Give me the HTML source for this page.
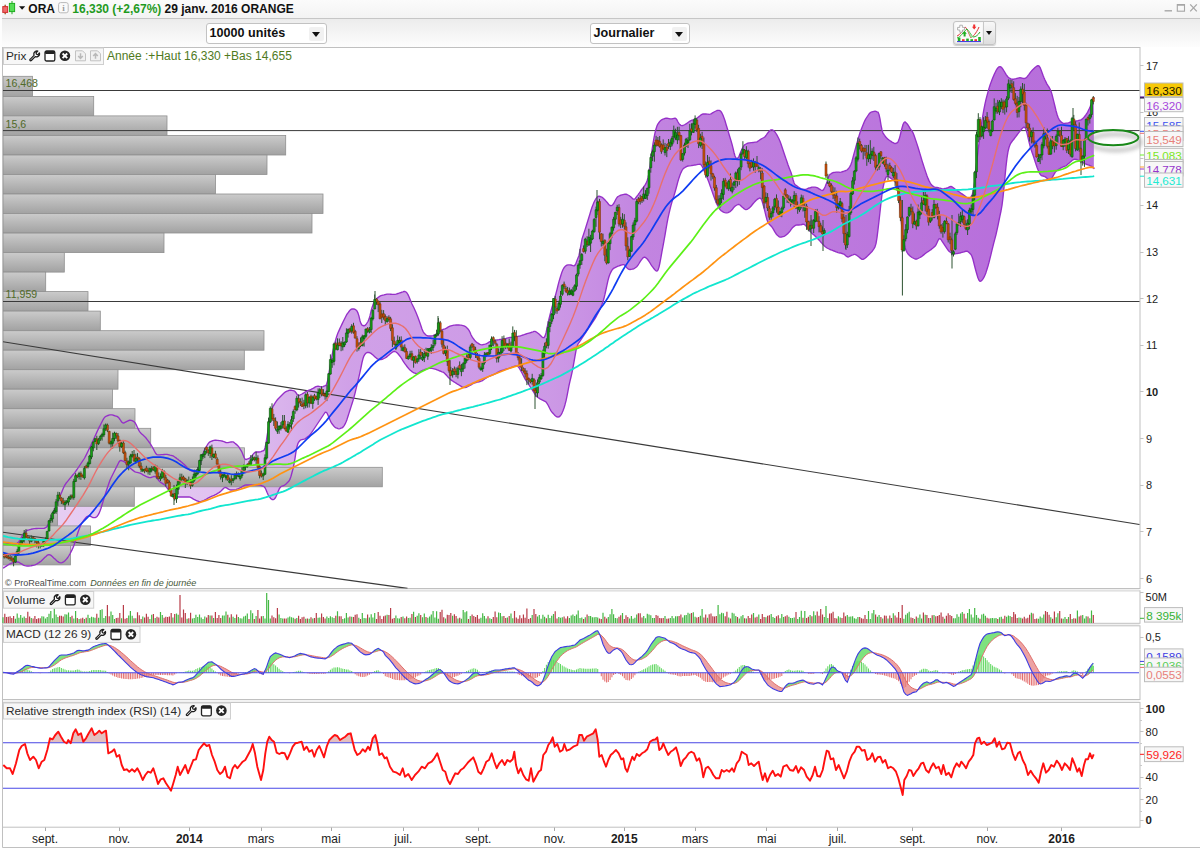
<!DOCTYPE html>
<html lang="fr">
<head>
<meta charset="utf-8">
<title>ORA - ORANGE - ProRealTime</title>
<style>
html,body{margin:0;padding:0;background:#fff;}
body{width:1200px;height:849px;overflow:hidden;position:relative;font-family:"Liberation Sans",Arial,sans-serif;}
#win{position:absolute;left:0;top:0;width:1200px;height:849px;background:#fff;overflow:hidden;}
#titlebar{position:absolute;left:0;top:0;width:1200px;height:18px;background:linear-gradient(#fbfbfb,#f3f3f3);border-bottom:1px solid #c6c6c6;box-sizing:content-box;}
#titlebar .t{position:absolute;top:1.5px;font-size:12px;font-weight:bold;line-height:14px;white-space:nowrap;color:#111;}
#titlebar .g{color:#1e9a1e;}
#toolbar{position:absolute;left:0;top:19px;width:1200px;height:28px;background:linear-gradient(#ececec,#f6f6f6 60%,#fdfdfd);}
.dd{position:absolute;top:4px;height:19px;background:#fff;border:1px solid #c2c2c2;border-radius:3px;box-sizing:content-box;font-size:12.6px;font-weight:bold;line-height:19.5px;color:#111;}
.dd span{position:absolute;left:2.6px;top:0;white-space:nowrap;}
.dd b{position:absolute;right:2px;top:3px;width:15px;height:14px;background:#f1f1f1;border-radius:2px;}
.dd i{position:absolute;right:6px;top:7.5px;width:0;height:0;border-left:4px solid transparent;border-right:4px solid transparent;border-top:5px solid #111;}
#ibtn{position:absolute;left:952.8px;top:1.8px;width:41px;height:22px;border:1px solid #c4c4c4;border-radius:3px;background:linear-gradient(#f8f8f8,#dedede);box-sizing:content-box;box-shadow:0 1px 1px rgba(0,0,0,.18);}
#ibtn .sep{position:absolute;left:29px;top:0;width:1px;height:22px;background:#c8c8c8;}
#ibtn i{position:absolute;left:32.5px;top:9.5px;width:0;height:0;border-left:3.5px solid transparent;border-right:3.5px solid transparent;border-top:4.5px solid #111;}
#wc{position:absolute;right:0;top:0;}
svg{position:absolute;left:0;top:0;}
</style>
</head>
<body>
<div id="win">
<div id="titlebar">
<svg width="28" height="18" viewBox="0 0 28 18"><path d="M5.2,4.8V14.2M12,1V14.2" stroke="#2a2" stroke-width="1"/><path d="M5.2,4.8V14.2" stroke="#d33" stroke-width="1"/><rect x="2.8" y="6.6" width="4.8" height="5.8" fill="#f06a6a" stroke="#d03030" stroke-width="1"/><rect x="9.4" y="3.4" width="5.2" height="8.2" fill="#55dd55" stroke="#1fae1f" stroke-width="1"/><path d="M19,6.3h6.2l-3.1,3.4z" fill="#111"/></svg>
<span class="t" style="left:28.3px">ORA</span>
<svg width="12" height="12" viewBox="0 0 12 12" style="left:57.5px;top:2px"><rect x="0.6" y="0.6" width="9.6" height="10.2" rx="2" fill="#fafafa" stroke="#b9b9b9" stroke-width="1"/><text x="5.4" y="9" font-family="Liberation Serif,serif" font-size="9" font-weight="bold" fill="#9a9a9a" text-anchor="middle">i</text></svg>
<span class="t g" style="left:72.3px">16,330 (+2,67%)</span>
<span class="t" style="left:164.6px">29 janv. 2016 ORANGE</span>
<svg id="wc" width="40" height="18" viewBox="0 0 40 18" style="left:1160px"><path d="M4.6,10.8h7.4" stroke="#a6a6a6" stroke-width="1.4"/><rect x="17.3" y="4.6" width="7.2" height="6.6" fill="none" stroke="#a6a6a6" stroke-width="1.1"/><path d="M17,4.9h7.8" stroke="#a6a6a6" stroke-width="1.6"/><path d="M30.2,4.4l6.6,7M36.8,4.4l-6.6,7" stroke="#a6a6a6" stroke-width="1.3"/></svg>
</div>
<div id="toolbar">
<div class="dd" style="left:206px;width:118.5px"><span>10000 unités</span><b></b><i></i></div>
<div class="dd" style="left:590px;width:98px"><span>Journalier</span><b></b><i></i></div>
<div id="ibtn"><svg width="29" height="22" viewBox="0 0 29 22">
<rect x="1.5" y="1" width="27" height="19.5" fill="#fbfbfb"/>
<path d="M3,14 C6,13 8,9 11,5 C13,6 14,10 17,16 C19,14 22,12 25,5" fill="none" stroke="#e03030" stroke-width="1"/>
<path d="M3,16 C7,15 9,10 13,7 C15,9 17,13 19,15 C22,15 24,13 26,10" fill="none" stroke="#30b030" stroke-width="1"/>
<path d="M13,7 C15,9 17,13 19,15 L17,16 C15,12 14,8 13,7Z" fill="#9be09b"/>
<path d="M5.8,3.2h2.6v2.2h2.2v2.6h-2.2v2.2h-2.6v-2.2h-2.2v-2.6h2.2z" fill="#fff" stroke="#a8a8a8" stroke-width="0.9"/>
<path d="M8.4,11.7l2.2,-2.6l2.2,2.6h-1.2v2.8h-2v-2.8z" fill="#20b020"/>
<path d="M19.2,2.4h2v2.4h1.2l-2.2,2.6l-2.2,-2.6h1.2z" fill="#f03030"/>
<rect x="3.8" y="15.6" width="2.6" height="3.6" fill="#20b020"/><rect x="8" y="17.2" width="2.6" height="2" fill="#f03030"/><rect x="12.2" y="16.6" width="2.6" height="2.6" fill="#20b020"/><rect x="16.4" y="17.2" width="2.6" height="2" fill="#20b020"/><rect x="20.4" y="17.2" width="2.6" height="2" fill="#f03030"/><rect x="24.2" y="15" width="2.6" height="4.2" fill="#20b020"/>
<path d="M3,19.6h24" stroke="#3030e0" stroke-width="1"/>
</svg><div class="sep"></div><i></i></div>
</div>
<div style="position:absolute;left:0;top:0;width:2px;height:47px;background:#fdfdfd"></div>
<svg id="chart" width="1200" height="849" viewBox="0 0 1200 849">
<defs>
<linearGradient id="gbar" x1="0" y1="0" x2="0" y2="1"><stop offset="0" stop-color="#cbcbcb"/><stop offset="1" stop-color="#a2a2a2"/></linearGradient>
<linearGradient id="gband" gradientUnits="userSpaceOnUse" x1="0" y1="0" x2="1200" y2="0">
<stop offset="0.04" stop-color="#9932cc" stop-opacity="0.24"/>
<stop offset="0.19" stop-color="#9932cc" stop-opacity="0.30"/>
<stop offset="0.29" stop-color="#9932cc" stop-opacity="0.46"/>
<stop offset="0.46" stop-color="#9932cc" stop-opacity="0.50"/>
<stop offset="0.54" stop-color="#9932cc" stop-opacity="0.60"/>
<stop offset="0.83" stop-color="#9932cc" stop-opacity="0.70"/>
</linearGradient>
<clipPath id="cmain"><rect x="3" y="48" width="1137" height="540.5"/></clipPath>
<clipPath id="cband"><rect x="3" y="48" width="1090.7" height="540.5"/></clipPath>
<clipPath id="crsi70"><rect x="3" y="703" width="1137" height="39.7"/></clipPath>
<filter id="blur" x="-30%" y="-80%" width="160%" height="300%"><feGaussianBlur stdDeviation="2.1"/></filter>
</defs>
<g fill="none" stroke="#c0c0c0" stroke-width="1">
<path d="M2.5,47.5 V847.5 H1200"/>
<rect x="2.5" y="47.5" width="1137.5" height="541"/>
<rect x="2.5" y="590.8" width="1137.5" height="32.5"/>
<path d="M3,589.7 H1139.5 M3,624.6 H1139.5 M3,700.9 H1139.5" stroke="#f0f0f0" stroke-width="1.4"/>
<rect x="2.5" y="625.8" width="1137.5" height="73.7"/>
<rect x="2.5" y="702.4" width="1137.5" height="124.8"/>
</g>
<g clip-path="url(#cmain)">
<path d="M3,542.5 L4,542.7 L5,542.9 L6,543.1 L7,543.3 L8,543.5 L9,543.7 L10,543.8 L11,543.8 L12,543.8 L13,543.8 L14,543.8 L15,543.8 L16,543.8 L17,543.4 L18,542.6 L19,541.4 L20,539.9 L21,538.1 L22,536.3 L23,534.7 L24,533.4 L25,532.2 L26,531.2 L27,530.5 L28,530.1 L29,529.9 L30,529.6 L31,529.3 L32,529 L33,528.8 L34,528.6 L35,528.6 L36,528.5 L37,528.5 L38,528.4 L39,528.3 L40,528.3 L41,528.3 L42,528.3 L43,528.3 L44,528.3 L45,528 L46,527.4 L47,526.4 L48,525 L49,523.1 L50,520.8 L51,518.4 L52,515.9 L53,513.2 L54,510.7 L55,508.2 L56,505.8 L57,503.4 L58,500.8 L59,498.4 L60,496 L61,493.7 L62,491.4 L63,489.1 L64,486.8 L65,484.9 L66,483.3 L67,482.1 L68,480.9 L69,479.6 L70,478.4 L71,477.2 L72,476 L73,474.8 L74,473.6 L75,472.3 L76,470.9 L77,469.5 L78,468 L79,466.5 L80,465 L81,463.5 L82,462 L83,460.5 L84,459 L85,457.3 L86,455.4 L87,453.4 L88,451.3 L89,449.3 L90,447.2 L91,445.1 L92,442.9 L93,440.7 L94,438.5 L95,436.3 L96,434.1 L97,431.9 L98,429.7 L99,427.6 L100,425.7 L101,423.7 L102,421.7 L103,419.8 L104,418.1 L105,417 L106,416.3 L107,415.9 L108,415.5 L109,415.1 L110,414.8 L111,414.8 L112,414.9 L113,415.2 L114,415.5 L115,415.8 L116,416.1 L117,416.4 L118,417.1 L119,418.1 L120,419.5 L121,421 L122,422.4 L123,423 L124,423 L125,422.4 L126,421.8 L127,421.3 L128,420.8 L129,420.5 L130,420.2 L131,420.3 L132,420.7 L133,421.2 L134,421.7 L135,422.7 L136,424.3 L137,426.5 L138,428.6 L139,430.6 L140,432.1 L141,433.3 L142,434.2 L143,435.1 L144,436 L145,436.9 L146,438 L147,439.3 L148,440.7 L149,442 L150,443.4 L151,444.8 L152,446.5 L153,448.3 L154,450.3 L155,452.2 L156,453.8 L157,454.7 L158,454.9 L159,454.8 L160,454.8 L161,454.7 L162,454.6 L163,454.6 L164,454.5 L165,454.4 L166,454.4 L167,454.4 L168,454.6 L169,454.8 L170,455.1 L171,455.3 L172,455.6 L173,455.9 L174,456.5 L175,457.2 L176,457.9 L177,458.7 L178,459.4 L179,460.2 L180,460.9 L181,461.7 L182,462.5 L183,463.4 L184,464.3 L185,465.3 L186,466.3 L187,467.4 L188,468.4 L189,469.4 L190,470.2 L191,470.7 L192,471.1 L193,471.4 L194,471.6 L195,471.4 L196,470.7 L197,469.7 L198,468.7 L199,467.1 L200,464.6 L201,461.2 L202,457.5 L203,453.9 L204,451 L205,448.7 L206,447.1 L207,445.5 L208,443.9 L209,442.6 L210,441.8 L211,441.3 L212,441 L213,440.6 L214,440.3 L215,440.2 L216,440.2 L217,440.3 L218,440.4 L219,440.6 L220,440.7 L221,440.8 L222,441 L223,441.3 L224,441.7 L225,442.1 L226,442.5 L227,442.7 L228,442.6 L229,442.4 L230,442.2 L231,442 L232,441.8 L233,441.9 L234,442.4 L235,443.3 L236,444.1 L237,444.9 L238,445.9 L239,447.2 L240,448.8 L241,450.4 L242,452.3 L243,454.7 L244,457.3 L245,459 L246,459.6 L247,459.2 L248,458.8 L249,458.4 L250,457.7 L251,456.8 L252,455.6 L253,454.4 L254,453.2 L255,452.4 L256,452 L257,452 L258,452 L259,452 L260,451.9 L261,451.6 L262,451.2 L263,450.8 L264,450.4 L265,447.9 L266,443.3 L267,436.7 L268,430.4 L269,424.5 L270,419 L271,413.5 L272,409.3 L273,406.4 L274,404.8 L275,403.2 L276,401.6 L277,400.2 L278,399 L279,398 L280,397 L281,396 L282,395 L283,394 L284,393 L285,392.2 L286,391.6 L287,391.2 L288,390.8 L289,390.4 L290,390.2 L291,390.2 L292,390.4 L293,390.6 L294,390.8 L295,391.5 L296,392.7 L297,394.3 L298,395.3 L299,395.5 L300,395 L301,394.5 L302,394 L303,393.4 L304,392.8 L305,392.2 L306,391.6 L307,391.1 L308,390.6 L309,390.2 L310,389.8 L311,389.4 L312,388.9 L313,388.4 L314,387.8 L315,387.2 L316,386.6 L317,386.3 L318,386.2 L319,386.4 L320,386.6 L321,386.8 L322,386.8 L323,386.6 L324,386.2 L325,385.8 L326,385.4 L327,383.1 L328,379 L329,373 L330,367.1 L331,361.3 L332,355.7 L333,350.6 L334,346.2 L335,342.5 L336,338.8 L337,335.5 L338,332.8 L339,330.6 L340,328.4 L341,326.2 L342,324.1 L343,322 L344,320 L345,318 L346,316 L347,314.2 L348,312.8 L349,311.5 L350,310.2 L351,309.4 L352,309 L353,309 L354,309 L355,309.3 L356,310 L357,311 L358,313.1 L359,316.3 L360,320.7 L361,323.6 L362,325.2 L363,325.5 L364,325.8 L365,325.4 L366,324.5 L367,323 L368,321.5 L369,319.1 L370,315.7 L371,311.3 L372,307.7 L373,304.7 L374,302.3 L375,300.5 L376,299.2 L377,298.4 L378,297.6 L379,296.8 L380,296.2 L381,295.7 L382,295.4 L383,295.1 L384,294.9 L385,294.6 L386,294.3 L387,294.1 L388,294.1 L389,294.1 L390,294.2 L391,294.2 L392,294.3 L393,294.4 L394,294.4 L395,294.4 L396,294.2 L397,293.8 L398,293.5 L399,293.2 L400,292.8 L401,292.5 L402,292.1 L403,291.8 L404,291.4 L405,291.5 L406,292 L407,293 L408,294.6 L409,296.7 L410,299.3 L411,301.8 L412,304 L413,306 L414,308 L415,310.2 L416,312.5 L417,315 L418,317.5 L419,320.2 L420,323 L421,326 L422,329 L423,331.3 L424,333 L425,334 L426,335 L427,335.7 L428,336 L429,336 L430,336 L431,336 L432,335.9 L433,335.6 L434,335.2 L435,334.8 L436,334.4 L437,333.8 L438,333 L439,332 L440,331 L441,330.2 L442,329.8 L443,329.5 L444,329.2 L445,328.9 L446,328.4 L447,327.8 L448,327.2 L449,326.6 L450,326.1 L451,325.8 L452,325.6 L453,325.4 L454,325.2 L455,325.1 L456,325 L457,325 L458,325 L459,325 L460,325.1 L461,325.2 L462,325.4 L463,325.6 L464,325.8 L465,326.3 L466,327 L467,328 L468,329 L469,330.4 L470,332.3 L471,334.7 L472,336.6 L473,338.2 L474,339.5 L475,340.8 L476,341.8 L477,342.6 L478,343.2 L479,343.8 L480,344.4 L481,344.7 L482,344.8 L483,344.6 L484,344.4 L485,344.2 L486,343.9 L487,343.4 L488,342.8 L489,342.2 L490,341.6 L491,341.1 L492,340.8 L493,340.7 L494,340.5 L495,340.3 L496,340.2 L497,340 L498,339.8 L499,339.7 L500,339.5 L501,339.3 L502,339.2 L503,339 L504,338.8 L505,338.6 L506,338.4 L507,338.1 L508,337.9 L509,337.7 L510,337.5 L511,337.4 L512,337.3 L513,337.2 L514,337.1 L515,337 L516,336.8 L517,336.6 L518,336.4 L519,336.2 L520,336 L521,335.7 L522,335.3 L523,335 L524,334.7 L525,334.3 L526,334 L527,333.7 L528,333.4 L529,333.1 L530,332.8 L531,332.5 L532,332.1 L533,331.8 L534,331.4 L535,331.4 L536,331.8 L537,332.5 L538,333.2 L539,334.1 L540,335 L541,336 L542,337 L543,337.6 L544,337.7 L545,336.1 L546,332.9 L547,328.2 L548,323.4 L549,319 L550,314.9 L551,311 L552,307.3 L553,303.9 L554,300.4 L555,297 L556,293.4 L557,289.6 L558,285.5 L559,281.7 L560,278.2 L561,275 L562,271.9 L563,269.5 L564,267.8 L565,266.6 L566,265.7 L567,265.1 L568,264.9 L569,264.9 L570,264.9 L571,265 L572,265.3 L573,265.7 L574,265.9 L575,265.1 L576,263.3 L577,260.6 L578,258.1 L579,255.5 L580,250.2 L581,244.7 L582,239 L583,236 L584,233 L585,229.9 L586,226.8 L587,223.5 L588,220.2 L589,217 L590,213.7 L591,210.3 L592,207.3 L593,204.7 L594,202.3 L595,200.3 L596,198.7 L597,197.3 L598,196.5 L599,196.2 L600,196.5 L601,196.8 L602,197.2 L603,198 L604,199 L605,200 L606,201.1 L607,202.2 L608,203.5 L609,204.8 L610,205.5 L611,205.7 L612,205.3 L613,204.4 L614,203 L615,201 L616,199 L617,197.5 L618,196.5 L619,196 L620,195.5 L621,195.1 L622,194.8 L623,194.6 L624,194.4 L625,194.2 L626,194.2 L627,194.5 L628,195 L629,195.5 L630,196.2 L631,197 L632,198 L633,199 L634,199.2 L635,198.8 L636,197.5 L637,196.2 L638,194.9 L639,193.5 L640,192 L641,190.5 L642,189.1 L643,187.8 L644,186.5 L645,185.2 L646,183.4 L647,181 L648,178 L649,173 L650,166 L651,157.8 L652,150.3 L653,143.7 L654,137.9 L655,133 L656,129 L657,125.9 L658,123.8 L659,122.5 L660,121.2 L661,120.3 L662,119.6 L663,119.2 L664,118.8 L665,118.4 L666,118.2 L667,118.2 L668,118.4 L669,118.6 L670,118.8 L671,118.9 L672,118.8 L673,118.6 L674,118.4 L675,118.2 L676,118.7 L677,120 L678,122 L679,123.6 L680,124.7 L681,125.3 L682,125.6 L683,125.5 L684,125 L685,124.5 L686,123.9 L687,123.2 L688,122.5 L689,121.8 L690,121.1 L691,120.6 L692,120.2 L693,119.9 L694,119.5 L695,119 L696,118.5 L697,118 L698,117.4 L699,116.6 L700,115.8 L701,114.9 L702,114.3 L703,114 L704,114 L705,114 L706,114 L707,114.1 L708,114.2 L709,114.4 L710,114.2 L711,113.9 L712,113.2 L713,112.6 L714,112 L715,111.5 L716,111 L717,110.5 L718,110.3 L719,110.3 L720,110.7 L721,111.6 L722,113.2 L723,115.3 L724,117.9 L725,120.8 L726,124.2 L727,127.5 L728,130.8 L729,134.2 L730,137.5 L731,140.8 L732,144.2 L733,148.1 L734,152.5 L735,156 L736,158 L737,158.5 L738,157.9 L739,156.3 L740,153.7 L741,151.2 L742,149 L743,147 L744,145.5 L745,144.5 L746,144 L747,143.5 L748,143.1 L749,142.9 L750,142.8 L751,142.7 L752,142.6 L753,142.5 L754,142.4 L755,142.2 L756,142.1 L757,141.8 L758,141.2 L759,140.5 L760,139.8 L761,139.1 L762,138.5 L763,138 L764,137.5 L765,136.7 L766,135.5 L767,134 L768,132.7 L769,131.5 L770,130.5 L771,129.9 L772,129.8 L773,130.2 L774,130.9 L775,132 L776,133.5 L777,135.2 L778,137 L779,139 L780,141.3 L781,144 L782,147 L783,150 L784,153 L785,156 L786,158.9 L787,161.8 L788,164.7 L789,167.4 L790,170 L791,172.5 L792,175.7 L793,179.5 L794,182.7 L795,184.7 L796,185.3 L797,186 L798,186.8 L799,187.5 L800,188.2 L801,188.8 L802,189.1 L803,189.2 L804,189.4 L805,189.3 L806,189.1 L807,188.8 L808,188.4 L809,188 L810,187.8 L811,187.5 L812,187.2 L813,187.1 L814,187.1 L815,187.2 L816,187.4 L817,187.7 L818,188.2 L819,188.8 L820,189.4 L821,190 L822,190.5 L823,190.2 L824,189 L825,187 L826,184.6 L827,181.7 L828,178.3 L829,175.9 L830,174.4 L831,173.8 L832,173.1 L833,172.7 L834,172.4 L835,172.3 L836,172.2 L837,172.1 L838,172.1 L839,172.2 L840,172.3 L841,172.2 L842,171.8 L843,171.5 L844,171.2 L845,170.8 L846,170.5 L847,170 L848,169.1 L849,167.9 L850,166.4 L851,164.2 L852,161.2 L853,157.5 L854,153.8 L855,150.1 L856,146.5 L857,143 L858,139.5 L859,136 L860,132.8 L861,130 L862,127.5 L863,125 L864,122.5 L865,120.3 L866,118.5 L867,117 L868,115.5 L869,114 L870,112.9 L871,112.2 L872,111.9 L873,111.6 L874,111.3 L875,111.2 L876,111.4 L877,111.8 L878,112.1 L879,114.5 L880,118.8 L881,125.1 L882,129.9 L883,133.1 L884,134.5 L885,136 L886,137.3 L887,138.4 L888,139.2 L889,140 L890,140.7 L891,141.4 L892,142.1 L893,142.6 L894,143.2 L895,143.5 L896,143.4 L897,142.9 L898,141.9 L899,139.6 L900,136.1 L901,131.9 L902,128.1 L903,124.5 L904,122.5 L905,121.9 L906,122.7 L907,123.7 L908,125 L909,126.6 L910,128.3 L911,129.7 L912,131 L913,132.8 L914,135.2 L915,138.2 L916,141.1 L917,144.1 L918,147.3 L919,150.5 L920,153.9 L921,157.3 L922,160.6 L923,163.8 L924,166.9 L925,169.9 L926,172.9 L927,175.8 L928,178.4 L929,180.6 L930,182.5 L931,184.1 L932,185.3 L933,186.2 L934,186.8 L935,187.1 L936,187.3 L937,187.5 L938,187.7 L939,188 L940,188.2 L941,188.5 L942,188.8 L943,188.8 L944,188.7 L945,188.5 L946,188.3 L947,188 L948,187.7 L949,187.1 L950,186.6 L951,186.4 L952,186.8 L953,187.5 L954,188.2 L955,189 L956,189.7 L957,190.4 L958,191.1 L959,191.8 L960,192.5 L961,193.2 L962,193.9 L963,194.6 L964,195.3 L965,196 L966,196.8 L967,197.5 L968,198.2 L969,198.5 L970,198.2 L971,196.9 L972,195 L973,192.5 L974,187 L975,179.1 L976,168.9 L977,159.8 L978,151.2 L979,143.2 L980,135.4 L981,127.9 L982,120.9 L983,114.5 L984,108.8 L985,103.8 L986,99.4 L987,95.6 L988,91.9 L989,88.4 L990,85.3 L991,82.4 L992,79.8 L993,77.3 L994,74.9 L995,72.7 L996,70.7 L997,69 L998,67.7 L999,66.8 L1000,66.6 L1001,66.9 L1002,67.9 L1003,69.3 L1004,71 L1005,72.7 L1006,74.3 L1007,75.8 L1008,77 L1009,77.9 L1010,78.5 L1011,78.9 L1012,79.2 L1013,79.2 L1014,79.2 L1015,78.9 L1016,78.7 L1017,78.4 L1018,78.1 L1019,77.9 L1020,77.7 L1021,77.8 L1022,78.1 L1023,78.4 L1024,78.5 L1025,78.4 L1026,77.8 L1027,76.9 L1028,75.6 L1029,74.3 L1030,72.9 L1031,71.6 L1032,70.5 L1033,69.4 L1034,68.4 L1035,67.5 L1036,66.7 L1037,66 L1038,65.7 L1039,66 L1040,67.3 L1041,69.7 L1042,72.4 L1043,75.2 L1044,77.7 L1045,80 L1046,82.1 L1047,84.1 L1048,85.7 L1049,87.2 L1050,89 L1051,91.2 L1052,94.4 L1053,98.3 L1054,102.4 L1055,106.5 L1056,110.7 L1057,114.3 L1058,117.3 L1059,119.3 L1060,120.8 L1061,121.9 L1062,122.6 L1063,123.1 L1064,123.3 L1065,123.4 L1066,123.2 L1067,123.1 L1068,122.9 L1069,122.6 L1070,122.2 L1071,121.9 L1072,121.7 L1073,121.5 L1074,121.3 L1075,121.2 L1076,121 L1077,120.9 L1078,120.7 L1079,120.4 L1080,120.1 L1081,119.8 L1082,119.2 L1083,118.4 L1084,117.3 L1085,116 L1086,114.7 L1087,113.1 L1088,111.4 L1089,109.4 L1090,107.1 L1091,104.5 L1092,101.7 L1093,99.4 L1094,98 L1094.2,97.4 L1094.2,169 L1094,168.5 L1093,167.7 L1092,166.8 L1091,166.1 L1090,165.6 L1089,165.2 L1088,164.8 L1087,164.5 L1086,164.1 L1085,163.7 L1084,163.2 L1083,162.6 L1082,161.9 L1081,161.4 L1080,160.9 L1079,160.5 L1078,160 L1077,159.5 L1076,159.3 L1075,159.2 L1074,159.4 L1073,159.8 L1072,160.5 L1071,161.4 L1070,162.3 L1069,163.2 L1068,164.1 L1067,165.1 L1066,165.8 L1065,166.2 L1064,166.5 L1063,166.8 L1062,167.3 L1061,167.9 L1060,168.5 L1059,169.1 L1058,169.8 L1057,170.5 L1056,171.4 L1055,172.6 L1054,174.3 L1053,176.2 L1052,177.9 L1051,179.2 L1050,179.9 L1049,179.8 L1048,179.2 L1047,178.3 L1046,177.4 L1045,176.7 L1044,176.3 L1043,176 L1042,175.9 L1041,175.2 L1040,174 L1039,172.1 L1038,169.8 L1037,167.2 L1036,164.3 L1035,161.2 L1034,158 L1033,155.1 L1032,152.3 L1031,149.3 L1030,145.9 L1029,141.8 L1028,137.3 L1027,133 L1026,129.5 L1025,127.6 L1024,127.1 L1023,127.8 L1022,128.7 L1021,129.8 L1020,131.1 L1019,132.3 L1018,133.7 L1017,135 L1016,136.4 L1015,137.7 L1014,139 L1013,140.2 L1012,141.5 L1011,142.9 L1010,144.7 L1009,147.5 L1008,151.7 L1007,158 L1006,166.4 L1005,176.7 L1004,187.4 L1003,197.5 L1002,205.3 L1001,211 L1000,215.7 L999,220.5 L998,225.5 L997,230.2 L996,234.5 L995,238.4 L994,242.2 L993,246.1 L992,250.1 L991,254.3 L990,258.4 L989,262.4 L988,266 L987,269.3 L986,272.4 L985,275 L984,277.1 L983,278.8 L982,280.2 L981,281.1 L980,281.4 L979,280.3 L978,278 L977,274.7 L976,271.2 L975,267.5 L974,263.6 L973,259.5 L972,256.5 L971,254.5 L970,253.5 L969,252.6 L968,251.7 L967,251.2 L966,251.2 L965,251.5 L964,251.8 L963,252.1 L962,252.4 L961,252.7 L960,253 L959,253.2 L958,253.4 L957,253.6 L956,253.7 L955,253.9 L954,254.1 L953,254 L952,253.5 L951,252.8 L950,252 L949,251.2 L948,250 L947,248.7 L946,247.2 L945,245.7 L944,244.1 L943,242.6 L942,241.1 L941,239.5 L940,238.7 L939,238.9 L938,240.5 L937,242.8 L936,244.9 L935,246.3 L934,247.1 L933,248 L932,248.8 L931,249.6 L930,250.3 L929,251 L928,251.6 L927,252.3 L926,253 L925,253.8 L924,254.6 L923,255.4 L922,256.2 L921,256.9 L920,257.5 L919,258 L918,258.5 L917,259 L916,259.2 L915,259 L914,258.5 L913,258 L912,257.5 L911,256.8 L910,256 L909,255 L908,254 L907,252.4 L906,250.3 L905,247.5 L904,243.4 L903,237.2 L902,228.5 L901,218.7 L900,208.4 L899,199.1 L898,191.2 L897,186.1 L896,183 L895,181.7 L894,180.7 L893,179.8 L892,179.1 L891,178.4 L890,177.6 L889,176.9 L888,176.1 L887,176.2 L886,177.2 L885,179.7 L884,183.2 L883,187.8 L882,194.4 L881,202.6 L880,212 L879,220.8 L878,229.6 L877,237.6 L876,243.6 L875,246.8 L874,248.6 L873,250.2 L872,251.5 L871,252.5 L870,253.5 L869,254.6 L868,255.6 L867,256.5 L866,257.4 L865,258.2 L864,258.9 L863,259.4 L862,259.3 L861,258.7 L860,257.9 L859,257 L858,256.2 L857,255.5 L856,254.8 L855,254.4 L854,254.4 L853,254.8 L852,255.1 L851,255.6 L850,256.1 L849,256.6 L848,257 L847,256.7 L846,256 L845,255 L844,254.2 L843,253.8 L842,253.5 L841,253.2 L840,253 L839,252.8 L838,252.6 L837,252.2 L836,251.9 L835,251.4 L834,251 L833,250.6 L832,250.2 L831,249.9 L830,249.5 L829,249 L828,248.5 L827,248 L826,247.3 L825,246.5 L824,245.5 L823,244.5 L822,243.4 L821,242.3 L820,241.1 L819,240 L818,239 L817,238 L816,237 L815,236 L814,235.1 L813,234.2 L812,233.4 L811,232.3 L810,231.1 L809,229.6 L808,228.3 L807,227.1 L806,226 L805,225 L804,224.4 L803,224.2 L802,224.5 L801,224.8 L800,224.9 L799,225 L798,225 L797,225 L796,225.2 L795,225.7 L794,226.4 L793,227.3 L792,228.3 L791,229.6 L790,231.1 L789,232.3 L788,233.4 L787,234.2 L786,235.1 L785,235.8 L784,236.3 L783,236.6 L782,236.9 L781,237.2 L780,237.1 L779,236.6 L778,235.8 L777,234.9 L776,233.7 L775,232.1 L774,230.3 L773,228.6 L772,227.1 L771,226 L770,225 L769,224 L768,222.5 L767,219.8 L766,216.1 L765,211.8 L764,207.8 L763,204.2 L762,200.8 L761,198.8 L760,197.9 L759,198.4 L758,198.9 L757,199.6 L756,200.5 L755,201.5 L754,202.6 L753,203.8 L752,205 L751,206.2 L750,207.3 L749,208.1 L748,208.8 L747,209.4 L746,209.6 L745,209.3 L744,208.6 L743,207.8 L742,207 L741,206 L740,205 L739,204.5 L738,204.5 L737,205 L736,205.5 L735,206.2 L734,207.2 L733,208.5 L732,209.8 L731,210.8 L730,211.6 L729,212.1 L728,212.6 L727,212.8 L726,212.8 L725,212.6 L724,212.3 L723,211.9 L722,211.2 L721,210.6 L720,209.6 L719,208.1 L718,206.2 L717,204.4 L716,202.2 L715,199.6 L714,196.8 L713,193.9 L712,191.1 L711,188.2 L710,185.4 L709,182.6 L708,180 L707,177.5 L706,175 L705,172.6 L704,170.4 L703,168.2 L702,166.1 L701,164.8 L700,164.1 L699,164.3 L698,164.4 L697,164.6 L696,164.8 L695,165 L694,165.2 L693,165.4 L692,165.5 L691,165.7 L690,165.8 L689,165.8 L688,166 L687,166.4 L686,166.9 L685,167.5 L684,168.1 L683,169 L682,170.5 L681,172.6 L680,175.1 L679,177.9 L678,181.2 L677,185 L676,188.8 L675,192.3 L674,195.6 L673,198.8 L672,201.9 L671,205.4 L670,209.3 L669,213.6 L668,218.2 L667,223.3 L666,229.1 L665,235.1 L664,240.7 L663,246.1 L662,251.4 L661,257.1 L660,262.5 L659,267.1 L658,270 L657,271.1 L656,270.8 L655,269.9 L654,268.8 L653,267.4 L652,266.1 L651,264.6 L650,263 L649,261.4 L648,260 L647,258.8 L646,257.9 L645,257.2 L644,257.2 L643,257.9 L642,259.1 L641,260.4 L640,261.8 L639,263.5 L638,265.1 L637,266.4 L636,267.3 L635,268 L634,268.6 L633,269 L632,269.2 L631,269.3 L630,269.5 L629,269.3 L628,268.8 L627,267.9 L626,266.7 L625,265.4 L624,264.7 L623,264.6 L622,264.9 L621,265.2 L620,265.5 L619,265.9 L618,266.2 L617,266.6 L616,267.1 L615,267.6 L614,268.1 L613,268.9 L612,270.2 L611,271.9 L610,274 L609,276.8 L608,280.4 L607,284.9 L606,289.5 L605,294.2 L604,298.3 L603,301.6 L602,304.3 L601,306.8 L600,309.1 L599,311.1 L598,313.1 L597,315 L596,316.9 L595,318.6 L594,320.1 L593,321.7 L592,323.2 L591,324.7 L590,326.2 L589,327.7 L588,329.1 L587,330.6 L586,332.1 L585,333.6 L584,335.1 L583,336.6 L582,338.1 L581,339.6 L580,341.1 L579,342.5 L578,344 L577,346.7 L576,350.7 L575,356.2 L574,361.9 L573,367.5 L572,372.6 L571,377 L570,381.1 L569,385.7 L568,390.8 L567,396.2 L566,400.9 L565,404.7 L564,408 L563,410.8 L562,413.1 L561,414.8 L560,416.1 L559,416.9 L558,417 L557,416.8 L556,416.3 L555,415.5 L554,414.4 L553,413.3 L552,412.2 L551,410.8 L550,409 L549,407 L548,405 L547,403.3 L546,402 L545,401.3 L544,400.8 L543,400.3 L542,399.8 L541,399.3 L540,398.8 L539,398.2 L538,397.5 L537,396.7 L536,395.7 L535,394.3 L534,392.7 L533,391.1 L532,389.5 L531,388 L530,386.5 L529,385 L528,383.5 L527,382 L526,380.5 L525,378.8 L524,377 L523,375 L522,373 L521,371.1 L520,369.3 L519,367.7 L518,366.6 L517,366 L516,366 L515,366.1 L514,366.4 L513,366.8 L512,367.2 L511,367.6 L510,368 L509,368.3 L508,368.6 L507,368.9 L506,369.2 L505,369.5 L504,369.8 L503,370.1 L502,370.4 L501,370.7 L500,371.1 L499,371.6 L498,372.2 L497,372.8 L496,373.4 L495,373.9 L494,374.4 L493,374.8 L492,375.2 L491,375.6 L490,376 L489,376.5 L488,377 L487,377.5 L486,378.1 L485,378.8 L484,379.5 L483,380.2 L482,380.8 L481,381.2 L480,381.5 L479,381.8 L478,382 L477,382.2 L476,382.5 L475,382.8 L474,383.1 L473,383.6 L472,384.2 L471,384.9 L470,385.5 L469,386 L468,386.5 L467,387 L466,387.3 L465,387.5 L464,387.5 L463,387.3 L462,386.9 L461,386.2 L460,385.6 L459,385 L458,384.4 L457,383.8 L456,383.1 L455,382.5 L454,381.9 L453,381.2 L452,380.6 L451,379.9 L450,379 L449,378 L448,377 L447,375.9 L446,374.8 L445,373.7 L444,372.8 L443,372.1 L442,371.8 L441,371.4 L440,371 L439,370.6 L438,370.2 L437,369.8 L436,369.4 L435,369.1 L434,368.8 L433,368.6 L432,368.4 L431,368.2 L430,368.2 L429,368.3 L428,368.6 L427,368.9 L426,369.2 L425,369.5 L424,369.9 L423,370.2 L422,370.6 L421,371.1 L420,371.8 L419,372.5 L418,373.2 L417,373.6 L416,373.6 L415,373.2 L414,372.9 L413,372.3 L412,371.6 L411,370.8 L410,369.9 L409,368.9 L408,367.8 L407,366.5 L406,365.2 L405,363.9 L404,362.4 L403,360.8 L402,359.1 L401,357.6 L400,356.2 L399,355 L398,353.8 L397,352.8 L396,352 L395,351.5 L394,351.4 L393,351.8 L392,352.5 L391,353.2 L390,354 L389,354.9 L388,355.8 L387,356.6 L386,357.4 L385,358 L384,358.5 L383,359 L382,359.3 L381,359.5 L380,359.5 L379,359.5 L378,359.2 L377,358.6 L376,357.8 L375,356.9 L374,356 L373,355.1 L372,354.2 L371,353.4 L370,352.8 L369,352.5 L368,352.5 L367,352.5 L366,353.1 L365,354.2 L364,355.8 L363,358.6 L362,362.5 L361,367.5 L360,372.2 L359,376.7 L358,380.8 L357,385 L356,389.2 L355,393.3 L354,397.2 L353,400.6 L352,403.8 L351,406.9 L350,410 L349,413.1 L348,416.2 L347,419.4 L346,422 L345,424.2 L344,425.8 L343,427.1 L342,427.9 L341,428.2 L340,428.6 L339,428.8 L338,428.6 L337,428.2 L336,427.9 L335,427.2 L334,426.2 L333,425 L332,423.8 L331,422.1 L330,420 L329,417.5 L328,415.2 L327,413 L326,412.2 L325,412.5 L324,414 L323,415.5 L322,417 L321,418.5 L320,420 L319,421.5 L318,423 L317,424.5 L316,426 L315,427.5 L314,429 L313,430.5 L312,432 L311,433.5 L310,434.8 L309,435.8 L308,436.6 L307,437.4 L306,438.2 L305,438.8 L304,439.2 L303,439.4 L302,439.6 L301,439.8 L300,440.5 L299,441.7 L298,443.3 L297,446.7 L296,451.7 L295,458.3 L294,464 L293,468.8 L292,472.5 L291,476.2 L290,479.1 L289,481 L288,482 L287,483 L286,484 L285,484.8 L284,485.4 L283,485.8 L282,486.2 L281,486.6 L280,487.7 L279,489.4 L278,491.8 L277,494.2 L276,496.6 L275,498.3 L274,499.3 L273,499.7 L272,499.5 L271,498.8 L270,497.5 L269,496.2 L268,494.5 L267,492.3 L266,489.7 L265,487.8 L264,486.6 L263,486.2 L262,485.8 L261,485.4 L260,485.1 L259,485 L258,485 L257,485 L256,485 L255,485 L254,485 L253,485 L252,485 L251,485 L250,485 L249,485 L248,485 L247,485 L246,485 L245,485.2 L244,485.6 L243,486.2 L242,486.8 L241,487.4 L240,487.9 L239,488.4 L238,488.8 L237,489.2 L236,489.6 L235,489.9 L234,490 L233,490 L232,490 L231,490 L230,489.8 L229,489.4 L228,488.8 L227,488.2 L226,487.6 L225,487.5 L224,488 L223,489 L222,490 L221,491 L220,491.9 L219,492.6 L218,493.2 L217,493.8 L216,494.4 L215,494.9 L214,495.4 L213,495.8 L212,496.2 L211,496.6 L210,497.1 L209,497.6 L208,498.2 L207,498.8 L206,499.4 L205,499.9 L204,500.4 L203,500.8 L202,501.2 L201,501.6 L200,501.7 L199,501.6 L198,501.2 L197,500.8 L196,500.4 L195,499.9 L194,499.4 L193,498.8 L192,498.2 L191,497.6 L190,497.2 L189,497 L188,497 L187,497 L186,497 L185,497 L184,497 L183,497 L182,497 L181,497 L180,497 L179,497 L178,497 L177,497 L176,497 L175,496.7 L174,496 L173,495 L172,494 L171,493 L170,491.9 L169,490.6 L168,489.2 L167,487.8 L166,486.4 L165,485.3 L164,484.4 L163,483.8 L162,483.2 L161,482.6 L160,481.8 L159,480.8 L158,479.6 L157,478.4 L156,477.2 L155,476.5 L154,476.4 L153,476.8 L152,477.2 L151,477.6 L150,477.7 L149,477.6 L148,477.2 L147,476.8 L146,476.4 L145,475.9 L144,475.4 L143,474.8 L142,474.2 L141,473.6 L140,473.1 L139,472.8 L138,472.6 L137,472.4 L136,472.2 L135,471.8 L134,471.2 L133,470.4 L132,469.6 L131,468.8 L130,467.9 L129,466.8 L128,465.6 L127,464.4 L126,463.2 L125,462.3 L124,461.6 L123,461.2 L122,460.8 L121,460.4 L120,460.8 L119,462 L118,464 L117,466 L116,468 L115,470 L114,472 L113,474 L112,476 L111,478 L110,480.3 L109,483 L108,486 L107,489 L106,492 L105,495.1 L104,498.3 L103,501.6 L102,504.9 L101,508.2 L100,511 L99,513.4 L98,515.2 L97,516.5 L96,517.3 L95,517.5 L94,517.6 L93,517.5 L92,517.1 L91,516.5 L90,516.1 L89,515.9 L88,516.1 L87,516.6 L86,517.5 L85,518.7 L84,520 L83,521.3 L82,522.9 L81,524.8 L80,527.1 L79,529.4 L78,532.2 L77,535.4 L76,538.9 L75,542.3 L74,545.2 L73,547.7 L72,549.9 L71,551.9 L70,553.8 L69,555.5 L68,557.1 L67,558.5 L66,559.6 L65,560.7 L64,561.6 L63,562.2 L62,562.7 L61,562.8 L60,562.7 L59,562.3 L58,561.7 L57,561 L56,560.1 L55,559.1 L54,558.2 L53,557.2 L52,556.2 L51,555.4 L50,554.9 L49,554.7 L48,554.9 L47,555.4 L46,556.4 L45,557.3 L44,558.3 L43,559.3 L42,560.2 L41,561.2 L40,561.9 L39,562.6 L38,563.2 L37,563.9 L36,564.4 L35,564.8 L34,565.1 L33,565.3 L32,565.5 L31,565.8 L30,565.9 L29,566 L28,566 L27,566 L26,565.9 L25,565.7 L24,565.3 L23,564.8 L22,564.2 L21,563.6 L20,563 L19,562.4 L18,562 L17,561.8 L16,562 L15,562.1 L14,562.3 L13,562.6 L12,563 L11,563.5 L10,563.9 L9,564.4 L8,565 L7,565.7 L6,566.3 L5,567 L4,567.6 L3,568.3Z" fill="url(#gband)" clip-path="url(#cband)"/>
<g fill="url(#gbar)" stroke="#8f8f8f" stroke-width="0.8">
<rect x="3" y="76.3" width="29.5" height="20.1"/>
<rect x="3" y="96.4" width="90.7" height="19.5"/>
<rect x="3" y="115.9" width="164.0" height="19.5"/>
<rect x="3" y="135.5" width="282.7" height="19.5"/>
<rect x="3" y="155.0" width="264.0" height="19.5"/>
<rect x="3" y="174.5" width="212.5" height="19.5"/>
<rect x="3" y="194.0" width="320.0" height="19.5"/>
<rect x="3" y="213.5" width="309.0" height="19.5"/>
<rect x="3" y="233.1" width="161.0" height="19.5"/>
<rect x="3" y="252.6" width="61.3" height="19.5"/>
<rect x="3" y="272.1" width="42.7" height="19.5"/>
<rect x="3" y="291.6" width="85.0" height="19.5"/>
<rect x="3" y="311.1" width="97.3" height="19.5"/>
<rect x="3" y="330.7" width="261.0" height="19.5"/>
<rect x="3" y="350.2" width="241.3" height="19.5"/>
<rect x="3" y="369.7" width="115.0" height="19.5"/>
<rect x="3" y="389.2" width="109.4" height="19.5"/>
<rect x="3" y="408.7" width="132.0" height="19.5"/>
<rect x="3" y="428.3" width="147.7" height="19.5"/>
<rect x="3" y="447.8" width="241.4" height="19.5"/>
<rect x="3" y="467.3" width="379.3" height="19.5"/>
<rect x="3" y="486.8" width="131.3" height="19.5"/>
<rect x="3" y="506.3" width="54.5" height="19.5"/>
<rect x="3" y="525.9" width="87.5" height="19.5"/>
<rect x="3" y="545.4" width="67.5" height="19.5"/>
</g>
<g stroke="#3a3a3a" stroke-width="1" fill="none">
<path d="M3,90.5 H1139.5 M3,130.6 H1139.5 M3,301.5 H1139.5"/>
<path d="M3,341.7 L1139.5,524.5" stroke-width="1.15"/>
<path d="M3,532.2 L407.5,588.4" stroke-width="1.15"/>
</g>
<path d="M3,542.5 L4,542.7 L5,542.9 L6,543.1 L7,543.3 L8,543.5 L9,543.7 L10,543.8 L11,543.8 L12,543.8 L13,543.8 L14,543.8 L15,543.8 L16,543.8 L17,543.4 L18,542.6 L19,541.4 L20,539.9 L21,538.1 L22,536.3 L23,534.7 L24,533.4 L25,532.2 L26,531.2 L27,530.5 L28,530.1 L29,529.9 L30,529.6 L31,529.3 L32,529 L33,528.8 L34,528.6 L35,528.6 L36,528.5 L37,528.5 L38,528.4 L39,528.3 L40,528.3 L41,528.3 L42,528.3 L43,528.3 L44,528.3 L45,528 L46,527.4 L47,526.4 L48,525 L49,523.1 L50,520.8 L51,518.4 L52,515.9 L53,513.2 L54,510.7 L55,508.2 L56,505.8 L57,503.4 L58,500.8 L59,498.4 L60,496 L61,493.7 L62,491.4 L63,489.1 L64,486.8 L65,484.9 L66,483.3 L67,482.1 L68,480.9 L69,479.6 L70,478.4 L71,477.2 L72,476 L73,474.8 L74,473.6 L75,472.3 L76,470.9 L77,469.5 L78,468 L79,466.5 L80,465 L81,463.5 L82,462 L83,460.5 L84,459 L85,457.3 L86,455.4 L87,453.4 L88,451.3 L89,449.3 L90,447.2 L91,445.1 L92,442.9 L93,440.7 L94,438.5 L95,436.3 L96,434.1 L97,431.9 L98,429.7 L99,427.6 L100,425.7 L101,423.7 L102,421.7 L103,419.8 L104,418.1 L105,417 L106,416.3 L107,415.9 L108,415.5 L109,415.1 L110,414.8 L111,414.8 L112,414.9 L113,415.2 L114,415.5 L115,415.8 L116,416.1 L117,416.4 L118,417.1 L119,418.1 L120,419.5 L121,421 L122,422.4 L123,423 L124,423 L125,422.4 L126,421.8 L127,421.3 L128,420.8 L129,420.5 L130,420.2 L131,420.3 L132,420.7 L133,421.2 L134,421.7 L135,422.7 L136,424.3 L137,426.5 L138,428.6 L139,430.6 L140,432.1 L141,433.3 L142,434.2 L143,435.1 L144,436 L145,436.9 L146,438 L147,439.3 L148,440.7 L149,442 L150,443.4 L151,444.8 L152,446.5 L153,448.3 L154,450.3 L155,452.2 L156,453.8 L157,454.7 L158,454.9 L159,454.8 L160,454.8 L161,454.7 L162,454.6 L163,454.6 L164,454.5 L165,454.4 L166,454.4 L167,454.4 L168,454.6 L169,454.8 L170,455.1 L171,455.3 L172,455.6 L173,455.9 L174,456.5 L175,457.2 L176,457.9 L177,458.7 L178,459.4 L179,460.2 L180,460.9 L181,461.7 L182,462.5 L183,463.4 L184,464.3 L185,465.3 L186,466.3 L187,467.4 L188,468.4 L189,469.4 L190,470.2 L191,470.7 L192,471.1 L193,471.4 L194,471.6 L195,471.4 L196,470.7 L197,469.7 L198,468.7 L199,467.1 L200,464.6 L201,461.2 L202,457.5 L203,453.9 L204,451 L205,448.7 L206,447.1 L207,445.5 L208,443.9 L209,442.6 L210,441.8 L211,441.3 L212,441 L213,440.6 L214,440.3 L215,440.2 L216,440.2 L217,440.3 L218,440.4 L219,440.6 L220,440.7 L221,440.8 L222,441 L223,441.3 L224,441.7 L225,442.1 L226,442.5 L227,442.7 L228,442.6 L229,442.4 L230,442.2 L231,442 L232,441.8 L233,441.9 L234,442.4 L235,443.3 L236,444.1 L237,444.9 L238,445.9 L239,447.2 L240,448.8 L241,450.4 L242,452.3 L243,454.7 L244,457.3 L245,459 L246,459.6 L247,459.2 L248,458.8 L249,458.4 L250,457.7 L251,456.8 L252,455.6 L253,454.4 L254,453.2 L255,452.4 L256,452 L257,452 L258,452 L259,452 L260,451.9 L261,451.6 L262,451.2 L263,450.8 L264,450.4 L265,447.9 L266,443.3 L267,436.7 L268,430.4 L269,424.5 L270,419 L271,413.5 L272,409.3 L273,406.4 L274,404.8 L275,403.2 L276,401.6 L277,400.2 L278,399 L279,398 L280,397 L281,396 L282,395 L283,394 L284,393 L285,392.2 L286,391.6 L287,391.2 L288,390.8 L289,390.4 L290,390.2 L291,390.2 L292,390.4 L293,390.6 L294,390.8 L295,391.5 L296,392.7 L297,394.3 L298,395.3 L299,395.5 L300,395 L301,394.5 L302,394 L303,393.4 L304,392.8 L305,392.2 L306,391.6 L307,391.1 L308,390.6 L309,390.2 L310,389.8 L311,389.4 L312,388.9 L313,388.4 L314,387.8 L315,387.2 L316,386.6 L317,386.3 L318,386.2 L319,386.4 L320,386.6 L321,386.8 L322,386.8 L323,386.6 L324,386.2 L325,385.8 L326,385.4 L327,383.1 L328,379 L329,373 L330,367.1 L331,361.3 L332,355.7 L333,350.6 L334,346.2 L335,342.5 L336,338.8 L337,335.5 L338,332.8 L339,330.6 L340,328.4 L341,326.2 L342,324.1 L343,322 L344,320 L345,318 L346,316 L347,314.2 L348,312.8 L349,311.5 L350,310.2 L351,309.4 L352,309 L353,309 L354,309 L355,309.3 L356,310 L357,311 L358,313.1 L359,316.3 L360,320.7 L361,323.6 L362,325.2 L363,325.5 L364,325.8 L365,325.4 L366,324.5 L367,323 L368,321.5 L369,319.1 L370,315.7 L371,311.3 L372,307.7 L373,304.7 L374,302.3 L375,300.5 L376,299.2 L377,298.4 L378,297.6 L379,296.8 L380,296.2 L381,295.7 L382,295.4 L383,295.1 L384,294.9 L385,294.6 L386,294.3 L387,294.1 L388,294.1 L389,294.1 L390,294.2 L391,294.2 L392,294.3 L393,294.4 L394,294.4 L395,294.4 L396,294.2 L397,293.8 L398,293.5 L399,293.2 L400,292.8 L401,292.5 L402,292.1 L403,291.8 L404,291.4 L405,291.5 L406,292 L407,293 L408,294.6 L409,296.7 L410,299.3 L411,301.8 L412,304 L413,306 L414,308 L415,310.2 L416,312.5 L417,315 L418,317.5 L419,320.2 L420,323 L421,326 L422,329 L423,331.3 L424,333 L425,334 L426,335 L427,335.7 L428,336 L429,336 L430,336 L431,336 L432,335.9 L433,335.6 L434,335.2 L435,334.8 L436,334.4 L437,333.8 L438,333 L439,332 L440,331 L441,330.2 L442,329.8 L443,329.5 L444,329.2 L445,328.9 L446,328.4 L447,327.8 L448,327.2 L449,326.6 L450,326.1 L451,325.8 L452,325.6 L453,325.4 L454,325.2 L455,325.1 L456,325 L457,325 L458,325 L459,325 L460,325.1 L461,325.2 L462,325.4 L463,325.6 L464,325.8 L465,326.3 L466,327 L467,328 L468,329 L469,330.4 L470,332.3 L471,334.7 L472,336.6 L473,338.2 L474,339.5 L475,340.8 L476,341.8 L477,342.6 L478,343.2 L479,343.8 L480,344.4 L481,344.7 L482,344.8 L483,344.6 L484,344.4 L485,344.2 L486,343.9 L487,343.4 L488,342.8 L489,342.2 L490,341.6 L491,341.1 L492,340.8 L493,340.7 L494,340.5 L495,340.3 L496,340.2 L497,340 L498,339.8 L499,339.7 L500,339.5 L501,339.3 L502,339.2 L503,339 L504,338.8 L505,338.6 L506,338.4 L507,338.1 L508,337.9 L509,337.7 L510,337.5 L511,337.4 L512,337.3 L513,337.2 L514,337.1 L515,337 L516,336.8 L517,336.6 L518,336.4 L519,336.2 L520,336 L521,335.7 L522,335.3 L523,335 L524,334.7 L525,334.3 L526,334 L527,333.7 L528,333.4 L529,333.1 L530,332.8 L531,332.5 L532,332.1 L533,331.8 L534,331.4 L535,331.4 L536,331.8 L537,332.5 L538,333.2 L539,334.1 L540,335 L541,336 L542,337 L543,337.6 L544,337.7 L545,336.1 L546,332.9 L547,328.2 L548,323.4 L549,319 L550,314.9 L551,311 L552,307.3 L553,303.9 L554,300.4 L555,297 L556,293.4 L557,289.6 L558,285.5 L559,281.7 L560,278.2 L561,275 L562,271.9 L563,269.5 L564,267.8 L565,266.6 L566,265.7 L567,265.1 L568,264.9 L569,264.9 L570,264.9 L571,265 L572,265.3 L573,265.7 L574,265.9 L575,265.1 L576,263.3 L577,260.6 L578,258.1 L579,255.5 L580,250.2 L581,244.7 L582,239 L583,236 L584,233 L585,229.9 L586,226.8 L587,223.5 L588,220.2 L589,217 L590,213.7 L591,210.3 L592,207.3 L593,204.7 L594,202.3 L595,200.3 L596,198.7 L597,197.3 L598,196.5 L599,196.2 L600,196.5 L601,196.8 L602,197.2 L603,198 L604,199 L605,200 L606,201.1 L607,202.2 L608,203.5 L609,204.8 L610,205.5 L611,205.7 L612,205.3 L613,204.4 L614,203 L615,201 L616,199 L617,197.5 L618,196.5 L619,196 L620,195.5 L621,195.1 L622,194.8 L623,194.6 L624,194.4 L625,194.2 L626,194.2 L627,194.5 L628,195 L629,195.5 L630,196.2 L631,197 L632,198 L633,199 L634,199.2 L635,198.8 L636,197.5 L637,196.2 L638,194.9 L639,193.5 L640,192 L641,190.5 L642,189.1 L643,187.8 L644,186.5 L645,185.2 L646,183.4 L647,181 L648,178 L649,173 L650,166 L651,157.8 L652,150.3 L653,143.7 L654,137.9 L655,133 L656,129 L657,125.9 L658,123.8 L659,122.5 L660,121.2 L661,120.3 L662,119.6 L663,119.2 L664,118.8 L665,118.4 L666,118.2 L667,118.2 L668,118.4 L669,118.6 L670,118.8 L671,118.9 L672,118.8 L673,118.6 L674,118.4 L675,118.2 L676,118.7 L677,120 L678,122 L679,123.6 L680,124.7 L681,125.3 L682,125.6 L683,125.5 L684,125 L685,124.5 L686,123.9 L687,123.2 L688,122.5 L689,121.8 L690,121.1 L691,120.6 L692,120.2 L693,119.9 L694,119.5 L695,119 L696,118.5 L697,118 L698,117.4 L699,116.6 L700,115.8 L701,114.9 L702,114.3 L703,114 L704,114 L705,114 L706,114 L707,114.1 L708,114.2 L709,114.4 L710,114.2 L711,113.9 L712,113.2 L713,112.6 L714,112 L715,111.5 L716,111 L717,110.5 L718,110.3 L719,110.3 L720,110.7 L721,111.6 L722,113.2 L723,115.3 L724,117.9 L725,120.8 L726,124.2 L727,127.5 L728,130.8 L729,134.2 L730,137.5 L731,140.8 L732,144.2 L733,148.1 L734,152.5 L735,156 L736,158 L737,158.5 L738,157.9 L739,156.3 L740,153.7 L741,151.2 L742,149 L743,147 L744,145.5 L745,144.5 L746,144 L747,143.5 L748,143.1 L749,142.9 L750,142.8 L751,142.7 L752,142.6 L753,142.5 L754,142.4 L755,142.2 L756,142.1 L757,141.8 L758,141.2 L759,140.5 L760,139.8 L761,139.1 L762,138.5 L763,138 L764,137.5 L765,136.7 L766,135.5 L767,134 L768,132.7 L769,131.5 L770,130.5 L771,129.9 L772,129.8 L773,130.2 L774,130.9 L775,132 L776,133.5 L777,135.2 L778,137 L779,139 L780,141.3 L781,144 L782,147 L783,150 L784,153 L785,156 L786,158.9 L787,161.8 L788,164.7 L789,167.4 L790,170 L791,172.5 L792,175.7 L793,179.5 L794,182.7 L795,184.7 L796,185.3 L797,186 L798,186.8 L799,187.5 L800,188.2 L801,188.8 L802,189.1 L803,189.2 L804,189.4 L805,189.3 L806,189.1 L807,188.8 L808,188.4 L809,188 L810,187.8 L811,187.5 L812,187.2 L813,187.1 L814,187.1 L815,187.2 L816,187.4 L817,187.7 L818,188.2 L819,188.8 L820,189.4 L821,190 L822,190.5 L823,190.2 L824,189 L825,187 L826,184.6 L827,181.7 L828,178.3 L829,175.9 L830,174.4 L831,173.8 L832,173.1 L833,172.7 L834,172.4 L835,172.3 L836,172.2 L837,172.1 L838,172.1 L839,172.2 L840,172.3 L841,172.2 L842,171.8 L843,171.5 L844,171.2 L845,170.8 L846,170.5 L847,170 L848,169.1 L849,167.9 L850,166.4 L851,164.2 L852,161.2 L853,157.5 L854,153.8 L855,150.1 L856,146.5 L857,143 L858,139.5 L859,136 L860,132.8 L861,130 L862,127.5 L863,125 L864,122.5 L865,120.3 L866,118.5 L867,117 L868,115.5 L869,114 L870,112.9 L871,112.2 L872,111.9 L873,111.6 L874,111.3 L875,111.2 L876,111.4 L877,111.8 L878,112.1 L879,114.5 L880,118.8 L881,125.1 L882,129.9 L883,133.1 L884,134.5 L885,136 L886,137.3 L887,138.4 L888,139.2 L889,140 L890,140.7 L891,141.4 L892,142.1 L893,142.6 L894,143.2 L895,143.5 L896,143.4 L897,142.9 L898,141.9 L899,139.6 L900,136.1 L901,131.9 L902,128.1 L903,124.5 L904,122.5 L905,121.9 L906,122.7 L907,123.7 L908,125 L909,126.6 L910,128.3 L911,129.7 L912,131 L913,132.8 L914,135.2 L915,138.2 L916,141.1 L917,144.1 L918,147.3 L919,150.5 L920,153.9 L921,157.3 L922,160.6 L923,163.8 L924,166.9 L925,169.9 L926,172.9 L927,175.8 L928,178.4 L929,180.6 L930,182.5 L931,184.1 L932,185.3 L933,186.2 L934,186.8 L935,187.1 L936,187.3 L937,187.5 L938,187.7 L939,188 L940,188.2 L941,188.5 L942,188.8 L943,188.8 L944,188.7 L945,188.5 L946,188.3 L947,188 L948,187.7 L949,187.1 L950,186.6 L951,186.4 L952,186.8 L953,187.5 L954,188.2 L955,189 L956,189.7 L957,190.4 L958,191.1 L959,191.8 L960,192.5 L961,193.2 L962,193.9 L963,194.6 L964,195.3 L965,196 L966,196.8 L967,197.5 L968,198.2 L969,198.5 L970,198.2 L971,196.9 L972,195 L973,192.5 L974,187 L975,179.1 L976,168.9 L977,159.8 L978,151.2 L979,143.2 L980,135.4 L981,127.9 L982,120.9 L983,114.5 L984,108.8 L985,103.8 L986,99.4 L987,95.6 L988,91.9 L989,88.4 L990,85.3 L991,82.4 L992,79.8 L993,77.3 L994,74.9 L995,72.7 L996,70.7 L997,69 L998,67.7 L999,66.8 L1000,66.6 L1001,66.9 L1002,67.9 L1003,69.3 L1004,71 L1005,72.7 L1006,74.3 L1007,75.8 L1008,77 L1009,77.9 L1010,78.5 L1011,78.9 L1012,79.2 L1013,79.2 L1014,79.2 L1015,78.9 L1016,78.7 L1017,78.4 L1018,78.1 L1019,77.9 L1020,77.7 L1021,77.8 L1022,78.1 L1023,78.4 L1024,78.5 L1025,78.4 L1026,77.8 L1027,76.9 L1028,75.6 L1029,74.3 L1030,72.9 L1031,71.6 L1032,70.5 L1033,69.4 L1034,68.4 L1035,67.5 L1036,66.7 L1037,66 L1038,65.7 L1039,66 L1040,67.3 L1041,69.7 L1042,72.4 L1043,75.2 L1044,77.7 L1045,80 L1046,82.1 L1047,84.1 L1048,85.7 L1049,87.2 L1050,89 L1051,91.2 L1052,94.4 L1053,98.3 L1054,102.4 L1055,106.5 L1056,110.7 L1057,114.3 L1058,117.3 L1059,119.3 L1060,120.8 L1061,121.9 L1062,122.6 L1063,123.1 L1064,123.3 L1065,123.4 L1066,123.2 L1067,123.1 L1068,122.9 L1069,122.6 L1070,122.2 L1071,121.9 L1072,121.7 L1073,121.5 L1074,121.3 L1075,121.2 L1076,121 L1077,120.9 L1078,120.7 L1079,120.4 L1080,120.1 L1081,119.8 L1082,119.2 L1083,118.4 L1084,117.3 L1085,116 L1086,114.7 L1087,113.1 L1088,111.4 L1089,109.4 L1090,107.1 L1091,104.5 L1092,101.7 L1093,99.4 L1094,98 L1094.2,97.4" fill="none" stroke="#9530c8" stroke-width="1.35" stroke-linejoin="round"/>
<path d="M3,568.3 L4,567.6 L5,567 L6,566.3 L7,565.7 L8,565 L9,564.4 L10,563.9 L11,563.5 L12,563 L13,562.6 L14,562.3 L15,562.1 L16,562 L17,561.8 L18,562 L19,562.4 L20,563 L21,563.6 L22,564.2 L23,564.8 L24,565.3 L25,565.7 L26,565.9 L27,566 L28,566 L29,566 L30,565.9 L31,565.8 L32,565.5 L33,565.3 L34,565.1 L35,564.8 L36,564.4 L37,563.9 L38,563.2 L39,562.6 L40,561.9 L41,561.2 L42,560.2 L43,559.3 L44,558.3 L45,557.3 L46,556.4 L47,555.4 L48,554.9 L49,554.7 L50,554.9 L51,555.4 L52,556.2 L53,557.2 L54,558.2 L55,559.1 L56,560.1 L57,561 L58,561.7 L59,562.3 L60,562.7 L61,562.8 L62,562.7 L63,562.2 L64,561.6 L65,560.7 L66,559.6 L67,558.5 L68,557.1 L69,555.5 L70,553.8 L71,551.9 L72,549.9 L73,547.7 L74,545.2 L75,542.3 L76,538.9 L77,535.4 L78,532.2 L79,529.4 L80,527.1 L81,524.8 L82,522.9 L83,521.3 L84,520 L85,518.7 L86,517.5 L87,516.6 L88,516.1 L89,515.9 L90,516.1 L91,516.5 L92,517.1 L93,517.5 L94,517.6 L95,517.5 L96,517.3 L97,516.5 L98,515.2 L99,513.4 L100,511 L101,508.2 L102,504.9 L103,501.6 L104,498.3 L105,495.1 L106,492 L107,489 L108,486 L109,483 L110,480.3 L111,478 L112,476 L113,474 L114,472 L115,470 L116,468 L117,466 L118,464 L119,462 L120,460.8 L121,460.4 L122,460.8 L123,461.2 L124,461.6 L125,462.3 L126,463.2 L127,464.4 L128,465.6 L129,466.8 L130,467.9 L131,468.8 L132,469.6 L133,470.4 L134,471.2 L135,471.8 L136,472.2 L137,472.4 L138,472.6 L139,472.8 L140,473.1 L141,473.6 L142,474.2 L143,474.8 L144,475.4 L145,475.9 L146,476.4 L147,476.8 L148,477.2 L149,477.6 L150,477.7 L151,477.6 L152,477.2 L153,476.8 L154,476.4 L155,476.5 L156,477.2 L157,478.4 L158,479.6 L159,480.8 L160,481.8 L161,482.6 L162,483.2 L163,483.8 L164,484.4 L165,485.3 L166,486.4 L167,487.8 L168,489.2 L169,490.6 L170,491.9 L171,493 L172,494 L173,495 L174,496 L175,496.7 L176,497 L177,497 L178,497 L179,497 L180,497 L181,497 L182,497 L183,497 L184,497 L185,497 L186,497 L187,497 L188,497 L189,497 L190,497.2 L191,497.6 L192,498.2 L193,498.8 L194,499.4 L195,499.9 L196,500.4 L197,500.8 L198,501.2 L199,501.6 L200,501.7 L201,501.6 L202,501.2 L203,500.8 L204,500.4 L205,499.9 L206,499.4 L207,498.8 L208,498.2 L209,497.6 L210,497.1 L211,496.6 L212,496.2 L213,495.8 L214,495.4 L215,494.9 L216,494.4 L217,493.8 L218,493.2 L219,492.6 L220,491.9 L221,491 L222,490 L223,489 L224,488 L225,487.5 L226,487.6 L227,488.2 L228,488.8 L229,489.4 L230,489.8 L231,490 L232,490 L233,490 L234,490 L235,489.9 L236,489.6 L237,489.2 L238,488.8 L239,488.4 L240,487.9 L241,487.4 L242,486.8 L243,486.2 L244,485.6 L245,485.2 L246,485 L247,485 L248,485 L249,485 L250,485 L251,485 L252,485 L253,485 L254,485 L255,485 L256,485 L257,485 L258,485 L259,485 L260,485.1 L261,485.4 L262,485.8 L263,486.2 L264,486.6 L265,487.8 L266,489.7 L267,492.3 L268,494.5 L269,496.2 L270,497.5 L271,498.8 L272,499.5 L273,499.7 L274,499.3 L275,498.3 L276,496.6 L277,494.2 L278,491.8 L279,489.4 L280,487.7 L281,486.6 L282,486.2 L283,485.8 L284,485.4 L285,484.8 L286,484 L287,483 L288,482 L289,481 L290,479.1 L291,476.2 L292,472.5 L293,468.8 L294,464 L295,458.3 L296,451.7 L297,446.7 L298,443.3 L299,441.7 L300,440.5 L301,439.8 L302,439.6 L303,439.4 L304,439.2 L305,438.8 L306,438.2 L307,437.4 L308,436.6 L309,435.8 L310,434.8 L311,433.5 L312,432 L313,430.5 L314,429 L315,427.5 L316,426 L317,424.5 L318,423 L319,421.5 L320,420 L321,418.5 L322,417 L323,415.5 L324,414 L325,412.5 L326,412.2 L327,413 L328,415.2 L329,417.5 L330,420 L331,422.1 L332,423.8 L333,425 L334,426.2 L335,427.2 L336,427.9 L337,428.2 L338,428.6 L339,428.8 L340,428.6 L341,428.2 L342,427.9 L343,427.1 L344,425.8 L345,424.2 L346,422 L347,419.4 L348,416.2 L349,413.1 L350,410 L351,406.9 L352,403.8 L353,400.6 L354,397.2 L355,393.3 L356,389.2 L357,385 L358,380.8 L359,376.7 L360,372.2 L361,367.5 L362,362.5 L363,358.6 L364,355.8 L365,354.2 L366,353.1 L367,352.5 L368,352.5 L369,352.5 L370,352.8 L371,353.4 L372,354.2 L373,355.1 L374,356 L375,356.9 L376,357.8 L377,358.6 L378,359.2 L379,359.5 L380,359.5 L381,359.5 L382,359.3 L383,359 L384,358.5 L385,358 L386,357.4 L387,356.6 L388,355.8 L389,354.9 L390,354 L391,353.2 L392,352.5 L393,351.8 L394,351.4 L395,351.5 L396,352 L397,352.8 L398,353.8 L399,355 L400,356.2 L401,357.6 L402,359.1 L403,360.8 L404,362.4 L405,363.9 L406,365.2 L407,366.5 L408,367.8 L409,368.9 L410,369.9 L411,370.8 L412,371.6 L413,372.3 L414,372.9 L415,373.2 L416,373.6 L417,373.6 L418,373.2 L419,372.5 L420,371.8 L421,371.1 L422,370.6 L423,370.2 L424,369.9 L425,369.5 L426,369.2 L427,368.9 L428,368.6 L429,368.3 L430,368.2 L431,368.2 L432,368.4 L433,368.6 L434,368.8 L435,369.1 L436,369.4 L437,369.8 L438,370.2 L439,370.6 L440,371 L441,371.4 L442,371.8 L443,372.1 L444,372.8 L445,373.7 L446,374.8 L447,375.9 L448,377 L449,378 L450,379 L451,379.9 L452,380.6 L453,381.2 L454,381.9 L455,382.5 L456,383.1 L457,383.8 L458,384.4 L459,385 L460,385.6 L461,386.2 L462,386.9 L463,387.3 L464,387.5 L465,387.5 L466,387.3 L467,387 L468,386.5 L469,386 L470,385.5 L471,384.9 L472,384.2 L473,383.6 L474,383.1 L475,382.8 L476,382.5 L477,382.2 L478,382 L479,381.8 L480,381.5 L481,381.2 L482,380.8 L483,380.2 L484,379.5 L485,378.8 L486,378.1 L487,377.5 L488,377 L489,376.5 L490,376 L491,375.6 L492,375.2 L493,374.8 L494,374.4 L495,373.9 L496,373.4 L497,372.8 L498,372.2 L499,371.6 L500,371.1 L501,370.7 L502,370.4 L503,370.1 L504,369.8 L505,369.5 L506,369.2 L507,368.9 L508,368.6 L509,368.3 L510,368 L511,367.6 L512,367.2 L513,366.8 L514,366.4 L515,366.1 L516,366 L517,366 L518,366.6 L519,367.7 L520,369.3 L521,371.1 L522,373 L523,375 L524,377 L525,378.8 L526,380.5 L527,382 L528,383.5 L529,385 L530,386.5 L531,388 L532,389.5 L533,391.1 L534,392.7 L535,394.3 L536,395.7 L537,396.7 L538,397.5 L539,398.2 L540,398.8 L541,399.3 L542,399.8 L543,400.3 L544,400.8 L545,401.3 L546,402 L547,403.3 L548,405 L549,407 L550,409 L551,410.8 L552,412.2 L553,413.3 L554,414.4 L555,415.5 L556,416.3 L557,416.8 L558,417 L559,416.9 L560,416.1 L561,414.8 L562,413.1 L563,410.8 L564,408 L565,404.7 L566,400.9 L567,396.2 L568,390.8 L569,385.7 L570,381.1 L571,377 L572,372.6 L573,367.5 L574,361.9 L575,356.2 L576,350.7 L577,346.7 L578,344 L579,342.5 L580,341.1 L581,339.6 L582,338.1 L583,336.6 L584,335.1 L585,333.6 L586,332.1 L587,330.6 L588,329.1 L589,327.7 L590,326.2 L591,324.7 L592,323.2 L593,321.7 L594,320.1 L595,318.6 L596,316.9 L597,315 L598,313.1 L599,311.1 L600,309.1 L601,306.8 L602,304.3 L603,301.6 L604,298.3 L605,294.2 L606,289.5 L607,284.9 L608,280.4 L609,276.8 L610,274 L611,271.9 L612,270.2 L613,268.9 L614,268.1 L615,267.6 L616,267.1 L617,266.6 L618,266.2 L619,265.9 L620,265.5 L621,265.2 L622,264.9 L623,264.6 L624,264.7 L625,265.4 L626,266.7 L627,267.9 L628,268.8 L629,269.3 L630,269.5 L631,269.3 L632,269.2 L633,269 L634,268.6 L635,268 L636,267.3 L637,266.4 L638,265.1 L639,263.5 L640,261.8 L641,260.4 L642,259.1 L643,257.9 L644,257.2 L645,257.2 L646,257.9 L647,258.8 L648,260 L649,261.4 L650,263 L651,264.6 L652,266.1 L653,267.4 L654,268.8 L655,269.9 L656,270.8 L657,271.1 L658,270 L659,267.1 L660,262.5 L661,257.1 L662,251.4 L663,246.1 L664,240.7 L665,235.1 L666,229.1 L667,223.3 L668,218.2 L669,213.6 L670,209.3 L671,205.4 L672,201.9 L673,198.8 L674,195.6 L675,192.3 L676,188.8 L677,185 L678,181.2 L679,177.9 L680,175.1 L681,172.6 L682,170.5 L683,169 L684,168.1 L685,167.5 L686,166.9 L687,166.4 L688,166 L689,165.8 L690,165.8 L691,165.7 L692,165.5 L693,165.4 L694,165.2 L695,165 L696,164.8 L697,164.6 L698,164.4 L699,164.3 L700,164.1 L701,164.8 L702,166.1 L703,168.2 L704,170.4 L705,172.6 L706,175 L707,177.5 L708,180 L709,182.6 L710,185.4 L711,188.2 L712,191.1 L713,193.9 L714,196.8 L715,199.6 L716,202.2 L717,204.4 L718,206.2 L719,208.1 L720,209.6 L721,210.6 L722,211.2 L723,211.9 L724,212.3 L725,212.6 L726,212.8 L727,212.8 L728,212.6 L729,212.1 L730,211.6 L731,210.8 L732,209.8 L733,208.5 L734,207.2 L735,206.2 L736,205.5 L737,205 L738,204.5 L739,204.5 L740,205 L741,206 L742,207 L743,207.8 L744,208.6 L745,209.3 L746,209.6 L747,209.4 L748,208.8 L749,208.1 L750,207.3 L751,206.2 L752,205 L753,203.8 L754,202.6 L755,201.5 L756,200.5 L757,199.6 L758,198.9 L759,198.4 L760,197.9 L761,198.8 L762,200.8 L763,204.2 L764,207.8 L765,211.8 L766,216.1 L767,219.8 L768,222.5 L769,224 L770,225 L771,226 L772,227.1 L773,228.6 L774,230.3 L775,232.1 L776,233.7 L777,234.9 L778,235.8 L779,236.6 L780,237.1 L781,237.2 L782,236.9 L783,236.6 L784,236.3 L785,235.8 L786,235.1 L787,234.2 L788,233.4 L789,232.3 L790,231.1 L791,229.6 L792,228.3 L793,227.3 L794,226.4 L795,225.7 L796,225.2 L797,225 L798,225 L799,225 L800,224.9 L801,224.8 L802,224.5 L803,224.2 L804,224.4 L805,225 L806,226 L807,227.1 L808,228.3 L809,229.6 L810,231.1 L811,232.3 L812,233.4 L813,234.2 L814,235.1 L815,236 L816,237 L817,238 L818,239 L819,240 L820,241.1 L821,242.3 L822,243.4 L823,244.5 L824,245.5 L825,246.5 L826,247.3 L827,248 L828,248.5 L829,249 L830,249.5 L831,249.9 L832,250.2 L833,250.6 L834,251 L835,251.4 L836,251.9 L837,252.2 L838,252.6 L839,252.8 L840,253 L841,253.2 L842,253.5 L843,253.8 L844,254.2 L845,255 L846,256 L847,256.7 L848,257 L849,256.6 L850,256.1 L851,255.6 L852,255.1 L853,254.8 L854,254.4 L855,254.4 L856,254.8 L857,255.5 L858,256.2 L859,257 L860,257.9 L861,258.7 L862,259.3 L863,259.4 L864,258.9 L865,258.2 L866,257.4 L867,256.5 L868,255.6 L869,254.6 L870,253.5 L871,252.5 L872,251.5 L873,250.2 L874,248.6 L875,246.8 L876,243.6 L877,237.6 L878,229.6 L879,220.8 L880,212 L881,202.6 L882,194.4 L883,187.8 L884,183.2 L885,179.7 L886,177.2 L887,176.2 L888,176.1 L889,176.9 L890,177.6 L891,178.4 L892,179.1 L893,179.8 L894,180.7 L895,181.7 L896,183 L897,186.1 L898,191.2 L899,199.1 L900,208.4 L901,218.7 L902,228.5 L903,237.2 L904,243.4 L905,247.5 L906,250.3 L907,252.4 L908,254 L909,255 L910,256 L911,256.8 L912,257.5 L913,258 L914,258.5 L915,259 L916,259.2 L917,259 L918,258.5 L919,258 L920,257.5 L921,256.9 L922,256.2 L923,255.4 L924,254.6 L925,253.8 L926,253 L927,252.3 L928,251.6 L929,251 L930,250.3 L931,249.6 L932,248.8 L933,248 L934,247.1 L935,246.3 L936,244.9 L937,242.8 L938,240.5 L939,238.9 L940,238.7 L941,239.5 L942,241.1 L943,242.6 L944,244.1 L945,245.7 L946,247.2 L947,248.7 L948,250 L949,251.2 L950,252 L951,252.8 L952,253.5 L953,254 L954,254.1 L955,253.9 L956,253.7 L957,253.6 L958,253.4 L959,253.2 L960,253 L961,252.7 L962,252.4 L963,252.1 L964,251.8 L965,251.5 L966,251.2 L967,251.2 L968,251.7 L969,252.6 L970,253.5 L971,254.5 L972,256.5 L973,259.5 L974,263.6 L975,267.5 L976,271.2 L977,274.7 L978,278 L979,280.3 L980,281.4 L981,281.1 L982,280.2 L983,278.8 L984,277.1 L985,275 L986,272.4 L987,269.3 L988,266 L989,262.4 L990,258.4 L991,254.3 L992,250.1 L993,246.1 L994,242.2 L995,238.4 L996,234.5 L997,230.2 L998,225.5 L999,220.5 L1000,215.7 L1001,211 L1002,205.3 L1003,197.5 L1004,187.4 L1005,176.7 L1006,166.4 L1007,158 L1008,151.7 L1009,147.5 L1010,144.7 L1011,142.9 L1012,141.5 L1013,140.2 L1014,139 L1015,137.7 L1016,136.4 L1017,135 L1018,133.7 L1019,132.3 L1020,131.1 L1021,129.8 L1022,128.7 L1023,127.8 L1024,127.1 L1025,127.6 L1026,129.5 L1027,133 L1028,137.3 L1029,141.8 L1030,145.9 L1031,149.3 L1032,152.3 L1033,155.1 L1034,158 L1035,161.2 L1036,164.3 L1037,167.2 L1038,169.8 L1039,172.1 L1040,174 L1041,175.2 L1042,175.9 L1043,176 L1044,176.3 L1045,176.7 L1046,177.4 L1047,178.3 L1048,179.2 L1049,179.8 L1050,179.9 L1051,179.2 L1052,177.9 L1053,176.2 L1054,174.3 L1055,172.6 L1056,171.4 L1057,170.5 L1058,169.8 L1059,169.1 L1060,168.5 L1061,167.9 L1062,167.3 L1063,166.8 L1064,166.5 L1065,166.2 L1066,165.8 L1067,165.1 L1068,164.1 L1069,163.2 L1070,162.3 L1071,161.4 L1072,160.5 L1073,159.8 L1074,159.4 L1075,159.2 L1076,159.3 L1077,159.5 L1078,160 L1079,160.5 L1080,160.9 L1081,161.4 L1082,161.9 L1083,162.6 L1084,163.2 L1085,163.7 L1086,164.1 L1087,164.5 L1088,164.8 L1089,165.2 L1090,165.6 L1091,166.1 L1092,166.8 L1093,167.7 L1094,168.5 L1094.2,169" fill="none" stroke="#9530c8" stroke-width="1.35" stroke-linejoin="round"/>
<path d="M1093.4,97.4 V169" fill="none" stroke="#b66fdd" stroke-width="0.6"/>
<path d="M3.0,554.2V558.4M4.8,552.6V558.6M6.5,553.6V558.3M8.3,554.6V559.5M10.1,553.9V560.9M11.8,556.0V561.4M13.6,557.6V566.3M15.4,554.3V562.8M17.2,548.9V556.0M18.9,543.0V554.7M20.7,539.3V545.8M22.5,537.2V545.0M24.2,530.0V542.5M26.0,529.1V538.0M27.8,536.5V538.7M29.6,536.5V544.3M31.3,535.4V542.3M33.1,536.6V540.4M34.9,538.0V543.3M36.6,540.4V547.4M38.4,540.1V548.6M40.2,544.0V548.4M41.9,543.4V546.9M43.7,539.0V547.0M45.5,537.4V542.6M47.2,530.9V539.4M49.0,520.1V531.5M50.8,514.5V522.9M52.6,511.5V522.5M54.3,508.1V513.9M56.1,499.1V513.9M57.9,491.8V505.9M59.6,492.1V499.2M61.4,497.2V504.1M63.2,497.8V505.3M65.0,500.0V510.0M66.7,500.1V504.0M68.5,496.3V505.4M70.3,494.6V500.0M72.0,494.3V499.5M73.8,478.9V499.7M75.6,473.2V482.0M77.3,474.5V478.1M79.1,471.8V479.5M80.9,471.4V479.9M82.7,474.5V477.5M84.4,466.2V479.5M86.2,464.7V468.2M88.0,461.5V468.4M89.7,454.8V464.4M91.5,445.7V459.2M93.3,441.4V451.3M95.0,437.8V442.0M96.8,435.7V450.0M98.6,438.0V445.0M100.3,434.9V441.0M102.1,432.7V440.6M103.9,424.5V437.1M105.7,423.5V430.9M107.4,423.6V432.1M109.2,430.9V444.5M111.0,440.6V447.5M112.7,432.7V448.5M114.5,431.7V441.3M116.3,432.5V438.8M118.0,433.0V443.9M119.8,439.8V451.7M121.6,442.0V448.0M123.4,440.6V454.0M125.1,450.7V460.9M126.9,457.8V468.9M128.7,460.5V470.3M130.4,453.8V463.5M132.2,451.0V457.7M134.0,450.0V461.8M135.8,453.7V463.8M137.5,453.1V461.5M139.3,457.3V467.9M141.1,462.6V472.1M142.8,468.5V472.1M144.6,468.5V473.2M146.4,465.8V472.2M148.1,467.7V474.5M149.9,467.7V475.0M151.7,466.1V472.4M153.4,466.4V470.8M155.2,464.7V473.7M157.0,465.6V479.1M158.8,472.4V479.4M160.5,473.4V481.0M162.3,468.8V478.5M164.1,470.3V480.2M165.8,474.9V486.6M167.6,479.1V483.6M169.4,480.4V491.9M171.2,489.3V496.9M172.9,493.3V497.5M174.7,493.0V500.7M176.5,484.6V502.9M178.2,480.6V494.4M180.0,473.6V485.3M181.8,473.7V481.9M183.5,475.6V480.7M185.3,477.8V488.0M187.1,479.2V485.1M188.8,476.6V484.0M190.6,479.2V488.9M192.4,476.5V486.7M194.2,469.5V481.9M195.9,469.8V479.0M197.7,466.9V474.9M199.5,459.7V472.4M201.2,454.0V465.0M203.0,453.5V458.8M204.8,447.9V458.1M206.6,446.7V453.5M208.3,449.3V455.9M210.1,445.6V458.1M211.9,444.6V460.0M213.6,453.7V458.1M215.4,450.8V458.6M217.2,457.4V466.5M218.9,463.8V473.5M220.7,468.8V479.6M222.5,474.2V482.1M224.2,472.0V476.7M226.0,474.8V480.4M227.8,473.9V481.0M229.6,477.5V483.4M231.3,475.2V485.3M233.1,478.3V483.0M234.9,473.3V480.1M236.6,471.5V479.3M238.4,472.5V477.1M240.2,475.6V480.5M241.9,467.3V478.1M243.7,464.5V472.2M245.5,464.9V470.4M247.3,463.3V467.9M249.0,461.0V466.0M250.8,455.1V465.4M252.6,454.8V461.1M254.3,456.5V461.4M256.1,451.7V464.5M257.9,455.3V469.6M259.6,464.8V478.4M261.4,470.5V477.5M263.2,472.6V480.0M265.0,454.4V474.9M266.7,441.5V459.5M268.5,417.6V443.8M270.3,406.4V423.0M272.0,403.3V420.9M273.8,413.9V426.0M275.6,417.4V430.5M277.4,421.5V433.9M279.1,425.6V433.8M280.9,422.1V430.5M282.7,415.0V428.6M284.4,415.0V429.5M286.2,426.2V431.6M288.0,421.2V433.0M289.7,422.1V429.6M291.5,415.9V430.9M293.3,409.4V421.9M295.1,405.4V413.8M296.8,395.7V411.3M298.6,394.4V407.6M300.4,398.3V406.0M302.1,397.6V407.0M303.9,399.8V409.2M305.7,393.3V408.3M307.4,392.0V407.7M309.2,396.3V407.5M311.0,394.6V404.1M312.8,395.6V408.8M314.5,393.8V400.9M316.3,395.7V400.4M318.1,388.4V404.9M319.8,388.1V398.0M321.6,386.3V396.4M323.4,389.2V396.2M325.1,392.6V399.8M326.9,385.2V401.1M328.7,373.2V392.1M330.4,354.4V374.7M332.2,358.2V367.8M334.0,342.7V365.3M335.8,341.7V350.2M337.5,338.3V350.3M339.3,338.5V346.2M341.1,341.2V351.2M342.8,337.0V350.5M344.6,341.5V347.1M346.4,328.3V342.9M348.1,328.5V337.6M349.9,327.7V332.8M351.7,324.2V333.7M353.5,322.8V333.7M355.2,329.8V338.6M357.0,336.2V351.6M358.8,342.4V350.6M360.5,337.5V347.1M362.3,334.7V346.4M364.1,335.0V346.6M365.9,328.6V337.8M367.6,327.2V332.8M369.4,327.0V333.4M371.2,316.8V332.9M372.9,309.2V320.5M374.7,294.5V309.4M376.5,298.2V304.8M378.2,300.5V312.1M380.0,301.6V319.2M381.8,309.8V323.0M383.6,310.1V319.7M385.3,314.4V325.2M387.1,316.3V322.8M388.9,315.3V321.7M390.6,316.8V331.1M392.4,324.3V347.1M394.2,336.6V345.1M395.9,342.4V350.1M397.7,335.4V347.1M399.5,336.7V344.5M401.2,336.3V351.0M403.0,345.4V351.4M404.8,344.3V352.4M406.6,348.4V359.0M408.3,355.4V359.7M410.1,350.8V358.6M411.9,350.7V360.5M413.6,356.1V367.7M415.4,355.6V363.7M417.2,358.1V363.6M418.9,349.2V361.7M420.7,349.1V359.4M422.5,352.0V361.0M424.3,349.2V362.1M426.0,347.7V356.3M427.8,348.2V359.8M429.6,348.0V353.0M431.3,344.2V353.9M433.1,340.0V351.0M434.9,334.5V346.1M436.6,329.7V336.7M438.4,318.0V335.7M440.2,320.9V332.4M442.0,330.2V347.4M443.7,339.6V354.4M445.5,346.5V356.0M447.3,345.6V365.9M449.0,359.4V372.7M450.8,366.8V376.1M452.6,368.1V377.6M454.4,366.5V375.0M456.1,367.3V377.2M457.9,366.5V378.5M459.7,361.4V369.9M461.4,363.9V376.2M463.2,362.1V371.9M465.0,357.3V368.5M466.7,353.8V362.7M468.5,352.6V360.2M470.3,344.7V360.0M472.1,342.9V347.9M473.8,344.0V351.6M475.6,346.8V358.0M477.4,353.0V360.2M479.1,354.6V369.1M480.9,366.4V370.6M482.7,362.7V371.9M484.4,352.0V364.7M486.2,352.3V357.1M488.0,352.0V356.0M489.8,344.8V355.2M491.5,336.4V350.0M493.3,336.3V346.2M495.1,339.3V344.7M496.8,342.9V362.6M498.6,348.4V362.4M500.4,348.1V356.4M502.1,336.2V353.2M503.9,335.5V351.0M505.7,338.7V349.2M507.4,343.3V348.5M509.2,338.7V350.9M511.0,341.6V352.6M512.8,326.4V347.7M514.5,329.9V341.2M516.3,330.2V354.7M518.1,352.0V360.4M519.8,354.5V366.9M521.6,358.3V371.0M523.4,367.4V372.7M525.1,368.2V377.4M526.9,370.4V385.1M528.7,377.5V384.5M530.5,379.3V383.4M532.2,373.8V384.7M534.0,378.2V391.3M535.8,387.1V396.8M537.5,379.4V397.3M539.3,374.2V384.5M541.1,373.1V379.9M542.9,349.6V376.8M544.6,342.7V358.4M546.4,338.3V348.3M548.2,321.2V348.6M549.9,318.6V332.2M551.7,313.0V324.1M553.5,298.1V319.2M555.2,295.9V313.6M557.0,306.6V313.8M558.8,300.7V311.0M560.5,290.9V307.6M562.3,284.2V295.9M564.1,281.6V289.0M565.9,285.7V292.7M567.6,286.9V295.6M569.4,287.6V295.2M571.2,288.9V295.0M572.9,287.1V296.2M574.7,284.3V291.8M576.5,273.6V289.8M578.2,263.3V276.4M580.0,248.9V268.7M581.8,253.0V264.9M583.6,245.4V252.5M585.3,237.7V253.7M587.1,236.2V247.0M588.9,228.7V245.8M590.6,234.8V252.0M592.4,229.7V240.1M594.2,218.0V232.7M596.0,206.6V226.8M597.7,200.6V211.5M599.5,198.9V239.3M601.3,233.2V246.5M603.0,233.7V246.1M604.8,239.4V261.3M606.6,248.7V264.5M608.3,241.9V263.6M610.1,231.9V250.1M611.9,226.5V238.2M613.6,216.8V230.7M615.4,211.8V224.6M617.2,204.8V215.0M619.0,204.2V226.5M620.7,216.8V228.2M622.5,213.2V227.7M624.3,214.1V231.1M626.0,222.3V250.6M627.8,237.3V260.3M629.6,248.7V257.0M631.4,235.6V251.9M633.1,222.4V239.9M634.9,217.8V232.7M636.7,199.1V222.4M638.4,197.1V204.2M640.2,194.8V204.5M642.0,195.9V203.0M643.7,186.7V201.5M645.5,190.1V199.0M647.3,187.7V199.9M649.0,168.7V193.7M650.8,153.5V172.7M652.6,149.6V161.1M654.4,142.3V161.7M656.1,135.8V146.7M657.9,137.0V146.2M659.7,136.0V147.8M661.4,143.3V153.8M663.2,139.4V150.0M665.0,142.9V155.5M666.8,143.9V157.1M668.5,139.0V148.9M670.3,139.4V150.0M672.1,136.0V146.3M673.8,125.6V142.5M675.6,128.6V140.2M677.4,126.8V144.1M679.1,126.7V140.4M680.9,134.9V161.1M682.7,153.2V161.6M684.5,142.7V155.5M686.2,137.8V146.8M688.0,137.2V148.0M689.8,123.9V141.1M691.5,123.3V135.4M693.3,119.7V132.8M695.1,115.4V128.5M696.8,118.0V132.1M698.6,124.8V148.1M700.4,133.7V147.5M702.1,131.9V149.0M703.9,137.5V167.6M705.7,161.4V177.6M707.5,155.0V177.2M709.2,156.8V168.5M711.0,160.4V180.6M712.8,172.9V179.2M714.5,175.7V190.7M716.3,184.9V203.1M718.1,195.3V204.6M719.9,195.2V208.2M721.6,189.3V203.1M723.4,178.2V199.9M725.2,177.9V186.7M726.9,182.2V189.3M728.7,179.8V190.9M730.5,173.5V191.3M732.2,183.1V193.4M734.0,181.0V190.0M735.8,171.5V188.1M737.5,169.2V186.4M739.3,166.9V184.9M741.1,152.3V170.2M742.9,141.2V154.8M744.6,149.0V158.9M746.4,146.2V159.0M748.2,149.7V167.5M749.9,161.6V171.4M751.7,159.8V168.0M753.5,158.4V170.7M755.2,160.9V172.8M757.0,156.0V167.1M758.8,165.4V172.3M760.6,167.1V179.3M762.3,168.3V199.3M764.1,185.0V208.5M765.9,192.4V203.7M767.6,193.1V211.0M769.4,205.8V219.8M771.2,211.1V220.1M773.0,206.0V216.8M774.7,197.9V210.3M776.5,194.4V212.7M778.3,200.4V214.8M780.0,211.2V216.9M781.8,206.6V217.2M783.6,193.7V209.7M785.3,188.2V199.1M787.1,194.2V202.9M788.9,195.3V203.2M790.6,196.4V206.6M792.4,199.1V204.9M794.2,191.2V207.0M796.0,193.1V209.1M797.7,201.4V213.8M799.5,205.4V212.1M801.3,194.6V208.6M803.0,195.3V211.5M804.8,202.8V217.8M806.6,203.8V229.9M808.4,220.7V231.3M810.1,220.6V231.8M811.9,219.5V228.8M813.7,219.0V233.1M815.4,209.2V222.3M817.2,208.9V221.9M819.0,216.2V232.4M820.7,222.8V232.4M822.5,226.4V234.5M824.3,228.3V235.3M826.0,161.5V178.0M827.8,173.8V183.6M829.6,179.3V187.3M831.4,183.4V194.4M833.1,186.5V199.1M834.9,187.4V201.1M836.7,190.7V212.8M838.4,203.4V209.6M840.2,198.0V209.2M842.0,201.8V222.2M843.8,211.1V242.9M845.5,233.1V248.9M847.3,231.8V248.0M849.1,205.9V237.6M850.8,190.8V214.9M852.6,177.2V195.0M854.4,170.1V184.6M856.1,156.1V172.2M857.9,137.5V161.5M859.7,138.6V149.5M861.5,144.1V152.5M863.2,147.2V159.4M865.0,144.9V155.8M866.8,145.0V165.8M868.5,144.8V162.2M870.3,140.2V164.0M872.1,148.3V159.7M873.8,146.8V161.0M875.6,153.7V171.5M877.4,164.6V170.6M879.1,152.5V169.9M880.9,151.1V158.9M882.7,156.9V163.7M884.5,156.9V166.8M886.2,156.7V172.2M888.0,163.7V180.3M889.8,162.7V171.2M891.5,166.3V173.0M893.3,167.9V178.1M895.1,165.1V185.9M896.9,173.1V190.6M898.6,187.4V203.0M900.4,196.3V221.1M902.2,215.9V252.1M903.9,235.2V251.6M905.7,224.2V241.4M907.5,216.4V233.3M909.2,206.8V216.9M911.0,203.8V214.7M912.8,206.5V228.2M914.5,213.4V224.6M916.3,219.7V229.7M918.1,204.5V226.5M919.9,208.7V219.1M921.6,195.7V214.4M923.4,191.4V205.0M925.2,190.2V211.3M926.9,194.3V214.5M928.7,205.8V225.6M930.5,216.9V222.9M932.2,209.1V220.5M934.0,199.8V218.3M935.8,203.7V208.8M937.6,203.2V219.4M939.3,210.8V228.7M941.1,224.0V233.7M942.9,223.1V237.6M944.6,220.1V233.6M946.4,217.3V224.2M948.2,222.9V242.5M950.0,232.7V244.2M951.7,238.3V255.3M953.5,250.2V256.5M955.3,231.8V250.2M957.0,223.0V234.8M958.8,213.7V225.6M960.6,211.9V226.9M962.3,209.7V222.9M964.1,215.5V226.7M965.9,220.2V230.2M967.6,219.3V235.0M969.4,207.7V229.3M971.2,204.6V215.5M973.0,189.9V215.3M974.7,170.9V200.7M976.5,131.5V178.1M978.3,113.2V142.3M980.0,117.1V139.8M981.8,125.4V137.4M983.6,117.2V138.9M985.4,116.0V129.2M987.1,112.1V128.6M988.9,119.5V132.4M990.7,129.4V136.3M992.4,119.8V132.1M994.2,98.4V120.5M996.0,102.8V113.7M997.7,99.9V113.7M999.5,100.0V115.1M1001.3,98.2V109.1M1003.0,99.6V113.1M1004.8,100.3V114.6M1006.6,96.2V112.3M1008.4,79.4V100.1M1010.1,79.7V92.4M1011.9,79.9V93.0M1013.7,81.3V100.7M1015.4,93.1V105.3M1017.2,95.8V117.6M1019.0,97.0V117.4M1020.8,86.4V107.2M1022.5,83.0V103.6M1024.3,83.8V110.6M1026.1,102.7V128.2M1027.8,122.6V130.3M1029.6,123.6V141.5M1031.4,130.7V143.4M1033.1,127.5V143.6M1034.9,140.4V147.7M1036.7,142.5V157.6M1038.5,153.8V162.0M1040.2,153.9V164.1M1042.0,142.3V160.2M1043.8,127.0V148.4M1045.5,130.9V139.5M1047.3,128.5V148.5M1049.1,142.0V155.0M1050.8,135.9V154.9M1052.6,136.0V149.2M1054.4,139.9V152.5M1056.2,134.4V149.7M1057.9,127.8V142.9M1059.7,130.6V136.7M1061.5,126.7V147.0M1063.2,139.0V150.2M1065.0,137.0V146.5M1066.8,137.8V153.1M1068.5,136.2V154.0M1070.3,139.3V156.6M1072.1,116.9V157.8M1073.8,114.9V130.3M1075.6,121.4V151.4M1077.4,133.6V150.8M1079.2,122.4V151.7M1080.9,147.7V163.2M1082.7,155.2V165.6M1084.5,138.6V166.9M1086.2,118.6V140.0M1088.0,116.5V125.5M1089.8,113.9V123.6M1091.5,98.9V117.4M1093.3,96.0V104.4M902.4,200.0V295.5M952.0,215.0V268.5M535.0,380.0V409.0M450.0,360.0V385.0M438.0,316.0V335.0M1081.0,140.0V175.0M597.0,190.0V215.0M375.0,291.0V300.0M174.0,485.0V505.0M811.0,215.0V246.0M823.0,220.0V251.0M846.0,215.0V250.0M1073.0,108.0V125.0" stroke="#2c5230" stroke-width="1" fill="none"/>
<path d="M3.8,554.1h2V557.1h-2ZM5.5,555.5h2V557.2h-2ZM7.3,556.9h2V558.3h-2ZM9.1,557.4h2V558.5h-2ZM10.8,558.0h2V559.7h-2ZM12.6,559.8h2V561.8h-2ZM25.0,532.9h2V537.0h-2ZM26.8,536.9h2V538.2h-2ZM28.6,538.6h2V541.1h-2ZM32.1,537.4h2V538.6h-2ZM33.9,538.8h2V540.5h-2ZM35.6,540.9h2V542.5h-2ZM37.4,542.8h2V545.2h-2ZM39.2,544.6h2V545.8h-2ZM58.6,495.1h2V497.8h-2ZM60.4,498.0h2V500.9h-2ZM62.2,501.0h2V503.2h-2ZM71.0,495.8h2V497.2h-2ZM76.3,475.2h2V476.8h-2ZM79.9,473.4h2V476.2h-2ZM81.7,475.4h2V477.1h-2ZM85.2,466.0h2V467.8h-2ZM95.8,438.8h2V443.9h-2ZM106.4,425.0h2V430.3h-2ZM108.2,431.3h2V443.2h-2ZM115.3,433.5h2V435.8h-2ZM117.0,435.9h2V440.9h-2ZM118.8,440.2h2V446.7h-2ZM122.4,443.0h2V452.7h-2ZM124.1,452.6h2V460.5h-2ZM125.9,460.9h2V464.6h-2ZM133.0,454.6h2V460.8h-2ZM136.5,457.0h2V458.5h-2ZM138.3,458.6h2V466.1h-2ZM140.1,466.1h2V469.4h-2ZM143.6,469.4h2V471.1h-2ZM145.4,468.1h2V470.8h-2ZM147.1,470.3h2V471.8h-2ZM152.4,467.5h2V469.5h-2ZM156.0,467.2h2V477.0h-2ZM157.8,476.6h2V478.6h-2ZM163.1,471.6h2V477.3h-2ZM164.8,477.7h2V483.4h-2ZM166.6,480.1h2V482.4h-2ZM168.4,482.3h2V490.1h-2ZM170.2,489.8h2V496.0h-2ZM173.7,493.6h2V498.9h-2ZM180.8,476.9h2V479.4h-2ZM182.5,477.1h2V479.4h-2ZM184.3,478.7h2V482.6h-2ZM187.8,481.6h2V483.0h-2ZM189.6,482.7h2V485.7h-2ZM205.6,447.2h2V449.7h-2ZM207.3,450.2h2V452.8h-2ZM210.9,448.0h2V456.1h-2ZM214.4,453.8h2V457.9h-2ZM216.2,459.2h2V464.1h-2ZM217.9,465.0h2V472.8h-2ZM219.7,472.2h2V476.6h-2ZM226.8,475.6h2V479.6h-2ZM230.3,479.0h2V480.7h-2ZM235.6,473.6h2V475.6h-2ZM248.0,463.0h2V464.9h-2ZM253.3,457.8h2V459.5h-2ZM256.9,458.1h2V467.3h-2ZM258.6,466.6h2V475.5h-2ZM260.4,473.6h2V476.3h-2ZM271.0,408.8h2V418.9h-2ZM272.8,418.2h2V420.4h-2ZM274.6,421.0h2V428.3h-2ZM283.4,420.9h2V428.3h-2ZM285.2,428.1h2V431.1h-2ZM294.1,406.4h2V409.5h-2ZM297.6,398.4h2V402.1h-2ZM299.4,401.5h2V403.2h-2ZM301.1,404.2h2V406.4h-2ZM302.9,402.9h2V405.8h-2ZM306.4,394.4h2V402.9h-2ZM310.0,396.2h2V403.3h-2ZM313.5,395.7h2V398.9h-2ZM315.3,396.8h2V399.0h-2ZM320.6,389.2h2V394.2h-2ZM322.4,393.9h2V395.6h-2ZM324.1,393.9h2V396.2h-2ZM334.8,343.6h2V348.9h-2ZM338.3,342.8h2V345.6h-2ZM340.1,343.2h2V345.9h-2ZM348.9,328.8h2V331.9h-2ZM352.5,325.8h2V332.4h-2ZM354.2,331.3h2V338.1h-2ZM356.0,338.7h2V347.5h-2ZM359.5,342.6h2V345.9h-2ZM366.6,328.6h2V330.9h-2ZM375.5,299.0h2V301.8h-2ZM377.2,301.3h2V304.7h-2ZM379.0,303.8h2V318.8h-2ZM380.8,313.9h2V317.3h-2ZM382.6,313.7h2V317.2h-2ZM384.3,316.5h2V320.8h-2ZM387.9,317.3h2V319.6h-2ZM389.6,318.8h2V328.4h-2ZM391.4,327.8h2V340.5h-2ZM393.2,341.0h2V344.2h-2ZM400.2,340.2h2V347.1h-2ZM403.8,347.4h2V351.8h-2ZM405.6,351.5h2V358.4h-2ZM410.9,353.7h2V359.9h-2ZM414.4,356.3h2V362.4h-2ZM419.7,352.1h2V355.6h-2ZM425.0,352.6h2V355.6h-2ZM439.2,322.7h2V330.6h-2ZM441.0,331.1h2V344.3h-2ZM442.7,345.2h2V353.5h-2ZM446.3,350.2h2V361.6h-2ZM448.0,360.8h2V370.7h-2ZM449.8,370.4h2V375.6h-2ZM453.4,368.9h2V371.6h-2ZM455.1,371.3h2V374.4h-2ZM458.7,365.4h2V368.8h-2ZM467.5,354.6h2V357.9h-2ZM471.1,343.9h2V346.3h-2ZM472.8,346.7h2V350.4h-2ZM474.6,349.9h2V353.3h-2ZM476.4,355.2h2V357.9h-2ZM478.1,358.2h2V367.3h-2ZM487.0,352.5h2V354.6h-2ZM492.3,337.6h2V340.9h-2ZM494.1,341.2h2V343.2h-2ZM495.8,344.4h2V358.6h-2ZM502.9,339.0h2V347.0h-2ZM504.7,343.1h2V346.6h-2ZM508.2,343.4h2V350.3h-2ZM513.5,332.6h2V336.3h-2ZM515.3,336.4h2V353.8h-2ZM517.1,353.9h2V357.7h-2ZM518.8,357.8h2V365.2h-2ZM520.6,365.1h2V367.5h-2ZM522.4,368.4h2V370.9h-2ZM524.1,370.9h2V373.9h-2ZM525.9,373.6h2V379.6h-2ZM527.7,378.4h2V380.1h-2ZM529.5,380.2h2V381.9h-2ZM533.0,379.6h2V390.8h-2ZM534.8,390.2h2V392.6h-2ZM545.4,342.2h2V345.8h-2ZM554.2,299.0h2V307.1h-2ZM556.0,308.6h2V311.0h-2ZM563.1,284.0h2V286.9h-2ZM564.9,288.3h2V291.3h-2ZM566.6,290.3h2V293.0h-2ZM582.6,248.6h2V251.5h-2ZM586.1,240.9h2V244.7h-2ZM598.5,201.4h2V232.2h-2ZM600.3,233.8h2V241.5h-2ZM603.8,240.3h2V255.3h-2ZM605.6,256.3h2V263.0h-2ZM618.0,207.4h2V223.9h-2ZM619.7,219.9h2V224.5h-2ZM623.3,220.2h2V226.2h-2ZM625.0,226.8h2V246.0h-2ZM626.8,246.4h2V256.8h-2ZM637.4,198.9h2V202.0h-2ZM639.2,198.4h2V201.5h-2ZM641.0,196.5h2V200.6h-2ZM655.1,140.0h2V145.3h-2ZM656.9,140.3h2V145.4h-2ZM658.7,141.4h2V146.5h-2ZM660.4,144.7h2V151.4h-2ZM662.2,144.9h2V149.1h-2ZM665.8,147.1h2V150.4h-2ZM667.5,143.4h2V145.9h-2ZM678.1,132.4h2V135.8h-2ZM679.9,135.6h2V159.9h-2ZM690.5,128.8h2V131.5h-2ZM695.8,120.0h2V129.8h-2ZM697.6,128.3h2V143.7h-2ZM701.1,136.1h2V144.5h-2ZM702.9,144.4h2V164.7h-2ZM704.7,164.3h2V175.0h-2ZM708.2,161.0h2V164.4h-2ZM710.0,165.6h2V173.9h-2ZM711.8,173.8h2V176.8h-2ZM713.5,177.3h2V188.0h-2ZM715.3,187.7h2V199.4h-2ZM717.1,199.8h2V204.1h-2ZM724.2,180.0h2V185.9h-2ZM725.9,183.1h2V188.1h-2ZM729.5,179.3h2V187.8h-2ZM736.5,172.9h2V180.2h-2ZM743.6,150.1h2V156.5h-2ZM747.2,151.2h2V163.7h-2ZM748.9,163.4h2V168.2h-2ZM750.7,162.1h2V166.8h-2ZM754.2,162.8h2V166.3h-2ZM756.0,162.4h2V166.3h-2ZM759.6,168.8h2V171.4h-2ZM761.3,173.0h2V187.6h-2ZM763.1,186.0h2V202.8h-2ZM766.6,197.5h2V208.0h-2ZM768.4,208.7h2V217.2h-2ZM775.5,198.4h2V207.8h-2ZM777.3,207.0h2V214.1h-2ZM784.3,189.8h2V194.8h-2ZM786.1,194.9h2V197.8h-2ZM795.0,195.5h2V207.8h-2ZM802.0,198.2h2V206.1h-2ZM805.6,206.2h2V222.0h-2ZM807.4,221.7h2V229.4h-2ZM810.9,225.4h2V228.1h-2ZM816.2,211.6h2V221.1h-2ZM818.0,221.3h2V226.7h-2ZM819.7,225.2h2V231.9h-2ZM821.5,231.4h2V234.0h-2ZM825.0,164.0h2V176.0h-2ZM828.6,183.1h2V186.1h-2ZM830.4,185.2h2V191.4h-2ZM832.1,191.8h2V195.1h-2ZM833.9,195.4h2V198.0h-2ZM835.7,195.9h2V207.6h-2ZM841.0,203.4h2V218.9h-2ZM842.8,217.0h2V233.6h-2ZM844.5,233.7h2V245.0h-2ZM858.7,141.5h2V145.4h-2ZM860.5,145.4h2V151.1h-2ZM862.2,148.5h2V151.3h-2ZM864.0,148.5h2V151.4h-2ZM865.8,152.8h2V158.2h-2ZM872.8,152.0h2V155.8h-2ZM874.6,155.6h2V167.2h-2ZM879.9,151.8h2V155.9h-2ZM883.5,157.6h2V164.7h-2ZM885.2,164.3h2V168.8h-2ZM888.8,165.5h2V169.0h-2ZM890.5,167.5h2V172.1h-2ZM894.1,172.0h2V179.7h-2ZM895.9,179.6h2V189.1h-2ZM897.6,189.1h2V200.5h-2ZM899.4,200.2h2V217.6h-2ZM901.2,217.8h2V250.0h-2ZM910.0,208.2h2V211.6h-2ZM911.8,211.8h2V223.7h-2ZM915.3,221.3h2V225.9h-2ZM922.4,200.5h2V203.9h-2ZM925.9,195.7h2V211.4h-2ZM927.7,209.0h2V222.2h-2ZM931.2,212.5h2V216.4h-2ZM934.8,204.5h2V207.7h-2ZM936.6,207.2h2V214.5h-2ZM938.3,215.5h2V226.0h-2ZM940.1,225.6h2V231.9h-2ZM941.9,227.5h2V231.2h-2ZM945.4,221.1h2V223.5h-2ZM947.2,223.8h2V239.8h-2ZM949.0,236.8h2V239.4h-2ZM950.7,239.8h2V250.5h-2ZM963.1,216.5h2V224.2h-2ZM964.9,224.9h2V228.7h-2ZM979.0,119.5h2V136.5h-2ZM986.1,117.1h2V122.3h-2ZM987.9,121.5h2V129.3h-2ZM996.7,106.2h2V111.8h-2ZM1002.0,101.9h2V109.2h-2ZM1003.8,101.9h2V107.2h-2ZM1010.9,83.7h2V87.1h-2ZM1012.7,87.7h2V99.5h-2ZM1014.4,98.7h2V103.4h-2ZM1016.2,102.9h2V112.5h-2ZM1021.5,89.1h2V94.1h-2ZM1023.3,92.1h2V105.3h-2ZM1025.1,105.2h2V122.9h-2ZM1026.8,123.6h2V128.0h-2ZM1028.6,128.1h2V137.0h-2ZM1032.1,132.3h2V141.9h-2ZM1033.9,142.3h2V145.9h-2ZM1035.7,145.6h2V157.0h-2ZM1044.5,132.8h2V136.4h-2ZM1046.3,137.7h2V146.2h-2ZM1048.1,146.3h2V154.3h-2ZM1051.6,141.1h2V146.0h-2ZM1053.4,141.9h2V146.0h-2ZM1058.7,131.2h2V134.9h-2ZM1060.5,135.5h2V146.5h-2ZM1065.8,138.5h2V150.4h-2ZM1069.3,141.4h2V154.4h-2ZM1072.8,118.9h2V124.4h-2ZM1074.6,124.7h2V148.5h-2ZM1078.2,134.4h2V148.2h-2ZM1079.9,148.8h2V161.2h-2ZM1087.0,117.4h2V120.0h-2ZM1092.3,97.6h2V101.5h-2Z" fill="#cc5008" stroke="#70330c" stroke-width="0.55"/>
<path d="M2.0,554.6h2V556.2h-2ZM14.4,556.1h2V562.1h-2ZM16.2,551.3h2V555.2h-2ZM17.9,545.3h2V552.3h-2ZM19.7,541.7h2V545.0h-2ZM21.5,538.9h2V541.8h-2ZM23.2,533.2h2V539.9h-2ZM30.3,538.4h2V541.3h-2ZM40.9,544.9h2V546.1h-2ZM42.7,541.2h2V545.5h-2ZM44.5,539.4h2V541.4h-2ZM46.2,531.4h2V538.6h-2ZM48.0,520.7h2V531.0h-2ZM49.8,518.6h2V520.4h-2ZM51.6,512.9h2V518.8h-2ZM53.3,510.6h2V513.1h-2ZM55.1,501.8h2V511.7h-2ZM56.9,495.0h2V500.9h-2ZM64.0,502.5h2V504.8h-2ZM65.7,501.1h2V502.5h-2ZM67.5,498.1h2V502.0h-2ZM69.3,496.4h2V498.2h-2ZM72.8,481.4h2V497.5h-2ZM74.6,475.7h2V481.4h-2ZM78.1,473.6h2V476.7h-2ZM83.4,468.4h2V477.9h-2ZM87.0,462.9h2V466.5h-2ZM88.7,456.0h2V463.7h-2ZM90.5,446.9h2V457.0h-2ZM92.3,441.9h2V447.9h-2ZM94.0,438.7h2V441.4h-2ZM97.6,439.8h2V443.4h-2ZM99.3,436.5h2V439.2h-2ZM101.1,434.4h2V436.3h-2ZM102.9,428.7h2V434.9h-2ZM104.7,424.9h2V428.3h-2ZM110.0,441.7h2V444.0h-2ZM111.7,438.5h2V443.3h-2ZM113.5,433.1h2V438.5h-2ZM120.6,443.5h2V446.5h-2ZM127.7,461.9h2V464.2h-2ZM129.4,455.9h2V463.1h-2ZM131.2,454.6h2V456.2h-2ZM134.8,458.4h2V461.5h-2ZM141.8,469.2h2V470.9h-2ZM148.9,468.4h2V472.0h-2ZM150.7,468.8h2V470.3h-2ZM154.2,466.3h2V471.3h-2ZM159.5,476.8h2V478.9h-2ZM161.3,471.4h2V477.2h-2ZM171.9,494.6h2V496.7h-2ZM175.5,488.6h2V498.9h-2ZM177.2,481.4h2V489.3h-2ZM179.0,477.7h2V481.8h-2ZM186.1,480.7h2V483.0h-2ZM191.4,479.8h2V485.3h-2ZM193.2,474.0h2V480.3h-2ZM194.9,473.4h2V475.7h-2ZM196.7,469.5h2V473.8h-2ZM198.5,460.5h2V470.4h-2ZM200.2,454.8h2V460.6h-2ZM202.0,454.3h2V456.4h-2ZM203.8,451.1h2V454.5h-2ZM209.1,446.9h2V453.5h-2ZM212.6,454.2h2V457.1h-2ZM221.5,475.2h2V477.7h-2ZM223.2,474.4h2V476.1h-2ZM225.0,475.9h2V477.9h-2ZM228.6,480.9h2V482.4h-2ZM232.1,478.8h2V480.5h-2ZM233.9,475.2h2V478.4h-2ZM237.4,474.1h2V476.6h-2ZM239.2,476.0h2V478.5h-2ZM240.9,470.7h2V475.8h-2ZM242.7,467.4h2V471.0h-2ZM244.5,465.7h2V467.2h-2ZM246.3,464.7h2V466.3h-2ZM249.8,459.7h2V464.6h-2ZM251.6,457.7h2V459.5h-2ZM255.1,457.7h2V460.1h-2ZM262.2,473.9h2V476.0h-2ZM264.0,457.7h2V474.3h-2ZM265.7,442.4h2V458.1h-2ZM267.5,421.7h2V443.2h-2ZM269.3,408.3h2V421.8h-2ZM276.4,429.4h2V431.3h-2ZM278.1,426.0h2V429.5h-2ZM279.9,425.7h2V428.4h-2ZM281.7,421.3h2V424.8h-2ZM287.0,424.3h2V432.2h-2ZM288.7,425.1h2V427.0h-2ZM290.5,419.7h2V424.2h-2ZM292.3,411.5h2V418.8h-2ZM295.8,398.2h2V410.0h-2ZM304.7,394.7h2V405.8h-2ZM308.2,397.3h2V403.1h-2ZM311.8,397.3h2V403.4h-2ZM317.1,392.5h2V399.4h-2ZM318.8,389.8h2V393.6h-2ZM325.9,390.9h2V396.5h-2ZM327.7,373.7h2V391.6h-2ZM329.4,359.5h2V374.1h-2ZM331.2,360.4h2V362.4h-2ZM333.0,343.9h2V361.4h-2ZM336.5,345.1h2V349.7h-2ZM341.8,342.8h2V346.9h-2ZM343.6,342.2h2V344.9h-2ZM345.4,332.9h2V342.0h-2ZM347.1,329.4h2V333.3h-2ZM350.7,326.4h2V331.1h-2ZM357.8,346.1h2V348.5h-2ZM361.3,336.8h2V345.4h-2ZM363.1,335.8h2V338.7h-2ZM364.9,329.1h2V336.3h-2ZM368.4,329.8h2V332.1h-2ZM370.2,318.1h2V329.5h-2ZM371.9,310.2h2V318.9h-2ZM373.7,299.5h2V309.0h-2ZM386.1,318.6h2V321.5h-2ZM394.9,344.5h2V348.3h-2ZM396.7,340.4h2V344.8h-2ZM398.5,340.4h2V342.4h-2ZM402.0,347.7h2V350.4h-2ZM407.3,356.6h2V358.9h-2ZM409.1,353.9h2V356.7h-2ZM412.6,356.9h2V360.4h-2ZM416.2,358.9h2V361.7h-2ZM417.9,354.9h2V359.1h-2ZM421.5,356.9h2V359.6h-2ZM423.3,353.5h2V357.8h-2ZM426.8,348.7h2V356.3h-2ZM428.6,348.6h2V351.2h-2ZM430.3,347.5h2V350.2h-2ZM432.1,345.6h2V347.5h-2ZM433.9,335.3h2V344.1h-2ZM435.6,333.9h2V335.8h-2ZM437.4,322.7h2V333.9h-2ZM444.5,350.0h2V353.1h-2ZM451.6,371.2h2V374.8h-2ZM456.9,368.6h2V374.4h-2ZM460.4,369.0h2V371.6h-2ZM462.2,363.7h2V369.0h-2ZM464.0,358.2h2V363.6h-2ZM465.7,357.0h2V360.5h-2ZM469.3,346.9h2V357.4h-2ZM479.9,368.0h2V369.9h-2ZM481.7,363.2h2V368.7h-2ZM483.4,355.0h2V362.9h-2ZM485.2,353.2h2V355.2h-2ZM488.8,345.2h2V353.6h-2ZM490.5,338.9h2V345.5h-2ZM497.6,352.5h2V358.0h-2ZM499.4,352.1h2V355.7h-2ZM501.1,340.5h2V352.3h-2ZM506.4,344.3h2V346.3h-2ZM510.0,346.2h2V351.1h-2ZM511.8,333.1h2V346.1h-2ZM531.2,378.4h2V381.5h-2ZM536.5,382.8h2V393.0h-2ZM538.3,377.6h2V382.1h-2ZM540.1,375.6h2V378.9h-2ZM541.9,352.6h2V375.6h-2ZM543.6,346.2h2V353.6h-2ZM547.2,327.4h2V345.4h-2ZM548.9,322.4h2V326.5h-2ZM550.7,314.3h2V321.3h-2ZM552.5,298.5h2V314.9h-2ZM557.8,303.4h2V309.5h-2ZM559.5,296.1h2V304.3h-2ZM561.3,285.4h2V294.3h-2ZM568.4,291.2h2V294.6h-2ZM570.2,290.3h2V294.1h-2ZM571.9,291.2h2V295.3h-2ZM573.7,285.8h2V290.7h-2ZM575.5,274.9h2V286.3h-2ZM577.2,265.1h2V274.1h-2ZM579.0,260.7h2V265.0h-2ZM580.8,254.5h2V260.4h-2ZM584.3,239.1h2V251.2h-2ZM587.9,237.1h2V245.1h-2ZM589.6,239.0h2V243.2h-2ZM591.4,231.1h2V239.0h-2ZM593.2,219.4h2V231.7h-2ZM595.0,209.7h2V217.6h-2ZM596.7,202.2h2V210.3h-2ZM602.0,241.1h2V243.7h-2ZM607.3,243.1h2V262.9h-2ZM609.1,233.7h2V243.7h-2ZM610.9,227.2h2V233.6h-2ZM612.6,219.2h2V227.9h-2ZM614.4,212.3h2V219.2h-2ZM616.2,207.2h2V211.0h-2ZM621.5,219.2h2V223.9h-2ZM628.6,250.5h2V256.4h-2ZM630.4,236.6h2V251.3h-2ZM632.1,225.0h2V237.0h-2ZM633.9,220.6h2V224.9h-2ZM635.7,201.5h2V221.2h-2ZM642.7,193.9h2V198.4h-2ZM644.5,194.9h2V198.4h-2ZM646.3,188.3h2V195.6h-2ZM648.0,170.3h2V187.8h-2ZM649.8,157.5h2V167.7h-2ZM651.6,151.8h2V156.3h-2ZM653.4,145.1h2V151.7h-2ZM664.0,147.6h2V152.6h-2ZM669.3,142.2h2V146.5h-2ZM671.1,138.0h2V144.1h-2ZM672.8,130.2h2V137.0h-2ZM674.6,132.6h2V138.1h-2ZM676.4,135.0h2V139.9h-2ZM681.7,153.6h2V159.4h-2ZM683.5,144.9h2V153.1h-2ZM685.2,139.0h2V146.1h-2ZM687.0,140.6h2V143.2h-2ZM688.8,130.8h2V139.8h-2ZM692.3,123.6h2V132.4h-2ZM694.1,118.8h2V124.4h-2ZM699.4,137.9h2V145.5h-2ZM706.5,162.6h2V176.0h-2ZM718.9,198.7h2V206.7h-2ZM720.6,193.3h2V198.7h-2ZM722.4,181.3h2V194.5h-2ZM727.7,181.4h2V188.9h-2ZM731.2,187.3h2V191.3h-2ZM733.0,182.0h2V185.2h-2ZM734.8,172.9h2V181.3h-2ZM738.3,168.1h2V180.7h-2ZM740.1,153.9h2V167.1h-2ZM741.9,149.1h2V153.3h-2ZM745.4,150.7h2V157.8h-2ZM752.5,161.8h2V167.1h-2ZM757.8,167.4h2V170.3h-2ZM764.9,197.3h2V201.7h-2ZM770.2,213.3h2V217.2h-2ZM772.0,207.7h2V212.9h-2ZM773.7,199.2h2V206.4h-2ZM779.0,211.8h2V215.1h-2ZM780.8,208.3h2V213.0h-2ZM782.6,196.0h2V207.8h-2ZM787.9,198.9h2V202.1h-2ZM789.6,199.6h2V202.9h-2ZM791.4,200.9h2V204.4h-2ZM793.2,195.5h2V201.0h-2ZM796.7,205.5h2V208.1h-2ZM798.5,205.9h2V210.0h-2ZM800.3,197.8h2V205.3h-2ZM803.8,206.5h2V210.5h-2ZM809.1,225.7h2V229.2h-2ZM812.7,220.5h2V228.2h-2ZM814.4,211.5h2V221.4h-2ZM823.3,230.5h2V233.6h-2ZM826.8,183.0h2V183.0h-2ZM837.4,203.8h2V208.1h-2ZM839.2,201.6h2V205.6h-2ZM846.3,234.7h2V244.9h-2ZM848.1,212.9h2V236.5h-2ZM849.8,193.5h2V212.9h-2ZM851.6,180.8h2V194.0h-2ZM853.4,171.2h2V180.3h-2ZM855.1,157.8h2V171.0h-2ZM856.9,143.3h2V159.2h-2ZM867.5,154.9h2V158.9h-2ZM869.3,154.0h2V158.5h-2ZM871.1,151.3h2V155.3h-2ZM876.4,165.4h2V167.9h-2ZM878.1,153.5h2V167.1h-2ZM881.7,158.3h2V163.1h-2ZM887.0,170.0h2V174.6h-2ZM892.3,172.5h2V175.9h-2ZM902.9,239.6h2V250.6h-2ZM904.7,229.7h2V238.8h-2ZM906.5,216.9h2V229.6h-2ZM908.2,207.4h2V215.4h-2ZM913.5,221.7h2V224.2h-2ZM917.1,211.9h2V225.8h-2ZM918.9,211.5h2V215.0h-2ZM920.6,202.8h2V210.8h-2ZM924.2,195.3h2V205.1h-2ZM929.5,217.3h2V221.2h-2ZM933.0,204.5h2V217.6h-2ZM943.6,221.3h2V231.6h-2ZM952.5,251.7h2V254.1h-2ZM954.3,233.8h2V249.2h-2ZM956.0,223.7h2V232.7h-2ZM957.8,222.4h2V224.8h-2ZM959.6,216.4h2V221.6h-2ZM961.3,215.6h2V219.6h-2ZM966.6,223.1h2V229.9h-2ZM968.4,210.1h2V224.0h-2ZM970.2,208.7h2V211.9h-2ZM972.0,195.2h2V209.6h-2ZM973.7,172.4h2V195.2h-2ZM975.5,134.7h2V171.8h-2ZM977.3,119.4h2V136.9h-2ZM980.8,126.6h2V136.1h-2ZM982.6,127.2h2V131.7h-2ZM984.4,120.4h2V127.9h-2ZM989.7,130.4h2V135.6h-2ZM991.4,121.0h2V131.0h-2ZM993.2,106.7h2V119.9h-2ZM995.0,108.2h2V111.1h-2ZM998.5,101.9h2V112.0h-2ZM1000.3,102.3h2V106.7h-2ZM1005.6,98.9h2V107.0h-2ZM1007.4,83.8h2V98.2h-2ZM1009.1,85.0h2V88.1h-2ZM1018.0,101.3h2V111.7h-2ZM1019.8,89.1h2V101.5h-2ZM1030.4,131.9h2V136.7h-2ZM1037.5,158.5h2V161.5h-2ZM1039.2,154.8h2V157.6h-2ZM1041.0,144.6h2V155.0h-2ZM1042.8,133.7h2V145.8h-2ZM1049.8,140.7h2V154.1h-2ZM1055.2,136.3h2V145.6h-2ZM1056.9,131.0h2V135.4h-2ZM1062.2,140.5h2V146.6h-2ZM1064.0,139.1h2V142.3h-2ZM1067.5,140.6h2V149.5h-2ZM1071.1,118.4h2V156.7h-2ZM1076.4,134.3h2V150.0h-2ZM1081.7,156.3h2V160.5h-2ZM1083.5,140.1h2V156.2h-2ZM1085.2,119.2h2V139.6h-2ZM1088.8,115.1h2V118.6h-2ZM1090.5,99.8h2V114.5h-2Z" fill="#14a014" stroke="#0a4c0a" stroke-width="0.55"/>
<path d="M3,536 L5.5,536.5 L8,537.1 L10.5,537.5 L13,538 L15.5,538.3 L18,538.7 L20.5,539 L23,539.1 L25.5,539.3 L28,539.4 L30.5,539.5 L33,539.6 L35.5,539.8 L38,539.9 L40.5,540 L43,540 L45.5,540 L48,540 L50.5,539.9 L53,539.9 L55.5,539.7 L58,539.6 L60.5,539.5 L63,539.4 L65.5,539.2 L68,539.1 L70.5,538.8 L73,538.4 L75.5,537.9 L78,537.4 L80.5,536.9 L83,536.4 L85.5,535.9 L88,535.4 L90.5,534.8 L93,534.2 L95.5,533.6 L98,533 L100.5,532.4 L103,531.8 L105.5,531.1 L108,530.5 L110.5,529.9 L113,529.2 L115.5,528.6 L118,528 L120.5,527.4 L123,526.8 L125.5,526.1 L128,525.5 L130.5,524.9 L133,524.4 L135.5,523.9 L138,523.4 L140.5,522.9 L143,522.4 L145.5,521.9 L148,521.4 L150.5,521 L153,520.5 L155.5,520.2 L158,519.8 L160.5,519.4 L163,518.9 L165.5,518.4 L168,517.9 L170.5,517.4 L173,516.9 L175.5,516.4 L178,515.9 L180.5,515.5 L183,515 L185.5,514.7 L188,514.3 L190.5,513.8 L193,513.1 L195.5,512.4 L198,511.6 L200.5,511 L203,510.4 L205.5,509.9 L208,509.4 L210.5,508.8 L213,508.1 L215.5,507.4 L218,506.6 L220.5,506 L223,505.6 L225.5,505.2 L228,504.8 L230.5,504.4 L233,503.9 L235.5,503.4 L238,502.9 L240.5,502.4 L243,501.9 L245.5,501.4 L248,500.9 L250.5,500.5 L253,500.1 L255.5,499.7 L258,499.3 L260.5,498.8 L263,498.1 L265.5,497.4 L268,496.6 L270.5,495.8 L273,494.9 L275.5,494.1 L278,493.2 L280.5,492.4 L283,491.6 L285.5,490.6 L288,489.4 L290.5,488.1 L293,486.7 L295.5,485.4 L298,484.1 L300.5,482.7 L303,481.4 L305.5,480.1 L308,478.8 L310.5,477.5 L313,476.2 L315.5,474.9 L318,473.6 L320.5,472.4 L323,471.2 L325.5,470.2 L328,469.1 L330.5,468 L333,467 L335.5,465.9 L338,464.8 L340.5,463.6 L343,462.3 L345.5,460.8 L348,459.4 L350.5,458 L353,456.5 L355.5,455.1 L358,453.6 L360.5,452.2 L363,450.6 L365.5,449.1 L368,447.5 L370.5,445.9 L373,444.4 L375.5,442.8 L378,441.3 L380.5,439.8 L383,438.5 L385.5,437.2 L388,436 L390.5,434.8 L393,433.5 L395.5,432.2 L398,431 L400.5,429.9 L403,428.8 L405.5,427.8 L408,426.8 L410.5,425.8 L413,424.8 L415.5,423.8 L418,422.8 L420.5,421.9 L423,420.9 L425.5,420.1 L428,419.2 L430.5,418.3 L433,417.4 L435.5,416.6 L438,415.7 L440.5,414.9 L443,414.2 L445.5,413.6 L448,413 L450.5,412.4 L453,411.8 L455.5,411.1 L458,410.5 L460.5,409.9 L463,409.2 L465.5,408.6 L468,408 L470.5,407.4 L473,406.8 L475.5,406.1 L478,405.5 L480.5,404.8 L483,404.2 L485.5,403.5 L488,402.8 L490.5,402.1 L493,401.4 L495.5,400.7 L498,400 L500.5,399.3 L503,398.4 L505.5,397.6 L508,396.7 L510.5,395.8 L513,394.9 L515.5,394.1 L518,393.2 L520.5,392.3 L523,391.4 L525.5,390.4 L528,389.5 L530.5,388.6 L533,387.6 L535.5,386.7 L538,385.7 L540.5,384.7 L543,383.6 L545.5,382.5 L548,381.4 L550.5,380.3 L553,379.1 L555.5,378 L558,376.9 L560.5,375.7 L563,374.4 L565.5,373 L568,371.6 L570.5,370.2 L573,368.9 L575.5,367.5 L578,366.1 L580.5,364.6 L583,363.1 L585.5,361.4 L588,359.8 L590.5,358.2 L593,356.6 L595.5,354.9 L598,353.3 L600.5,351.6 L603,349.9 L605.5,348.1 L608,346.4 L610.5,344.6 L613,342.9 L615.5,341.1 L618,339.4 L620.5,337.7 L623,336.1 L625.5,334.4 L628,332.8 L630.5,331.2 L633,329.6 L635.5,327.9 L638,326.3 L640.5,324.8 L643,323.3 L645.5,321.8 L648,320.4 L650.5,318.9 L653,317.5 L655.5,316 L658,314.6 L660.5,313.1 L663,311.6 L665.5,310.1 L668,308.5 L670.5,306.9 L673,305.3 L675.5,303.8 L678,302.3 L680.5,300.8 L683,299.4 L685.5,298 L688,296.6 L690.5,295.2 L693,293.8 L695.5,292.6 L698,291.5 L700.5,290.3 L703,289.2 L705.5,288.1 L708,286.9 L710.5,285.8 L713,284.8 L715.5,283.8 L718,282.8 L720.5,281.8 L723,280.8 L725.5,279.8 L728,278.7 L730.5,277.5 L733,276.2 L735.5,274.9 L738,273.6 L740.5,272.3 L743,271 L745.5,269.7 L748,268.5 L750.5,267.2 L753,265.9 L755.5,264.6 L758,263.3 L760.5,262 L763,260.8 L765.5,259.5 L768,258.3 L770.5,257.1 L773,255.9 L775.5,254.7 L778,253.5 L780.5,252.3 L783,251.2 L785.5,250.1 L788,249.1 L790.5,248 L793,246.9 L795.5,245.9 L798,244.9 L800.5,244 L803,243.1 L805.5,242.3 L808,241.4 L810.5,240.5 L813,239.7 L815.5,238.7 L818,237.6 L820.5,236.5 L823,235.3 L825.5,234.2 L828,233.1 L830.5,231.9 L833,230.5 L835.5,229 L838,227.4 L840.5,225.9 L843,224.5 L845.5,223.3 L848,222 L850.5,220.8 L853,219.5 L855.5,218.3 L858,217 L860.5,215.5 L863,214 L865.5,212.4 L868,210.8 L870.5,209 L873,207.3 L875.5,205.5 L878,203.9 L880.5,202.4 L883,201 L885.5,199.8 L888,198.6 L890.5,197.6 L893,196.6 L895.5,195.8 L898,195.1 L900.5,194.5 L903,193.8 L905.5,193.2 L908,192.8 L910.5,192.4 L913,192.2 L915.5,191.9 L918,191.6 L920.5,191.4 L923,191.2 L925.5,191 L928,190.8 L930.5,190.7 L933,190.5 L935.5,190.4 L938,190.3 L940.5,190.2 L943,190.1 L945.5,190.1 L948,190 L950.5,190 L953,190 L955.5,190 L958,189.9 L960.5,189.9 L963,189.7 L965.5,189.6 L968,189.4 L970.5,189.1 L973,188.8 L975.5,188.5 L978,188.2 L980.5,187.9 L983,187.5 L985.5,187.1 L988,186.6 L990.5,186.2 L993,185.9 L995.5,185.6 L998,185.3 L1000.5,185 L1003,184.7 L1005.5,184.3 L1008,183.8 L1010.5,183.4 L1013,183 L1015.5,182.7 L1018,182.4 L1020.5,182.2 L1023,181.9 L1025.5,181.7 L1028,181.5 L1030.5,181.3 L1033,181.1 L1035.5,180.9 L1038,180.8 L1040.5,180.6 L1043,180.5 L1045.5,180.3 L1048,180.1 L1050.5,179.9 L1053,179.7 L1055.5,179.5 L1058,179.3 L1060.5,179.1 L1063,178.9 L1065.5,178.6 L1068,178.4 L1070.5,178.2 L1073,178 L1075.5,177.8 L1078,177.6 L1080.5,177.4 L1083,177.2 L1085.5,177 L1088,176.8 L1090.5,176.6 L1093,176.4 L1094.2,176.2" fill="none" stroke="#12e6cf" stroke-width="1.8" stroke-linejoin="round"/>
<path d="M3,542 L5.5,542.4 L8,542.7 L10.5,543 L13,543.3 L15.5,543.5 L18,543.8 L20.5,544 L23,544.1 L25.5,544.3 L28,544.4 L30.5,544.5 L33,544.5 L35.5,544.5 L38,544.5 L40.5,544.4 L43,544.4 L45.5,544.2 L48,544.1 L50.5,543.9 L53,543.5 L55.5,543.2 L58,542.8 L60.5,542.4 L63,542 L65.5,541.7 L68,541.3 L70.5,540.9 L73,540.4 L75.5,539.9 L78,539.4 L80.5,538.8 L83,538.1 L85.5,537.4 L88,536.6 L90.5,535.8 L93,535 L95.5,534.1 L98,533.2 L100.5,532.3 L103,531.5 L105.5,530.6 L108,529.7 L110.5,528.8 L113,527.8 L115.5,526.8 L118,525.8 L120.5,524.8 L123,523.8 L125.5,522.8 L128,521.8 L130.5,520.9 L133,520 L135.5,519.1 L138,518.2 L140.5,517.4 L143,516.8 L145.5,516.1 L148,515.5 L150.5,514.9 L153,514.2 L155.5,513.6 L158,513 L160.5,512.4 L163,511.8 L165.5,511.1 L168,510.5 L170.5,509.9 L173,509.4 L175.5,508.9 L178,508.4 L180.5,507.8 L183,507.2 L185.5,506.6 L188,506 L190.5,505.3 L193,504.6 L195.5,503.9 L198,503.1 L200.5,502.3 L203,501.4 L205.5,500.6 L208,499.7 L210.5,498.8 L213,497.8 L215.5,496.8 L218,495.8 L220.5,494.9 L223,494.1 L225.5,493.4 L228,492.6 L230.5,491.9 L233,491.2 L235.5,490.6 L238,490 L240.5,489.3 L243,488.4 L245.5,487.6 L248,486.7 L250.5,486 L253,485.4 L255.5,484.9 L258,484.4 L260.5,483.7 L263,482.8 L265.5,481.8 L268,480.8 L270.5,479.6 L273,478.2 L275.5,476.7 L278,475.2 L280.5,473.8 L283,472.5 L285.5,471.2 L288,470 L290.5,468.8 L293,467.5 L295.5,466.2 L298,465 L300.5,463.8 L303,462.5 L305.5,461.2 L308,460 L310.5,458.8 L313,457.5 L315.5,456.2 L318,455 L320.5,453.9 L323,452.8 L325.5,451.8 L328,450.8 L330.5,449.7 L333,448.5 L335.5,447.2 L338,446 L340.5,444.8 L343,443.5 L345.5,442.2 L348,441 L350.5,440 L353,439.1 L355.5,438.4 L358,437.6 L360.5,436.7 L363,435.6 L365.5,434.5 L368,433.4 L370.5,432.2 L373,431 L375.5,429.8 L378,428.5 L380.5,427.2 L383,426 L385.5,424.8 L388,423.5 L390.5,422.2 L393,421 L395.5,419.8 L398,418.5 L400.5,417.2 L403,416 L405.5,414.8 L408,413.5 L410.5,412.2 L413,411 L415.5,409.8 L418,408.5 L420.5,407.2 L423,406 L425.5,404.8 L428,403.5 L430.5,402.2 L433,401 L435.5,399.8 L438,398.5 L440.5,397.2 L443,396 L445.5,394.8 L448,393.5 L450.5,392.4 L453,391.4 L455.5,390.6 L458,389.7 L460.5,388.7 L463,387.6 L465.5,386.5 L468,385.4 L470.5,384.3 L473,383.1 L475.5,382 L478,380.9 L480.5,379.8 L483,378.8 L485.5,377.8 L488,376.8 L490.5,375.8 L493,374.8 L495.5,373.8 L498,372.8 L500.5,371.8 L503,370.8 L505.5,369.8 L508,368.8 L510.5,367.9 L513,367.1 L515.5,366.4 L518,365.6 L520.5,364.9 L523,364.1 L525.5,363.4 L528,362.6 L530.5,361.9 L533,361.2 L535.5,360.6 L538,360 L540.5,359.4 L543,358.8 L545.5,358.1 L548,357.5 L550.5,356.8 L553,356.1 L555.5,355.4 L558,354.6 L560.5,353.7 L563,352.8 L565.5,351.8 L568,350.8 L570.5,349.7 L573,348.6 L575.5,347.5 L578,346.4 L580.5,345.1 L583,343.7 L585.5,342.2 L588,340.7 L590.5,339.3 L593,337.9 L595.5,336.5 L598,335.2 L600.5,334 L603,333 L605.5,332.1 L608,331.3 L610.5,330.5 L613,329.7 L615.5,329 L618,328.3 L620.5,327.7 L623,326.9 L625.5,325.9 L628,324.7 L630.5,323.4 L633,322.1 L635.5,320.7 L638,319.3 L640.5,317.9 L643,316.4 L645.5,314.9 L648,313.3 L650.5,311.6 L653,309.7 L655.5,307.9 L658,306 L660.5,304.1 L663,302.3 L665.5,300.4 L668,298.5 L670.5,296.7 L673,294.8 L675.5,292.8 L678,290.9 L680.5,289 L683,287 L685.5,285.1 L688,283.3 L690.5,281.4 L693,279.6 L695.5,277.7 L698,275.8 L700.5,274 L703,272 L705.5,269.9 L708,267.8 L710.5,265.6 L713,263.5 L715.5,261.4 L718,259.2 L720.5,257.2 L723,255.2 L725.5,253.3 L728,251.3 L730.5,249.4 L733,247.5 L735.5,245.5 L738,243.6 L740.5,241.8 L743,239.9 L745.5,238.1 L748,236.2 L750.5,234.3 L753,232.5 L755.5,230.8 L758,229.1 L760.5,227.5 L763,226 L765.5,224.4 L768,222.8 L770.5,221.3 L773,219.7 L775.5,218.2 L778,216.7 L780.5,215.2 L783,213.7 L785.5,212.3 L788,210.9 L790.5,209.6 L793,208.3 L795.5,207 L798,205.8 L800.5,204.6 L803,203.4 L805.5,202.2 L808,201 L810.5,199.9 L813,199 L815.5,198.2 L818,197.4 L820.5,196.7 L823,195.9 L825.5,195.3 L828,194.7 L830.5,194.1 L833,193.4 L835.5,192.6 L838,191.7 L840.5,191.3 L843,191.4 L845.5,191.6 L848,191.5 L850.5,191 L853,190.3 L855.5,189.5 L858,188.7 L860.5,188 L863,187.4 L865.5,186.7 L868,186.1 L870.5,185.4 L873,184.8 L875.5,184.2 L878,183.5 L880.5,182.9 L883,182.3 L885.5,181.7 L888,181.2 L890.5,180.8 L893,180.5 L895.5,180.3 L898,180.3 L900.5,180.5 L903,180.9 L905.5,181.3 L908,181.8 L910.5,182.4 L913,183 L915.5,183.7 L918,184.5 L920.5,185.4 L923,186.2 L925.5,186.8 L928,187.4 L930.5,188 L933,188.6 L935.5,189.2 L938,189.8 L940.5,190.5 L943,191.2 L945.5,192 L948,192.8 L950.5,193.6 L953,194.3 L955.5,194.9 L958,195.5 L960.5,196.1 L963,196.7 L965.5,197.3 L968,197.7 L970.5,197.7 L973,197.5 L975.5,197.2 L978,196.8 L980.5,196.4 L983,195.8 L985.5,195.2 L988,194.6 L990.5,194 L993,193.5 L995.5,192.9 L998,192.2 L1000.5,191.5 L1003,190.9 L1005.5,190.2 L1008,189.6 L1010.5,188.9 L1013,188.1 L1015.5,187.4 L1018,186.7 L1020.5,186 L1023,185.4 L1025.5,184.8 L1028,184.2 L1030.5,183.6 L1033,183 L1035.5,182.4 L1038,181.8 L1040.5,181.2 L1043,180.7 L1045.5,180.2 L1048,179.6 L1050.5,178.9 L1053,178.3 L1055.5,177.7 L1058,177 L1060.5,176.2 L1063,175.3 L1065.5,174.4 L1068,173.6 L1070.5,172.7 L1073,171.9 L1075.5,171.2 L1078,170.4 L1080.5,169.7 L1083,169 L1085.5,168.3 L1088,167.6 L1090.5,167.2 L1093,167.3 L1094.2,168" fill="none" stroke="#ff9312" stroke-width="1.7" stroke-linejoin="round"/>
<path d="M3,544 L5.5,544.4 L8,544.7 L10.5,545 L13,545.3 L15.5,545.5 L18,545.8 L20.5,545.9 L23,546 L25.5,546 L28,546 L30.5,545.9 L33,545.9 L35.5,545.7 L38,545.6 L40.5,545.5 L43,545.4 L45.5,545.2 L48,545.1 L50.5,544.8 L53,544.4 L55.5,543.9 L58,543.4 L60.5,542.9 L63,542.4 L65.5,541.9 L68,541.4 L70.5,540.8 L73,540.1 L75.5,539.4 L78,538.6 L80.5,537.9 L83,537.1 L85.5,536.4 L88,535.6 L90.5,534.6 L93,533.5 L95.5,532.2 L98,531 L100.5,529.6 L103,528.2 L105.5,526.7 L108,525.2 L110.5,523.6 L113,522 L115.5,520.4 L118,518.8 L120.5,517.2 L123,515.5 L125.5,513.9 L128,512.3 L130.5,510.7 L133,509.2 L135.5,507.7 L138,506.2 L140.5,504.8 L143,503.5 L145.5,502.2 L148,501 L150.5,499.8 L153,498.5 L155.5,497.2 L158,496 L160.5,494.8 L163,493.5 L165.5,492.2 L168,491 L170.5,489.8 L173,488.6 L175.5,487.5 L178,486.4 L180.5,485.3 L183,484.1 L185.5,483 L188,481.9 L190.5,480.8 L193,479.8 L195.5,478.8 L198,477.8 L200.5,476.7 L203,475.6 L205.5,474.5 L208,473.4 L210.5,472.4 L213,471.4 L215.5,470.6 L218,469.7 L220.5,469 L223,468.4 L225.5,467.9 L228,467.4 L230.5,467 L233,466.7 L235.5,466.4 L238,466.2 L240.5,466 L243,465.9 L245.5,465.7 L248,465.6 L250.5,465.4 L253,465.2 L255.5,464.9 L258,464.7 L260.5,464.6 L263,464.5 L265.5,464.5 L268,464.5 L270.5,464.4 L273,464.4 L275.5,464.2 L278,464.1 L280.5,464.2 L283,464.3 L285.5,464.3 L288,464.2 L290.5,463.6 L293,462.8 L295.5,461.7 L298,460.5 L300.5,459.3 L303,458.1 L305.5,457 L308,455.9 L310.5,454.7 L313,453.5 L315.5,452.2 L318,451 L320.5,449.8 L323,448.5 L325.5,447.2 L328,445.9 L330.5,444.4 L333,442.6 L335.5,440.6 L338,438.6 L340.5,436.6 L343,434.6 L345.5,432.6 L348,430.6 L350.5,428.5 L353,426.3 L355.5,424.1 L358,421.8 L360.5,419.6 L363,417.3 L365.5,415.1 L368,412.8 L370.5,410.7 L373,408.6 L375.5,406.6 L378,404.6 L380.5,402.5 L383,400.4 L385.5,398.3 L388,396.2 L390.5,394.1 L393,391.9 L395.5,389.8 L398,387.7 L400.5,385.8 L403,383.9 L405.5,382.1 L408,380.4 L410.5,378.7 L413,377.1 L415.5,375.4 L418,373.8 L420.5,372.3 L423,371 L425.5,369.8 L428,368.5 L430.5,367.2 L433,366 L435.5,364.8 L438,363.5 L440.5,362.4 L443,361.4 L445.5,360.6 L448,359.7 L450.5,358.8 L453,357.9 L455.5,357.1 L458,356.2 L460.5,355.4 L463,354.6 L465.5,353.9 L468,353.1 L470.5,352.4 L473,351.8 L475.5,351.1 L478,350.5 L480.5,349.9 L483,349.4 L485.5,348.9 L488,348.4 L490.5,348 L493,347.7 L495.5,347.4 L498,347.2 L500.5,347 L503,346.9 L505.5,346.7 L508,346.6 L510.5,346.6 L513,346.6 L515.5,346.8 L518,346.9 L520.5,347.2 L523,347.6 L525.5,348.1 L528,348.6 L530.5,349.1 L533,349.6 L535.5,350.1 L538,350.6 L540.5,351.2 L543,351.9 L545.5,352.6 L548,353.3 L550.5,353.7 L553,353.7 L555.5,353.4 L558,353.2 L560.5,352.8 L563,352.4 L565.5,351.9 L568,351.4 L570.5,350.7 L573,349.9 L575.5,349.1 L578,348.2 L580.5,347 L583,345.6 L585.5,343.9 L588,342.3 L590.5,340.5 L593,338.6 L595.5,336.6 L598,334.6 L600.5,332.5 L603,330.3 L605.5,328.1 L608,325.8 L610.5,323.7 L613,321.6 L615.5,319.6 L618,317.6 L620.5,315.9 L623,314.4 L625.5,313 L628,311.4 L630.5,309.6 L633,307.6 L635.5,305.6 L638,303.6 L640.5,301.6 L643,299.4 L645.5,297 L648,294.5 L650.5,292 L653,289.4 L655.5,286.5 L658,283.3 L660.5,279.8 L663,276.3 L665.5,272.8 L668,269.5 L670.5,266.4 L673,263.4 L675.5,260.4 L678,257.4 L680.5,254.4 L683,251.4 L685.5,248.4 L688,245.4 L690.5,242.4 L693,239.2 L695.5,235.8 L698,232.3 L700.5,228.8 L703,225.3 L705.5,222 L708,218.8 L710.5,215.6 L713,212.6 L715.5,210 L718,207.8 L720.5,205.9 L723,204 L725.5,202.1 L728,200.2 L730.5,198.4 L733,196.5 L735.5,194.8 L738,193.2 L740.5,191.7 L743,190.2 L745.5,188.8 L748,187.5 L750.5,186.2 L753,185 L755.5,184 L758,183.1 L760.5,182.3 L763,181.6 L765.5,181.1 L768,180.7 L770.5,180.4 L773,180.2 L775.5,179.8 L778,179.4 L780.5,178.9 L783,178.4 L785.5,177.9 L788,177.4 L790.5,176.9 L793,176.4 L795.5,176 L798,175.6 L800.5,175.2 L803,174.8 L805.5,174.8 L808,174.9 L810.5,175.3 L813,175.7 L815.5,176.2 L818,176.9 L820.5,177.7 L823,178.4 L825.5,179 L828,179.6 L830.5,180.1 L833,180.7 L835.5,181.5 L838,182.6 L840.5,183.8 L843,185.1 L845.5,186.4 L848,187.6 L850.5,188.7 L853,189.5 L855.5,190.1 L858,190.6 L860.5,190.9 L863,191.2 L865.5,191.4 L868,191.4 L870.5,191.4 L873,191.3 L875.5,191 L878,190.7 L880.5,190.3 L883,189.8 L885.5,189.4 L888,188.9 L890.5,188.7 L893,188.8 L895.5,189.3 L898,189.9 L900.5,190.6 L903,191.3 L905.5,192.2 L908,193 L910.5,193.7 L913,194.2 L915.5,194.8 L918,195.4 L920.5,196.1 L923,196.7 L925.5,197.3 L928,198 L930.5,198.5 L933,198.9 L935.5,199.1 L938,199.3 L940.5,199.6 L943,199.9 L945.5,200.3 L948,200.7 L950.5,201 L953,201.4 L955.5,201.9 L958,202.6 L960.5,203.1 L963,203.5 L965.5,203.6 L968,203.4 L970.5,202.8 L973,202.1 L975.5,201.1 L978,199.9 L980.5,198.5 L983,197.1 L985.5,195.9 L988,194.6 L990.5,193.4 L993,192.1 L995.5,190.8 L998,189.3 L1000.5,187.7 L1003,186 L1005.5,184 L1008,181.9 L1010.5,179.8 L1013,177.9 L1015.5,176 L1018,174.6 L1020.5,173.5 L1023,172.8 L1025.5,172.3 L1028,172 L1030.5,171.9 L1033,171.9 L1035.5,171.9 L1038,171.9 L1040.5,171.8 L1043,171.7 L1045.5,171.5 L1048,171.4 L1050.5,171.1 L1053,170.9 L1055.5,170.6 L1058,170.3 L1060.5,169.7 L1063,169 L1065.5,167.9 L1068,166.4 L1070.5,164.6 L1073,162.9 L1075.5,161.7 L1078,161.1 L1080.5,160.7 L1083,160 L1085.5,159 L1088,157.8 L1090.5,156.7 L1093,155.9 L1094.2,155.3" fill="none" stroke="#5cf018" stroke-width="1.7" stroke-linejoin="round"/>
<path d="M3,552.5 L5.5,553.2 L8,553.9 L10.5,554.4 L13,554.6 L15.5,554.8 L18,554.9 L20.5,554.9 L23,554.7 L25.5,554.5 L28,554.2 L30.5,553.7 L33,553.1 L35.5,552.4 L38,551.6 L40.5,550.8 L43,550 L45.5,549.1 L48,548.2 L50.5,547.1 L53,545.9 L55.5,544.4 L58,542.6 L60.5,540.7 L63,538.9 L65.5,537.1 L68,535.4 L70.5,533.5 L73,531.6 L75.5,529.4 L78,527 L80.5,524.5 L83,522 L85.5,519.5 L88,517 L90.5,514.3 L93,511.4 L95.5,508.3 L98,505.1 L100.5,501.9 L103,498.6 L105.5,495.2 L108,491.8 L110.5,488.1 L113,484.3 L115.5,480.7 L118,477.4 L120.5,474.6 L123,472 L125.5,469.7 L128,467.6 L130.5,465.8 L133,464.2 L135.5,462.8 L138,461.5 L140.5,460.5 L143,459.6 L145.5,458.9 L148,458.1 L150.5,457.6 L153,457.2 L155.5,457.1 L158,457 L160.5,457.1 L163,457.3 L165.5,457.8 L168,458.4 L170.5,459.3 L173,460.2 L175.5,461.6 L178,463.1 L180.5,464.7 L183,466.3 L185.5,467.7 L188,468.9 L190.5,469.9 L193,470.6 L195.5,471.1 L198,471.6 L200.5,472 L203,472.3 L205.5,472.6 L208,472.8 L210.5,472.8 L213,472.7 L215.5,472.6 L218,472.5 L220.5,472.6 L223,472.8 L225.5,473.2 L228,473.6 L230.5,474 L233,474.3 L235.5,474.3 L238,474.2 L240.5,473.7 L243,473.1 L245.5,472.4 L248,471.6 L250.5,471 L253,470.4 L255.5,469.9 L258,469.3 L260.5,468.4 L263,467.2 L265.5,465.6 L268,463.9 L270.5,462.4 L273,461 L275.5,459.9 L278,458.8 L280.5,457.8 L283,456.8 L285.5,455.8 L288,454.8 L290.5,453.6 L293,452.1 L295.5,450.2 L298,448 L300.5,445.5 L303,443 L305.5,440.5 L308,438 L310.5,435.7 L313,433.6 L315.5,431.5 L318,429.3 L320.5,426.9 L323,424.4 L325.5,421.7 L328,418.6 L330.5,415.5 L333,412.4 L335.5,409.4 L338,406.4 L340.5,403.3 L343,400.1 L345.5,396.9 L348,393.7 L350.5,390.7 L353,388 L355.5,385.3 L358,382.4 L360.5,379.4 L363,376.4 L365.5,373.3 L368,370.2 L370.5,367.2 L373,364.6 L375.5,362.3 L378,360.4 L380.5,358.5 L383,356.6 L385.5,354.6 L388,352.6 L390.5,350.7 L393,348.9 L395.5,347.1 L398,345.4 L400.5,343.5 L403,341.7 L405.5,340.1 L408,338.8 L410.5,338.2 L413,337.7 L415.5,337.6 L418,337.5 L420.5,337.6 L423,337.8 L425.5,337.9 L428,338 L430.5,338.2 L433,338.6 L435.5,338.9 L438,339 L440.5,339.1 L443,339.3 L445.5,339.8 L448,340.4 L450.5,341.5 L453,342.8 L455.5,344.4 L458,346.1 L460.5,347.7 L463,349.3 L465.5,350.7 L468,352 L470.5,353 L473,353.9 L475.5,354.5 L478,355.1 L480.5,355.5 L483,355.8 L485.5,355.9 L488,356 L490.5,356 L493,356 L495.5,355.8 L498,355.4 L500.5,355 L503,354.7 L505.5,354.4 L508,354.2 L510.5,354.2 L513,354.3 L515.5,354.7 L518,355.1 L520.5,355.8 L523,356.7 L525.5,357.7 L528,358.7 L530.5,359.5 L533,360.1 L535.5,360.4 L538,360.5 L540.5,360.3 L543,359.9 L545.5,359.2 L548,358.3 L550.5,357.2 L553,356 L555.5,354.8 L558,353.5 L560.5,352.1 L563,350.7 L565.5,349.1 L568,347.4 L570.5,345.6 L573,343.9 L575.5,342.1 L578,340.3 L580.5,338.1 L583,335.3 L585.5,331.9 L588,328.2 L590.5,324 L593,319.8 L595.5,315.5 L598,311.7 L600.5,308.2 L603,305 L605.5,301.4 L608,297.5 L610.5,293.3 L613,288.8 L615.5,284 L618,279.1 L620.5,274.4 L623,270 L625.5,265.9 L628,262.1 L630.5,258.5 L633,255.2 L635.5,252.1 L638,249.1 L640.5,246.2 L643,243 L645.5,239.4 L648,235.5 L650.5,231.6 L653,227.5 L655.5,223.3 L658,219.2 L660.5,215 L663,210.9 L665.5,207.3 L668,204.1 L670.5,201.3 L673,199 L675.5,197 L678,195.3 L680.5,193.2 L683,190.8 L685.5,188.1 L688,185.4 L690.5,182.6 L693,179.8 L695.5,177.1 L698,174.5 L700.5,172.1 L703,169.9 L705.5,168 L708,166.4 L710.5,164.8 L713,163.4 L715.5,162.1 L718,161 L720.5,160.2 L723,159.6 L725.5,159.2 L728,159 L730.5,159 L733,159.1 L735.5,159.2 L738,159.4 L740.5,159.5 L743,159.7 L745.5,159.9 L748,160.3 L750.5,160.8 L753,161.5 L755.5,162.3 L758,163.2 L760.5,164.2 L763,165.5 L765.5,167 L768,168.7 L770.5,170.5 L773,172.4 L775.5,174.4 L778,176.2 L780.5,178 L783,179.7 L785.5,181.3 L788,183 L790.5,184.6 L793,186 L795.5,187.2 L798,188.2 L800.5,189 L803,189.8 L805.5,190.5 L808,191.4 L810.5,192.4 L813,193.6 L815.5,194.7 L818,195.7 L820.5,196.7 L823,197.8 L825.5,198.9 L828,200.1 L830.5,201.3 L833,202.6 L835.5,204 L838,205.6 L840.5,207.4 L843,209 L845.5,210 L848,210.4 L850.5,210 L853,208.9 L855.5,207.3 L858,205.7 L860.5,204.1 L863,202.8 L865.5,201.5 L868,200.2 L870.5,199 L873,197.8 L875.5,196.5 L878,195.2 L880.5,194 L883,192.7 L885.5,191.5 L888,190.2 L890.5,189.1 L893,188 L895.5,187.2 L898,186.6 L900.5,186.3 L903,186.3 L905.5,186.6 L908,186.9 L910.5,187.3 L913,187.8 L915.5,188.3 L918,188.7 L920.5,189 L923,189.3 L925.5,189.4 L928,189.5 L930.5,189.3 L933,189.2 L935.5,189.2 L938,189.7 L940.5,190.8 L943,192.5 L945.5,194.4 L948,196.3 L950.5,198.1 L953,200.2 L955.5,202.6 L958,205.1 L960.5,207.6 L963,209.8 L965.5,211.7 L968,213.3 L970.5,214.6 L973,215.4 L975.5,215.4 L978,214.6 L980.5,212.7 L983,209.9 L985.5,206.6 L988,203.6 L990.5,200.9 L993,198 L995.5,194.8 L998,191.5 L1000.5,188.2 L1003,184.7 L1005.5,181 L1008,177.3 L1010.5,173.5 L1013,169.8 L1015.5,166.1 L1018,162.7 L1020.5,159.5 L1023,156.4 L1025.5,153.5 L1028,150.7 L1030.5,147.9 L1033,145.4 L1035.5,142.9 L1038,140.3 L1040.5,138 L1043,135.8 L1045.5,133.9 L1048,132.1 L1050.5,130.2 L1053,128.3 L1055.5,126.7 L1058,125.5 L1060.5,125 L1063,125 L1065.5,125.3 L1068,125.6 L1070.5,125.9 L1073,126.3 L1075.5,126.7 L1078,127.4 L1080.5,128.3 L1083,129.2 L1085.5,130 L1088,130.6 L1090.5,131.1 L1093,131.3 L1094.2,131.3" fill="none" stroke="#0f3cf2" stroke-width="1.7" stroke-linejoin="round"/>
<path d="M3,555.6 L5.5,554.9 L8,554.2 L10.5,553.8 L13,553.5 L15.5,553.2 L18,552.7 L20.5,551.8 L23,550.7 L25.5,549.6 L28,548.6 L30.5,547.7 L33,546.9 L35.5,546.2 L38,545.5 L40.5,544.6 L43,543.5 L45.5,541.9 L48,540.1 L50.5,537.8 L53,535.2 L55.5,532.4 L58,529.7 L60.5,527.2 L63,524.4 L65.5,521.3 L68,517.7 L70.5,514 L73,510.3 L75.5,506.7 L78,503 L80.5,499.2 L83,495.3 L85.5,491.1 L88,486.8 L90.5,482.1 L93,477 L95.5,472 L98,467.4 L100.5,463.3 L103,459.3 L105.5,455.7 L108,452.4 L110.5,449.6 L113,447 L115.5,444.7 L118,442.7 L120.5,441.3 L123,440.5 L125.5,440.7 L128,441.6 L130.5,443.3 L133,445.5 L135.5,448 L138,450.5 L140.5,453 L143,455.5 L145.5,457.9 L148,460.2 L150.5,462.2 L153,464.1 L155.5,465.9 L158,467.6 L160.5,469.4 L163,471.1 L165.5,472.9 L168,474.6 L170.5,476.4 L173,478 L175.5,479.4 L178,480.4 L180.5,481.1 L183,481.9 L185.5,482.6 L188,483.3 L190.5,483.8 L193,483.9 L195.5,483.1 L198,481.6 L200.5,479.4 L203,477 L205.5,474.5 L208,472 L210.5,469.7 L213,467.7 L215.5,466.2 L218,465.1 L220.5,464.6 L223,464.2 L225.5,464.3 L228,464.7 L230.5,465.4 L233,466.5 L235.5,467.8 L238,469 L240.5,470.1 L243,471.1 L245.5,471.7 L248,472 L250.5,471.8 L253,471.4 L255.5,470.9 L258,470.3 L260.5,469.4 L263,468.1 L265.5,466 L268,463.4 L270.5,460.2 L273,456.8 L275.5,453.1 L278,449.3 L280.5,445.7 L283,442.3 L285.5,438.9 L288,435.2 L290.5,431.4 L293,427.9 L295.5,424.8 L298,422.1 L300.5,420 L303,418.2 L305.5,416.7 L308,415.2 L310.5,413.5 L313,411.6 L315.5,409.6 L318,407.6 L320.5,405.6 L323,403.5 L325.5,400.9 L328,397.7 L330.5,393.8 L333,389.6 L335.5,385.1 L338,380.6 L340.5,375.9 L343,371 L345.5,366 L348,361.1 L350.5,356.7 L353,352.9 L355.5,349.8 L358,347 L360.5,344.7 L363,342.6 L365.5,340.4 L368,338 L370.5,335.5 L373,333 L375.5,330.7 L378,328.7 L380.5,327.1 L383,325.8 L385.5,324.8 L388,323.9 L390.5,323.3 L393,323.1 L395.5,323.3 L398,323.9 L400.5,325 L403,326.4 L405.5,328.5 L408,331.7 L410.5,335.8 L413,339.9 L415.5,343.1 L418,345.7 L420.5,347.7 L423,349.6 L425.5,351 L428,352.1 L430.5,352.6 L433,352.7 L435.5,352.1 L438,351.3 L440.5,350.4 L443,349.7 L445.5,349.4 L448,349.7 L450.5,350.4 L453,351.5 L455.5,352.8 L458,354 L460.5,355.2 L463,356.5 L465.5,357.6 L468,358.7 L470.5,359.6 L473,360.4 L475.5,361.1 L478,361.8 L480.5,362.2 L483,362.1 L485.5,361.4 L488,360.2 L490.5,358.9 L493,357.8 L495.5,356.8 L498,355.8 L500.5,355.2 L503,354.7 L505.5,354.4 L508,354.2 L510.5,353.7 L513,353.2 L515.5,353.1 L518,353.5 L520.5,354.6 L523,356.1 L525.5,357.9 L528,359.6 L530.5,361.5 L533,363.4 L535.5,365.2 L538,366.8 L540.5,367.9 L543,368.8 L545.5,368.7 L548,367.3 L550.5,364.3 L553,360 L555.5,355.1 L558,349.8 L560.5,344.5 L563,339.2 L565.5,333.8 L568,328.4 L570.5,322.7 L573,316.7 L575.5,310.2 L578,303.3 L580.5,295.9 L583,288.6 L585.5,281.6 L588,275 L590.5,268.8 L593,262.7 L595.5,257.4 L598,253.1 L600.5,249.8 L603,247 L605.5,244.3 L608,241.4 L610.5,238.3 L613,235.2 L615.5,232.5 L618,230.5 L620.5,229.7 L623,229.7 L625.5,230.8 L628,232.3 L630.5,233.5 L633,233.4 L635.5,231.9 L638,229.4 L640.5,226.4 L643,223.3 L645.5,220 L648,216 L650.5,211.4 L653,205.9 L655.5,199.9 L658,193.2 L660.5,186.1 L663,179.1 L665.5,172.6 L668,166.8 L670.5,161.6 L673,157.3 L675.5,153.7 L678,151 L680.5,148.9 L683,147.4 L685.5,146 L688,144.6 L690.5,143.2 L693,142 L695.5,141.2 L698,140.8 L700.5,141 L703,142.1 L705.5,144 L708,146.5 L710.5,149 L713,151.8 L715.5,154.9 L718,158.4 L720.5,162 L723,165.8 L725.5,169.5 L728,173 L730.5,176.2 L733,178.6 L735.5,180.1 L738,180.6 L740.5,180.6 L743,179.5 L745.5,177.8 L748,175.8 L750.5,173.9 L753,172.4 L755.5,171 L758,170.1 L760.5,169.5 L763,170 L765.5,171.2 L768,173.5 L770.5,176.4 L773,179.8 L775.5,183.2 L778,186.9 L780.5,190.7 L783,194.3 L785.5,197.6 L788,200.4 L790.5,202.9 L793,204.6 L795.5,205.6 L798,205.9 L800.5,206 L803,206.3 L805.5,206.9 L808,207.7 L810.5,208.4 L813,209.3 L815.5,210.3 L818,211.9 L820.5,213.8 L823,215.3 L825.5,215.4 L828,214.2 L830.5,212.7 L833,211.7 L835.5,211.6 L838,211.9 L840.5,212.6 L843,213.1 L845.5,213.3 L848,212.7 L850.5,210.7 L853,207.3 L855.5,203 L858,198.5 L860.5,194.3 L863,190.4 L865.5,186.7 L868,182.9 L870.5,179.2 L873,175.2 L875.5,171 L878,166.8 L880.5,163 L883,160.2 L885.5,158.5 L888,158 L890.5,158.8 L893,160.7 L895.5,163.5 L898,166.8 L900.5,171 L903,176.1 L905.5,182.1 L908,188.1 L910.5,193.8 L913,198.8 L915.5,203.3 L918,207.2 L920.5,210.4 L923,213.1 L925.5,215.2 L928,216.5 L930.5,216.8 L933,216.5 L935.5,215.8 L938,215.1 L940.5,214.8 L943,215 L945.5,215.9 L948,217.3 L950.5,218.8 L953,220.5 L955.5,222.1 L958,223.6 L960.5,224.9 L963,225.8 L965.5,226.4 L968,226.3 L970.5,225.2 L973,222.2 L975.5,217.1 L978,211.4 L980.5,205 L983,198.1 L985.5,189.4 L988,180.5 L990.5,171.6 L993,162.8 L995.5,153.3 L998,143.8 L1000.5,135.2 L1003,127.9 L1005.5,121.7 L1008,116.7 L1010.5,113.1 L1013,110.6 L1015.5,108.7 L1018,106.9 L1020.5,105.1 L1023,103.7 L1025.5,103.5 L1028,104.8 L1030.5,107.4 L1033,110.7 L1035.5,114.3 L1038,118.2 L1040.5,122.6 L1043,127 L1045.5,131 L1048,134.4 L1050.5,137.4 L1053,139.9 L1055.5,142 L1058,143.4 L1060.5,144.2 L1063,144.5 L1065.5,144.4 L1068,143.8 L1070.5,142.5 L1073,140.9 L1075.5,139.8 L1078,139.6 L1080.5,140 L1083,140.2 L1085.5,139.6 L1088,137.9 L1090.5,135.7 L1093,133.9 L1094.2,132.7" fill="none" stroke="#e8706e" stroke-width="1.4" stroke-linejoin="round"/>
</g>
<ellipse cx="1115.4" cy="142.2" rx="25.5" ry="8" fill="none" stroke="#909090" stroke-width="3.4" filter="url(#blur)" opacity="0.62"/>
<ellipse cx="1113.2" cy="137.6" rx="25.2" ry="7.6" fill="none" stroke="#188818" stroke-width="1.9"/>
<path d="M3.0,622.9V617.2M15.4,622.9V618.7M17.2,622.9V613.4M18.9,622.9V617.7M20.7,622.9V615.1M22.5,622.9V617.7M24.2,622.9V616.5M31.3,622.9V617.9M41.9,622.9V616.2M43.7,622.9V616.6M45.5,622.9V618.4M47.2,622.9V616.9M49.0,622.9V613.8M50.8,622.9V611.0M52.6,622.9V618.2M54.3,622.9V608.4M56.1,622.9V614.4M57.9,622.9V617.0M65.0,622.9V614.2M66.7,622.9V614.6M68.5,622.9V612.5M70.3,622.9V617.1M73.8,622.9V618.6M75.6,622.9V611.0M79.1,622.9V619.0M84.4,622.9V618.9M88.0,622.9V614.8M89.7,622.9V618.0M91.5,622.9V616.7M93.3,622.9V617.3M95.0,622.9V617.8M98.6,622.9V617.8M100.3,622.9V610.1M102.1,622.9V609.3M103.9,622.9V618.0M105.7,622.9V615.9M111.0,622.9V611.4M112.7,622.9V614.9M114.5,622.9V619.1M121.6,622.9V618.2M128.7,622.9V615.6M130.4,622.9V611.0M132.2,622.9V615.7M135.8,622.9V618.2M142.8,622.9V616.5M149.9,622.9V619.0M151.7,622.9V614.8M155.2,622.9V617.9M160.5,622.9V612.0M162.3,622.9V614.9M172.9,622.9V617.5M176.5,622.9V613.5M178.2,622.9V614.7M187.1,622.9V618.8M192.4,622.9V618.4M194.2,622.9V617.9M195.9,622.9V614.7M197.7,622.9V616.9M199.5,622.9V614.6M201.2,622.9V617.5M203.0,622.9V619.1M204.8,622.9V616.4M210.1,622.9V615.5M213.6,622.9V617.9M222.5,622.9V615.4M224.2,622.9V615.4M226.0,622.9V611.4M229.6,622.9V617.6M233.1,622.9V616.8M234.9,622.9V618.0M238.4,622.9V616.9M240.2,622.9V618.2M241.9,622.9V618.5M243.7,622.9V616.6M245.5,622.9V615.8M247.3,622.9V613.6M250.8,622.9V610.2M252.6,622.9V613.2M256.1,622.9V615.9M263.2,622.9V616.1M265.0,622.9V618.4M266.7,622.9V593.0M268.5,622.9V600.0M270.3,622.9V618.6M279.1,622.9V614.5M280.9,622.9V617.9M282.7,622.9V618.4M288.0,622.9V617.6M289.7,622.9V616.6M291.5,622.9V617.2M293.3,622.9V617.7M296.8,622.9V617.9M305.7,622.9V618.8M309.2,622.9V618.7M312.8,622.9V618.4M318.1,622.9V617.7M319.8,622.9V617.4M326.9,622.9V616.4M328.7,622.9V618.0M330.4,622.9V616.2M332.2,622.9V617.2M334.0,622.9V618.1M337.5,622.9V611.3M342.8,622.9V619.1M344.6,622.9V618.3M346.4,622.9V613.0M348.1,622.9V617.6M351.7,622.9V616.8M358.8,622.9V617.8M362.3,622.9V613.0M364.1,622.9V618.0M365.9,622.9V618.3M369.4,622.9V617.4M371.2,622.9V614.3M372.9,622.9V617.4M374.7,622.9V613.0M387.1,622.9V614.8M395.9,622.9V615.4M397.7,622.9V618.2M399.5,622.9V618.4M403.0,622.9V616.4M408.3,622.9V617.9M410.1,622.9V617.8M413.6,622.9V611.7M417.2,622.9V615.8M418.9,622.9V613.3M422.5,622.9V617.2M424.3,622.9V613.6M427.8,622.9V617.8M429.6,622.9V616.6M431.3,622.9V614.6M433.1,622.9V611.0M434.9,622.9V617.4M436.6,622.9V611.2M438.4,622.9V618.8M445.5,622.9V618.6M452.6,622.9V615.7M457.9,622.9V618.4M461.4,622.9V618.7M463.2,622.9V610.1M465.0,622.9V612.2M466.7,622.9V611.3M470.3,622.9V615.9M480.9,622.9V617.8M482.7,622.9V613.3M484.4,622.9V616.1M486.2,622.9V618.5M489.8,622.9V618.2M491.5,622.9V619.0M498.6,622.9V612.5M500.4,622.9V613.1M502.1,622.9V616.2M507.4,622.9V617.4M511.0,622.9V613.6M512.8,622.9V618.2M532.2,622.9V615.0M537.5,622.9V616.4M539.3,622.9V615.1M541.1,622.9V618.7M542.9,622.9V614.7M544.6,622.9V616.8M548.2,622.9V614.7M549.9,622.9V617.9M551.7,622.9V615.8M553.5,622.9V614.1M558.8,622.9V617.0M560.5,622.9V617.8M562.3,622.9V617.3M569.4,622.9V618.1M571.2,622.9V615.5M572.9,622.9V614.5M574.7,622.9V616.1M576.5,622.9V614.6M578.2,622.9V610.4M580.0,622.9V618.0M581.8,622.9V617.5M585.3,622.9V617.3M588.9,622.9V616.0M590.6,622.9V616.1M592.4,622.9V617.2M594.2,622.9V617.2M596.0,622.9V617.1M597.7,622.9V617.6M603.0,622.9V612.8M608.3,622.9V617.0M610.1,622.9V614.3M611.9,622.9V609.0M613.6,622.9V614.3M615.4,622.9V617.9M617.2,622.9V618.3M622.5,622.9V612.9M629.6,622.9V618.4M631.4,622.9V616.1M633.1,622.9V618.7M634.9,622.9V617.7M636.7,622.9V614.6M643.7,622.9V616.1M645.5,622.9V618.3M647.3,622.9V613.7M649.0,622.9V614.6M650.8,622.9V615.3M652.6,622.9V618.0M654.4,622.9V618.1M665.0,622.9V615.9M670.3,622.9V618.0M672.1,622.9V616.1M673.8,622.9V618.3M675.6,622.9V616.2M677.4,622.9V616.3M682.7,622.9V617.4M684.5,622.9V615.2M686.2,622.9V615.0M688.0,622.9V612.8M689.8,622.9V613.8M693.3,622.9V612.2M695.1,622.9V616.8M700.4,622.9V615.8M702.1,622.9V609.0M707.5,622.9V617.8M718.1,622.9V605.0M719.9,622.9V614.2M721.6,622.9V612.7M723.4,622.9V613.3M728.7,622.9V617.6M732.2,622.9V612.7M734.0,622.9V613.5M735.8,622.9V616.1M739.3,622.9V618.6M741.1,622.9V616.3M742.9,622.9V615.0M746.4,622.9V618.6M753.5,622.9V613.1M758.8,622.9V614.5M765.9,622.9V617.3M771.2,622.9V614.0M773.0,622.9V617.1M774.7,622.9V618.0M780.0,622.9V618.3M781.8,622.9V613.9M783.6,622.9V616.9M788.9,622.9V616.7M790.6,622.9V617.9M792.4,622.9V618.1M794.2,622.9V617.5M797.7,622.9V619.1M799.5,622.9V617.0M801.3,622.9V610.7M804.8,622.9V610.9M810.1,622.9V615.0M813.7,622.9V611.3M815.4,622.9V615.2M824.3,622.9V617.0M826.0,622.9V606.0M827.8,622.9V617.9M838.4,622.9V616.2M840.2,622.9V617.4M847.3,622.9V615.0M849.1,622.9V616.7M850.8,622.9V616.4M852.6,622.9V616.2M854.4,622.9V618.3M856.1,622.9V618.7M857.9,622.9V617.0M868.5,622.9V611.1M870.3,622.9V618.9M872.1,622.9V613.3M873.8,622.9V610.0M877.4,622.9V616.7M879.1,622.9V615.1M882.7,622.9V618.5M888.0,622.9V618.5M893.3,622.9V613.2M903.9,622.9V618.7M905.7,622.9V614.7M907.5,622.9V613.2M909.2,622.9V611.8M914.5,622.9V618.9M918.1,622.9V617.8M919.9,622.9V614.4M921.6,622.9V618.6M925.2,622.9V614.7M930.5,622.9V618.0M934.0,622.9V615.1M944.6,622.9V618.7M953.5,622.9V618.2M955.3,622.9V618.2M957.0,622.9V614.3M958.8,622.9V616.8M960.6,622.9V613.6M962.3,622.9V612.0M967.6,622.9V612.9M969.4,622.9V608.9M971.2,622.9V614.4M973.0,622.9V617.4M974.7,622.9V608.0M976.5,622.9V615.1M978.3,622.9V617.8M981.8,622.9V614.4M983.6,622.9V613.8M985.4,622.9V615.7M990.7,622.9V618.2M992.4,622.9V617.9M994.2,622.9V618.2M996.0,622.9V617.9M999.5,622.9V617.2M1001.3,622.9V616.7M1006.6,622.9V616.8M1008.4,622.9V615.4M1010.1,622.9V616.0M1019.0,622.9V617.6M1020.8,622.9V617.7M1031.4,622.9V612.8M1038.5,622.9V618.7M1040.2,622.9V616.5M1042.0,622.9V617.7M1043.8,622.9V614.6M1050.8,622.9V617.2M1056.2,622.9V617.2M1057.9,622.9V613.3M1063.2,622.9V618.8M1065.0,622.9V617.0M1068.5,622.9V617.1M1072.1,622.9V619.1M1077.4,622.9V610.6M1082.7,622.9V614.9M1084.5,622.9V618.6M1086.2,622.9V616.2M1089.8,622.9V618.3M1091.5,622.9V610.6" stroke="#44b844" stroke-width="1.2" fill="none"/>
<path d="M4.8,622.9V613.8M6.5,622.9V617.1M8.3,622.9V616.8M10.1,622.9V616.3M11.8,622.9V618.0M13.6,622.9V616.0M26.0,622.9V618.0M27.8,622.9V611.7M29.6,622.9V616.6M33.1,622.9V618.4M34.9,622.9V616.0M36.6,622.9V618.9M38.4,622.9V618.3M40.2,622.9V618.2M59.6,622.9V615.8M61.4,622.9V615.8M63.2,622.9V616.6M72.0,622.9V615.8M77.3,622.9V618.0M80.9,622.9V618.4M82.7,622.9V617.8M86.2,622.9V617.7M96.8,622.9V613.7M107.4,622.9V605.0M109.2,622.9V616.3M116.3,622.9V617.9M118.0,622.9V617.7M119.8,622.9V613.0M123.4,622.9V605.0M125.1,622.9V618.7M126.9,622.9V618.0M134.0,622.9V618.3M137.5,622.9V612.2M139.3,622.9V615.2M141.1,622.9V619.1M144.6,622.9V617.5M146.4,622.9V613.8M148.1,622.9V616.8M153.4,622.9V614.1M157.0,622.9V616.7M158.8,622.9V617.6M164.1,622.9V617.8M165.8,622.9V616.8M167.6,622.9V617.0M169.4,622.9V616.4M171.2,622.9V613.1M174.7,622.9V614.1M180.0,622.9V595.0M181.8,622.9V617.5M183.5,622.9V609.6M185.3,622.9V612.9M188.8,622.9V618.2M190.6,622.9V612.7M206.6,622.9V617.6M208.3,622.9V615.1M211.9,622.9V615.5M215.4,622.9V612.1M217.2,622.9V618.0M218.9,622.9V615.1M220.7,622.9V618.0M227.8,622.9V614.8M231.3,622.9V614.3M236.6,622.9V614.4M249.0,622.9V619.1M254.3,622.9V619.0M257.9,622.9V610.0M259.6,622.9V618.4M261.4,622.9V616.3M272.0,622.9V615.5M273.8,622.9V617.3M275.6,622.9V618.2M277.4,622.9V608.0M284.4,622.9V618.4M286.2,622.9V618.4M295.1,622.9V618.7M298.6,622.9V615.7M300.4,622.9V619.0M302.1,622.9V617.2M303.9,622.9V616.7M307.4,622.9V618.6M311.0,622.9V617.2M314.5,622.9V618.0M316.3,622.9V613.0M321.6,622.9V613.4M323.4,622.9V617.0M325.1,622.9V618.5M335.8,622.9V615.7M339.3,622.9V616.2M341.1,622.9V616.3M349.9,622.9V616.4M353.5,622.9V616.9M355.2,622.9V614.7M357.0,622.9V614.3M360.5,622.9V618.9M367.6,622.9V614.4M376.5,622.9V619.0M378.2,622.9V612.1M380.0,622.9V615.7M381.8,622.9V618.9M383.6,622.9V616.2M385.3,622.9V615.4M388.9,622.9V615.1M390.6,622.9V608.0M392.4,622.9V618.8M394.2,622.9V618.1M401.2,622.9V617.0M404.8,622.9V618.2M406.6,622.9V616.4M411.9,622.9V614.1M415.4,622.9V616.9M420.7,622.9V615.1M426.0,622.9V616.9M440.2,622.9V611.9M442.0,622.9V609.8M443.7,622.9V617.3M447.3,622.9V614.8M449.0,622.9V615.0M450.8,622.9V613.1M454.4,622.9V614.3M456.1,622.9V615.9M459.7,622.9V617.7M468.5,622.9V618.9M472.1,622.9V614.6M473.8,622.9V615.9M475.6,622.9V617.0M477.4,622.9V614.9M479.1,622.9V618.7M488.0,622.9V616.3M493.3,622.9V617.0M495.1,622.9V611.6M496.8,622.9V617.3M503.9,622.9V615.9M505.7,622.9V618.1M509.2,622.9V616.0M514.5,622.9V611.0M516.3,622.9V617.5M518.1,622.9V618.7M519.8,622.9V615.3M521.6,622.9V618.2M523.4,622.9V614.5M525.1,622.9V617.8M526.9,622.9V608.4M528.7,622.9V619.0M530.5,622.9V618.0M534.0,622.9V609.0M535.8,622.9V614.0M546.4,622.9V618.2M555.2,622.9V611.3M557.0,622.9V618.6M564.1,622.9V616.6M565.9,622.9V618.5M567.6,622.9V616.2M583.6,622.9V619.1M587.1,622.9V614.6M599.5,622.9V618.6M601.3,622.9V619.0M604.8,622.9V616.8M606.6,622.9V618.5M619.0,622.9V616.7M620.7,622.9V615.3M624.3,622.9V619.0M626.0,622.9V615.2M627.8,622.9V616.9M638.4,622.9V613.3M640.2,622.9V613.2M642.0,622.9V617.5M656.1,622.9V614.9M657.9,622.9V615.7M659.7,622.9V617.9M661.4,622.9V618.2M663.2,622.9V617.9M666.8,622.9V618.8M668.5,622.9V618.4M679.1,622.9V616.0M680.9,622.9V614.6M691.5,622.9V612.9M696.8,622.9V617.4M698.6,622.9V617.0M703.9,622.9V617.4M705.7,622.9V614.4M709.2,622.9V614.2M711.0,622.9V613.6M712.8,622.9V616.3M714.5,622.9V616.6M716.3,622.9V616.0M725.2,622.9V616.2M726.9,622.9V611.7M730.5,622.9V618.5M737.5,622.9V617.1M744.6,622.9V618.3M748.2,622.9V616.0M749.9,622.9V618.0M751.7,622.9V614.6M755.2,622.9V617.5M757.0,622.9V616.7M760.6,622.9V619.0M762.3,622.9V614.1M764.1,622.9V616.9M767.6,622.9V615.7M769.4,622.9V615.3M776.5,622.9V616.2M778.3,622.9V615.2M785.3,622.9V616.2M787.1,622.9V615.2M796.0,622.9V612.0M803.0,622.9V617.8M806.6,622.9V617.9M808.4,622.9V616.7M811.9,622.9V616.3M817.2,622.9V611.6M819.0,622.9V615.7M820.7,622.9V609.0M822.5,622.9V614.4M829.6,622.9V613.4M831.4,622.9V613.3M833.1,622.9V611.8M834.9,622.9V618.0M836.7,622.9V618.6M842.0,622.9V618.1M843.8,622.9V612.5M845.5,622.9V616.2M859.7,622.9V617.1M861.5,622.9V618.3M863.2,622.9V618.7M865.0,622.9V614.9M866.8,622.9V619.0M875.6,622.9V614.5M880.9,622.9V617.1M884.5,622.9V615.6M886.2,622.9V615.7M889.8,622.9V615.4M891.5,622.9V618.1M895.1,622.9V615.5M896.9,622.9V617.6M898.6,622.9V611.9M900.4,622.9V618.1M902.2,622.9V605.0M911.0,622.9V617.5M912.8,622.9V618.1M916.3,622.9V616.5M923.4,622.9V612.6M926.9,622.9V614.9M928.7,622.9V617.9M932.2,622.9V615.2M935.8,622.9V616.2M937.6,622.9V616.1M939.3,622.9V615.0M941.1,622.9V612.6M942.9,622.9V616.7M946.4,622.9V615.8M948.2,622.9V613.2M950.0,622.9V615.1M951.7,622.9V616.1M964.1,622.9V613.7M965.9,622.9V618.4M980.0,622.9V618.8M987.1,622.9V617.7M988.9,622.9V618.4M997.7,622.9V619.0M1003.0,622.9V618.7M1004.8,622.9V615.8M1011.9,622.9V617.0M1013.7,622.9V612.1M1015.4,622.9V614.2M1017.2,622.9V618.1M1022.5,622.9V618.4M1024.3,622.9V616.7M1026.1,622.9V618.4M1027.8,622.9V617.8M1029.6,622.9V614.8M1033.1,622.9V613.6M1034.9,622.9V618.9M1036.7,622.9V618.5M1045.5,622.9V610.9M1047.3,622.9V612.0M1049.1,622.9V614.8M1052.6,622.9V618.7M1054.4,622.9V611.5M1059.7,622.9V611.1M1061.5,622.9V618.6M1066.8,622.9V619.0M1070.3,622.9V614.0M1073.8,622.9V618.3M1075.6,622.9V618.6M1079.2,622.9V616.6M1080.9,622.9V615.4M1088.0,622.9V616.6M1093.3,622.9V614.9" stroke="#b83c48" stroke-width="1.2" fill="none"/>
<path d="M3.0,672.7V672.3M17.2,672.7V671.5M18.9,672.7V670.9M20.7,672.7V670.3M22.5,672.7V669.7M24.2,672.7V669.2M26.0,672.7V668.9M27.8,672.7V669.4M29.6,672.7V670.5M31.3,672.7V671.3M33.1,672.7V671.9M49.0,672.7V671.9M50.8,672.7V670.4M52.6,672.7V669.1M54.3,672.7V668.3M56.1,672.7V667.8M57.9,672.7V667.3M59.6,672.7V667.0M61.4,672.7V667.9M63.2,672.7V668.8M65.0,672.7V669.6M66.7,672.7V670.2M68.5,672.7V670.3M70.3,672.7V670.5M72.0,672.7V670.5M73.8,672.7V670.4M75.6,672.7V670.0M77.3,672.7V669.6M79.1,672.7V669.8M80.9,672.7V670.7M82.7,672.7V671.4M84.4,672.7V671.6M86.2,672.7V671.5M88.0,672.7V671.5M89.7,672.7V670.9M91.5,672.7V670.3M93.3,672.7V669.9M95.0,672.7V669.9M96.8,672.7V670.0M98.6,672.7V670.0M100.3,672.7V670.1M102.1,672.7V670.4M103.9,672.7V670.6M105.7,672.7V670.8M107.4,672.7V672.1M180.0,672.7V672.3M181.8,672.7V672.2M183.5,672.7V672.0M185.3,672.7V671.4M187.1,672.7V670.9M188.8,672.7V670.6M190.6,672.7V670.7M192.4,672.7V670.7M194.2,672.7V670.2M195.9,672.7V669.1M197.7,672.7V668.3M199.5,672.7V667.6M201.2,672.7V667.1M203.0,672.7V666.6M204.8,672.7V666.5M206.6,672.7V666.5M208.3,672.7V666.5M210.1,672.7V667.5M211.9,672.7V668.4M213.6,672.7V670.2M215.4,672.7V671.6M243.7,672.7V672.3M245.5,672.7V672.1M247.3,672.7V671.8M249.0,672.7V671.0M250.8,672.7V670.4M252.6,672.7V670.0M254.3,672.7V669.8M256.1,672.7V671.0M265.0,672.7V671.4M266.7,672.7V668.5M268.5,672.7V665.0M270.3,672.7V662.7M272.0,672.7V663.6M273.8,672.7V664.3M275.6,672.7V665.4M277.4,672.7V667.3M279.1,672.7V668.8M280.9,672.7V670.2M282.7,672.7V671.3M284.4,672.7V672.3M293.3,672.7V672.1M295.1,672.7V671.7M296.8,672.7V671.2M298.6,672.7V670.8M300.4,672.7V670.7M302.1,672.7V671.4M303.9,672.7V671.9M328.7,672.7V671.3M330.4,672.7V669.7M332.2,672.7V668.4M334.0,672.7V667.6M335.8,672.7V667.4M337.5,672.7V667.3M339.3,672.7V667.6M341.1,672.7V668.2M342.8,672.7V668.7M344.6,672.7V669.1M346.4,672.7V669.4M348.1,672.7V669.6M349.9,672.7V670.4M351.7,672.7V671.1M372.9,672.7V672.1M374.7,672.7V671.0M376.5,672.7V670.6M378.2,672.7V670.3M380.0,672.7V671.6M424.3,672.7V672.1M426.0,672.7V671.3M427.8,672.7V670.6M429.6,672.7V670.1M431.3,672.7V669.5M433.1,672.7V668.9M434.9,672.7V668.4M436.6,672.7V668.1M438.4,672.7V668.0M440.2,672.7V669.0M442.0,672.7V670.9M465.0,672.7V671.9M466.7,672.7V671.1M468.5,672.7V670.4M470.3,672.7V669.4M472.1,672.7V668.7M473.8,672.7V668.3M475.6,672.7V668.8M477.4,672.7V669.8M479.1,672.7V671.5M480.9,672.7V672.2M482.7,672.7V672.1M484.4,672.7V672.0M486.2,672.7V671.6M488.0,672.7V671.1M489.8,672.7V670.7M491.5,672.7V670.6M493.3,672.7V670.5M495.1,672.7V670.5M496.8,672.7V670.9M498.6,672.7V671.3M500.4,672.7V671.5M502.1,672.7V671.5M503.9,672.7V671.4M505.7,672.7V671.4M507.4,672.7V671.5M509.2,672.7V671.5M511.0,672.7V671.6M512.8,672.7V671.6M514.5,672.7V671.8M542.9,672.7V671.1M544.6,672.7V667.9M546.4,672.7V664.7M548.2,672.7V662.0M549.9,672.7V660.6M551.7,672.7V659.6M553.5,672.7V660.1M555.2,672.7V660.6M557.0,672.7V661.9M558.8,672.7V662.9M560.5,672.7V664.0M562.3,672.7V665.5M564.1,672.7V666.6M565.9,672.7V667.6M567.6,672.7V668.4M569.4,672.7V669.1M571.2,672.7V669.5M572.9,672.7V669.9M574.7,672.7V670.2M576.5,672.7V669.4M578.2,672.7V668.7M580.0,672.7V668.1M581.8,672.7V668.4M583.6,672.7V668.6M585.3,672.7V668.7M587.1,672.7V668.8M588.9,672.7V668.8M590.6,672.7V668.7M592.4,672.7V668.6M594.2,672.7V668.5M596.0,672.7V668.3M597.7,672.7V669.0M638.4,672.7V671.8M640.2,672.7V670.9M642.0,672.7V670.2M643.7,672.7V669.3M645.5,672.7V668.5M647.3,672.7V667.6M649.0,672.7V666.3M650.8,672.7V665.2M652.6,672.7V664.6M654.4,672.7V664.3M656.1,672.7V664.1M657.9,672.7V665.2M659.7,672.7V666.7M661.4,672.7V668.3M663.2,672.7V669.6M665.0,672.7V670.7M666.8,672.7V672.2M734.0,672.7V671.7M735.8,672.7V670.4M737.5,672.7V668.7M739.3,672.7V667.0M741.1,672.7V665.4M742.9,672.7V664.9M744.6,672.7V665.1M746.4,672.7V666.3M748.2,672.7V667.6M749.9,672.7V669.5M751.7,672.7V671.1M753.5,672.7V671.8M785.3,672.7V671.1M787.1,672.7V670.0M788.9,672.7V669.6M790.6,672.7V670.2M792.4,672.7V670.7M794.2,672.7V670.8M796.0,672.7V670.5M797.7,672.7V670.3M799.5,672.7V670.4M801.3,672.7V670.6M803.0,672.7V670.7M804.8,672.7V671.9M824.3,672.7V671.3M826.0,672.7V668.6M827.8,672.7V666.3M829.6,672.7V664.4M831.4,672.7V663.9M833.1,672.7V665.3M834.9,672.7V667.5M836.7,672.7V670.4M838.4,672.7V671.8M850.8,672.7V669.8M852.6,672.7V666.1M854.4,672.7V663.3M856.1,672.7V661.6M857.9,672.7V660.8M859.7,672.7V661.1M861.5,672.7V661.8M863.2,672.7V663.0M865.0,672.7V664.6M866.8,672.7V666.5M868.5,672.7V668.6M870.3,672.7V670.5M872.1,672.7V672.0M919.9,672.7V670.6M921.6,672.7V669.5M923.4,672.7V668.7M925.2,672.7V668.8M926.9,672.7V669.1M928.7,672.7V670.5M930.5,672.7V671.3M932.2,672.7V670.9M934.0,672.7V670.4M935.8,672.7V669.9M937.6,672.7V670.4M939.3,672.7V671.9M958.8,672.7V671.6M960.6,672.7V670.9M962.3,672.7V670.3M964.1,672.7V669.9M965.9,672.7V669.5M967.6,672.7V669.2M969.4,672.7V668.9M971.2,672.7V668.7M973.0,672.7V665.6M974.7,672.7V661.7M976.5,672.7V658.0M978.3,672.7V655.5M980.0,672.7V654.6M981.8,672.7V655.4M983.6,672.7V656.6M985.4,672.7V658.1M987.1,672.7V660.2M988.9,672.7V662.3M990.7,672.7V664.1M992.4,672.7V665.6M994.2,672.7V666.8M996.0,672.7V667.5M997.7,672.7V668.3M999.5,672.7V669.4M1001.3,672.7V670.6M1003.0,672.7V672.2M1056.2,672.7V672.0M1057.9,672.7V671.4M1059.7,672.7V671.2M1061.5,672.7V671.2M1063.2,672.7V671.2M1065.0,672.7V671.1M1066.8,672.7V671.1M1068.5,672.7V671.9M1070.3,672.7V672.1M1072.1,672.7V670.8M1073.8,672.7V670.2M1075.6,672.7V670.7M1077.4,672.7V671.5M1086.2,672.7V671.0M1088.0,672.7V668.8M1089.8,672.7V667.1M1091.5,672.7V666.1M1093.3,672.7V665.9" stroke="#62d862" stroke-width="1.05" fill="none"/>
<path d="M8.3,672.7V673.1M10.1,672.7V673.3M11.8,672.7V673.5M13.6,672.7V673.4M38.4,672.7V673.1M40.2,672.7V673.3M41.9,672.7V673.1M109.2,672.7V673.4M111.0,672.7V674.6M112.7,672.7V675.6M114.5,672.7V676.5M116.3,672.7V677.1M118.0,672.7V677.7M119.8,672.7V678.1M121.6,672.7V678.4M123.4,672.7V678.7M125.1,672.7V678.9M126.9,672.7V679.1M128.7,672.7V679.2M130.4,672.7V679.3M132.2,672.7V679.2M134.0,672.7V679.1M135.8,672.7V678.9M137.5,672.7V678.6M139.3,672.7V678.4M141.1,672.7V677.9M142.8,672.7V677.4M144.6,672.7V676.9M146.4,672.7V676.6M148.1,672.7V676.1M149.9,672.7V675.6M151.7,672.7V675.3M153.4,672.7V675.0M155.2,672.7V675.0M157.0,672.7V675.0M158.8,672.7V675.1M160.5,672.7V675.1M162.3,672.7V675.1M164.1,672.7V675.1M165.8,672.7V675.1M167.6,672.7V675.2M169.4,672.7V675.2M171.2,672.7V675.3M172.9,672.7V675.4M174.7,672.7V674.4M176.5,672.7V673.3M218.9,672.7V674.3M220.7,672.7V675.4M222.5,672.7V676.0M224.2,672.7V676.3M226.0,672.7V676.5M227.8,672.7V676.7M229.6,672.7V676.9M231.3,672.7V677.0M233.1,672.7V676.1M234.9,672.7V675.2M236.6,672.7V674.4M238.4,672.7V673.6M240.2,672.7V673.1M259.6,672.7V673.8M261.4,672.7V674.3M263.2,672.7V674.7M288.0,672.7V673.1M289.7,672.7V673.3M307.4,672.7V673.2M309.2,672.7V673.8M311.0,672.7V674.0M312.8,672.7V674.1M314.5,672.7V674.1M316.3,672.7V674.0M318.1,672.7V673.9M319.8,672.7V673.8M321.6,672.7V673.8M323.4,672.7V673.8M325.1,672.7V673.7M355.2,672.7V674.3M357.0,672.7V675.4M358.8,672.7V676.3M360.5,672.7V676.8M362.3,672.7V676.9M364.1,672.7V677.0M365.9,672.7V676.5M367.6,672.7V675.6M369.4,672.7V674.8M371.2,672.7V673.5M383.6,672.7V674.0M385.3,672.7V676.3M387.1,672.7V677.0M388.9,672.7V677.5M390.6,672.7V678.1M392.4,672.7V679.0M394.2,672.7V679.6M395.9,672.7V680.0M397.7,672.7V680.1M399.5,672.7V680.2M401.2,672.7V680.2M403.0,672.7V680.3M404.8,672.7V680.3M406.6,672.7V679.9M408.3,672.7V679.6M410.1,672.7V679.3M411.9,672.7V678.7M413.6,672.7V678.1M415.4,672.7V677.5M417.2,672.7V676.3M418.9,672.7V675.4M420.7,672.7V674.4M422.5,672.7V673.1M445.5,672.7V674.8M447.3,672.7V676.6M449.0,672.7V677.5M450.8,672.7V677.5M452.6,672.7V677.4M454.4,672.7V677.0M456.1,672.7V676.3M457.9,672.7V675.8M459.7,672.7V674.7M461.4,672.7V673.7M516.3,672.7V673.1M518.1,672.7V674.2M519.8,672.7V675.1M521.6,672.7V675.7M523.4,672.7V676.3M525.1,672.7V677.0M526.9,672.7V677.5M528.7,672.7V677.8M530.5,672.7V677.5M532.2,672.7V677.5M534.0,672.7V677.9M535.8,672.7V677.9M537.5,672.7V677.3M539.3,672.7V675.9M541.1,672.7V674.1M601.3,672.7V676.3M603.0,672.7V679.8M604.8,672.7V681.4M606.6,672.7V682.5M608.3,672.7V681.9M610.1,672.7V680.1M611.9,672.7V677.2M613.6,672.7V675.0M615.4,672.7V674.0M617.2,672.7V673.1M619.0,672.7V674.0M620.7,672.7V674.8M622.5,672.7V676.3M624.3,672.7V678.3M626.0,672.7V679.9M627.8,672.7V680.2M629.6,672.7V680.5M631.4,672.7V679.1M633.1,672.7V677.5M634.9,672.7V675.2M636.7,672.7V673.2M668.5,672.7V673.5M670.3,672.7V674.3M672.1,672.7V674.6M673.8,672.7V674.8M675.6,672.7V675.1M677.4,672.7V675.8M679.1,672.7V676.3M680.9,672.7V676.4M682.7,672.7V676.1M684.5,672.7V675.9M686.2,672.7V675.9M688.0,672.7V675.9M689.8,672.7V675.9M691.5,672.7V675.6M693.3,672.7V675.3M695.1,672.7V675.1M696.8,672.7V676.0M698.6,672.7V676.8M700.4,672.7V677.7M702.1,672.7V679.6M703.9,672.7V680.9M705.7,672.7V681.8M707.5,672.7V682.1M709.2,672.7V682.0M711.0,672.7V682.1M712.8,672.7V682.3M714.5,672.7V682.3M716.3,672.7V682.2M718.1,672.7V681.5M719.9,672.7V680.8M721.6,672.7V679.0M723.4,672.7V677.6M725.2,672.7V676.4M726.9,672.7V675.4M728.7,672.7V674.6M730.5,672.7V673.7M760.6,672.7V674.7M762.3,672.7V677.3M764.1,672.7V679.3M765.9,672.7V679.9M767.6,672.7V680.3M769.4,672.7V680.1M771.2,672.7V679.5M773.0,672.7V679.1M774.7,672.7V678.5M776.5,672.7V677.9M778.3,672.7V677.4M780.0,672.7V676.8M781.8,672.7V676.1M783.6,672.7V673.3M808.4,672.7V673.8M810.1,672.7V673.9M811.9,672.7V673.9M813.7,672.7V673.8M820.7,672.7V673.3M822.5,672.7V674.1M842.0,672.7V673.3M843.8,672.7V676.5M845.5,672.7V678.5M847.3,672.7V678.7M849.1,672.7V673.8M873.8,672.7V673.1M875.6,672.7V673.9M877.4,672.7V674.4M879.1,672.7V674.6M880.9,672.7V674.7M882.7,672.7V675.0M884.5,672.7V675.5M886.2,672.7V675.9M888.0,672.7V676.5M889.8,672.7V677.2M891.5,672.7V677.7M893.3,672.7V678.3M895.1,672.7V678.8M896.9,672.7V679.9M898.6,672.7V681.3M900.4,672.7V683.7M902.2,672.7V686.3M903.9,672.7V688.1M905.7,672.7V686.9M907.5,672.7V684.8M909.2,672.7V681.8M911.0,672.7V679.2M912.8,672.7V677.1M914.5,672.7V675.8M916.3,672.7V674.9M942.9,672.7V673.5M944.6,672.7V673.2M948.2,672.7V673.4M950.0,672.7V674.1M951.7,672.7V674.7M953.5,672.7V675.1M955.3,672.7V674.1M1004.8,672.7V673.4M1011.9,672.7V674.3M1013.7,672.7V675.9M1015.4,672.7V677.7M1017.2,672.7V678.5M1019.0,672.7V678.9M1020.8,672.7V679.6M1022.5,672.7V680.6M1024.3,672.7V681.6M1026.1,672.7V682.6M1027.8,672.7V683.8M1029.6,672.7V684.9M1031.4,672.7V685.4M1033.1,672.7V685.7M1034.9,672.7V685.5M1036.7,672.7V685.3M1038.5,672.7V685.1M1040.2,672.7V683.5M1042.0,672.7V681.0M1043.8,672.7V678.6M1045.5,672.7V676.4M1047.3,672.7V675.6M1049.1,672.7V675.2M1050.8,672.7V674.6M1052.6,672.7V673.6M1080.9,672.7V673.9M1082.7,672.7V675.1" stroke="#e46e6e" stroke-width="1.05" fill="none"/>
<path d="M3,672.3 L4.8,672.5 L6.5,672.8 L6.5,672.7 L4.8,672.7 L3,672.7ZM13.6,674.1 L15.4,673 L17.2,671.8 L18.9,670.7 L20.7,669.5 L22.5,668.2 L24.2,666.8 L26,665.5 L27.8,665.3 L29.6,665.7 L31.3,666.2 L33.1,666.6 L34.9,667.1 L36.6,667.5 L36.6,667.4 L34.9,667.4 L33.1,667.4 L31.3,667.6 L29.6,668 L27.8,668.5 L26,669.3 L24.2,670.3 L22.5,671.2 L20.7,671.9 L18.9,672.5 L17.2,673 L15.4,673.3 L13.6,673.4ZM45.5,667.9 L47.2,667.8 L49,666.8 L50.8,664.7 L52.6,662.6 L54.3,660.7 L56.1,658.9 L57.9,657.1 L59.6,655.4 L61.4,655 L63.2,655 L65,655 L66.7,655 L68.5,654.5 L70.3,654.1 L72,653.6 L73.8,653 L75.6,651.8 L77.3,650.6 L79.1,650.2 L80.9,650.5 L82.7,650.9 L84.4,650.8 L86.2,650.4 L88,650.1 L89.7,649.1 L91.5,647.9 L93.3,646.7 L95,646.1 L96.8,645.4 L98.6,644.8 L100.3,644.2 L102.1,643.9 L103.9,643.7 L105.7,643.4 L107.4,644.5 L109.2,646 L109.2,645.3 L107.4,645.1 L105.7,645.3 L103.9,645.7 L102.1,646.3 L100.3,646.9 L98.6,647.5 L96.8,648.2 L95,648.9 L93.3,649.6 L91.5,650.3 L89.7,650.9 L88,651.3 L86.2,651.6 L84.4,651.9 L82.7,652.2 L80.9,652.5 L79.1,653 L77.3,653.8 L75.6,654.5 L73.8,655.2 L72,655.8 L70.3,656.3 L68.5,656.9 L66.7,657.5 L65,658.1 L63.2,658.9 L61.4,659.8 L59.6,661.1 L57.9,662.5 L56.1,663.8 L54.3,665.1 L52.6,666.1 L50.8,667 L49,667.6 L47.2,667.8 L45.5,667.8ZM176.5,683.3 L178.2,682.3 L180,682.1 L181.8,681.9 L183.5,681.6 L185.3,680.6 L187.1,679.7 L188.8,678.9 L190.6,678.4 L192.4,677.9 L194.2,676.8 L195.9,674.9 L197.7,672.9 L199.5,671 L201.2,669 L203,667 L204.8,665.4 L206.6,663.8 L208.3,662.3 L210.1,662 L211.9,661.8 L213.6,663 L215.4,664.1 L217.2,665.5 L217.2,665.3 L215.4,665.2 L213.6,665.5 L211.9,666.1 L210.1,667.2 L208.3,668.5 L206.6,670 L204.8,671.6 L203,673.1 L201.2,674.6 L199.5,676.1 L197.7,677.3 L195.9,678.4 L194.2,679.3 L192.4,679.9 L190.6,680.4 L188.8,680.9 L187.1,681.5 L185.3,681.9 L183.5,682.2 L181.8,682.4 L180,682.5 L178.2,682.7 L176.5,682.7ZM240.2,674.7 L241.9,674.2 L243.7,673.9 L245.5,673.5 L247.3,672.9 L249,671.8 L250.8,670.6 L252.6,669.6 L254.3,668.6 L256.1,669.3 L257.9,671 L259.6,672.5 L259.6,671.3 L257.9,671 L256.1,671.1 L254.3,671.5 L252.6,672.2 L250.8,672.9 L249,673.5 L247.3,673.9 L245.5,674.1 L243.7,674.3 L241.9,674.3 L240.2,674.4ZM263.2,674.2 L265,670.6 L266.7,666.6 L268.5,661.2 L270.3,656.5 L272,655.1 L273.8,653.7 L275.6,652.9 L277.4,653.5 L279.1,654 L280.9,654.7 L282.7,655.6 L284.4,656.4 L286.2,656.9 L286.2,656.9 L284.4,656.8 L282.7,656.9 L280.9,657.3 L279.1,657.9 L277.4,658.9 L275.6,660.2 L273.8,662.1 L272,664.2 L270.3,666.4 L268.5,668.9 L266.7,670.8 L265,671.9 L263.2,672.2ZM291.5,657.1 L293.3,656.4 L295.1,655.7 L296.8,654.8 L298.6,654 L300.4,653.4 L302.1,653.7 L303.9,654.1 L305.7,654.6 L307.4,655.5 L307.4,654.9 L305.7,654.8 L303.9,654.8 L302.1,655 L300.4,655.4 L298.6,655.8 L296.8,656.3 L295.1,656.7 L293.3,656.9 L291.5,657.1ZM325.1,658.9 L326.9,657.7 L328.7,656.2 L330.4,653.8 L332.2,651.4 L334,649.4 L335.8,647.9 L337.5,646.4 L339.3,645.4 L341.1,644.9 L342.8,644.4 L344.6,643.9 L346.4,643.3 L348.1,642.7 L349.9,643 L351.7,643.3 L353.5,645.1 L353.5,644.9 L351.7,644.9 L349.9,645.3 L348.1,645.9 L346.4,646.7 L344.6,647.5 L342.8,648.4 L341.1,649.4 L339.3,650.5 L337.5,651.8 L335.8,653.1 L334,654.5 L332.2,655.7 L330.4,656.8 L328.7,657.5 L326.9,657.9 L325.1,657.9ZM371.2,653.3 L372.9,651.8 L374.7,650.3 L376.5,649.2 L378.2,648.3 L380,649.5 L381.8,650.7 L381.8,650.5 L380,650.5 L378.2,650.8 L376.5,651.4 L374.7,651.9 L372.9,652.3 L371.2,652.5ZM422.5,681.7 L424.3,680.5 L426,679.3 L427.8,678.2 L429.6,677 L431.3,675.5 L433.1,674 L434.9,672.4 L436.6,671 L438.4,669.7 L440.2,669.7 L442,671.2 L443.7,673 L445.5,675.7 L445.5,673.5 L443.7,673 L442,673 L440.2,673.5 L438.4,674.4 L436.6,675.6 L434.9,676.7 L433.1,677.8 L431.3,678.8 L429.6,679.6 L427.8,680.2 L426,680.7 L424.3,681.1 L422.5,681.3ZM463.2,681.7 L465,680.6 L466.7,679.4 L468.5,678.1 L470.3,676.3 L472.1,674.5 L473.8,673.1 L475.6,672.6 L477.4,672.8 L479.1,674.3 L480.9,674.9 L482.7,674.6 L484.4,674.4 L486.2,673.7 L488,672.8 L489.8,671.8 L491.5,671.2 L493.3,670.6 L495.1,670 L496.8,670 L498.6,670 L500.4,669.9 L502.1,669.6 L503.9,669.2 L505.7,668.9 L507.4,668.7 L509.2,668.4 L511,668.2 L512.8,667.9 L514.5,667.9 L516.3,669.4 L516.3,668.9 L514.5,668.8 L512.8,669 L511,669.3 L509.2,669.6 L507.4,669.9 L505.7,670.2 L503.9,670.5 L502.1,670.8 L500.4,671.1 L498.6,671.4 L496.8,671.8 L495.1,672.2 L493.3,672.8 L491.5,673.3 L489.8,673.9 L488,674.4 L486.2,674.8 L484.4,675 L482.7,675.2 L480.9,675.4 L479.1,675.5 L477.4,675.8 L475.6,676.5 L473.8,677.5 L472.1,678.6 L470.3,679.6 L468.5,680.4 L466.7,681 L465,681.4 L463.2,681.6ZM541.1,683.8 L542.9,680.4 L544.6,676 L546.4,670.8 L548.2,665.4 L549.9,661 L551.7,656.7 L553.5,654 L555.2,651.5 L557,650.1 L558.8,648.7 L560.5,647.6 L562.3,647.2 L564.1,646.9 L565.9,646.6 L567.6,646.3 L569.4,646.1 L571.2,645.8 L572.9,645.4 L574.7,645.1 L576.5,643.5 L578.2,641.8 L580,640 L581.8,639.2 L583.6,638.4 L585.3,637.5 L587.1,636.6 L588.9,635.6 L590.6,634.6 L592.4,633.4 L594.2,632.2 L596,631 L597.7,630.8 L599.5,634.1 L601.3,638.8 L601.3,635.3 L599.5,634.4 L597.7,634.4 L596,635.4 L594.2,636.5 L592.4,637.5 L590.6,638.5 L588.9,639.5 L587.1,640.5 L585.3,641.5 L583.6,642.5 L581.8,643.5 L580,644.6 L578.2,645.8 L576.5,646.8 L574.7,647.6 L572.9,648.2 L571.2,648.9 L569.4,649.7 L567.6,650.6 L565.9,651.7 L564.1,653 L562.3,654.5 L560.5,656.3 L558.8,658.5 L557,660.9 L555.2,663.6 L553.5,666.7 L551.7,669.8 L549.9,673.1 L548.2,676.1 L546.4,678.8 L544.6,680.8 L542.9,682 L541.1,682.4ZM636.7,660.7 L638.4,659.2 L640.2,657.8 L642,656.4 L643.7,654.7 L645.5,652.9 L647.3,650.7 L649,647.8 L650.8,644.8 L652.6,642.1 L654.4,639.8 L656.1,637.5 L657.9,636.7 L659.7,636.7 L661.4,637.2 L663.2,637.7 L665,638.3 L666.8,639.7 L668.5,641.1 L668.5,640.4 L666.8,640.2 L665,640.3 L663.2,640.8 L661.4,641.6 L659.7,642.7 L657.9,644.2 L656.1,646 L654.4,648.2 L652.6,650.3 L650.8,652.3 L649,654.2 L647.3,655.8 L645.5,657.1 L643.7,658.1 L642,659 L640.2,659.6 L638.4,660 L636.7,660.2ZM730.5,684.7 L732.2,683.5 L734,682.4 L735.8,680.5 L737.5,677.8 L739.3,674.7 L741.1,671.2 L742.9,668.8 L744.6,667.1 L746.4,666.7 L748.2,666.7 L749.9,667.8 L751.7,669 L753.5,669.5 L755.2,670 L757,670 L758.8,670 L760.6,672.7 L760.6,670.7 L758.8,670.2 L757,670.3 L755.2,670.3 L753.5,670.4 L751.7,670.6 L749.9,671 L748.2,671.8 L746.4,673.1 L744.6,674.7 L742.9,676.6 L741.1,678.5 L739.3,680.4 L737.5,681.8 L735.8,682.8 L734,683.4 L732.2,683.6 L730.5,683.7ZM783.6,688.9 L785.3,686.3 L787.1,684.5 L788.9,683.3 L790.6,683.3 L792.4,683.3 L794.2,682.9 L796,682.1 L797.7,681.3 L799.5,680.8 L801.3,680.4 L803,680.1 L804.8,681 L806.6,682.2 L806.6,681.9 L804.8,681.8 L803,682.1 L801.3,682.6 L799.5,683.1 L797.7,683.7 L796,684.3 L794.2,684.8 L792.4,685.3 L790.6,685.8 L788.9,686.4 L787.1,687.2 L785.3,687.9 L783.6,688.3ZM815.4,683.4 L817.2,682.7 L819,682.7 L820.7,683.8 L820.7,683.2 L819,683 L817.2,683.1 L815.4,683.1ZM822.5,684.9 L824.3,681.7 L826,678 L827.8,674.2 L829.6,670.2 L831.4,667.5 L833.1,667 L834.9,667.9 L836.7,670.2 L838.4,671.3 L840.2,671.9 L842,673 L842,672.3 L840.2,672.2 L838.4,672.3 L836.7,672.5 L834.9,673.1 L833.1,674.4 L831.4,676.3 L829.6,678.5 L827.8,680.5 L826,682.1 L824.3,683.1 L822.5,683.5ZM849.1,677.6 L850.8,672.9 L852.6,667.5 L854.4,662.4 L856.1,657.9 L857.9,654.1 L859.7,651.5 L861.5,649.5 L863.2,648.2 L865,647.9 L866.8,648.2 L868.5,649.3 L870.3,650.6 L872.1,651.9 L873.8,653.1 L873.8,652.7 L872.1,652.6 L870.3,652.8 L868.5,653.4 L866.8,654.4 L865,656 L863.2,658 L861.5,660.4 L859.7,663.1 L857.9,666 L856.1,669 L854.4,671.8 L852.6,674.2 L850.8,675.8 L849.1,676.5ZM918.1,689.6 L919.9,686.9 L921.6,685 L923.4,683.3 L925.2,682.4 L926.9,681.8 L928.7,682.7 L930.5,683.1 L932.2,682.2 L934,681.2 L935.8,679.9 L937.6,679.9 L939.3,681.2 L941.1,682.2 L941.1,682 L939.3,682 L937.6,682.2 L935.8,682.8 L934,683.5 L932.2,684 L930.5,684.5 L928.7,684.8 L926.9,685.4 L925.2,686.3 L923.4,687.2 L921.6,688.2 L919.9,689 L918.1,689.6ZM955.3,685.7 L957,684.3 L958.8,683 L960.6,681.8 L962.3,680.6 L964.1,679.5 L965.9,678.3 L967.6,677.1 L969.4,675.9 L971.2,674.7 L973,669.8 L974.7,663.2 L976.5,655.8 L978.3,649 L980,643.5 L981.8,640.1 L983.6,637.2 L985.4,635.1 L987.1,634 L988.9,633.6 L990.7,633.2 L992.4,632.9 L994.2,632.6 L996,632.1 L997.7,631.8 L999.5,632.1 L1001.3,632.8 L1003,634.2 L1004.8,635.6 L1004.8,634.9 L1003,634.7 L1001.3,634.8 L999.5,635.3 L997.7,636.2 L996,637.3 L994.2,638.5 L992.4,640 L990.7,641.8 L988.9,643.9 L987.1,646.5 L985.4,649.7 L983.6,653.3 L981.8,657.3 L980,661.7 L978.3,666.2 L976.5,670.5 L974.7,674.2 L973,676.9 L971.2,678.7 L969.4,679.7 L967.6,680.6 L965.9,681.5 L964.1,682.3 L962.3,683 L960.6,683.6 L958.8,684.1 L957,684.3 L955.3,684.3ZM1006.6,635.2 L1008.4,634.6 L1010.1,635.1 L1010.1,634.9 L1008.4,634.9 L1006.6,634.9ZM1054.4,679.8 L1056.2,678.8 L1057.9,677.9 L1059.7,677.4 L1061.5,677 L1063.2,676.6 L1065,676.1 L1066.8,675.7 L1068.5,676.3 L1070.3,676.4 L1072.1,674.6 L1073.8,673.3 L1075.6,673.3 L1077.4,673.8 L1079.2,675.1 L1079.2,675 L1077.4,675 L1075.6,675.3 L1073.8,675.8 L1072.1,676.5 L1070.3,677 L1068.5,677.1 L1066.8,677.3 L1065,677.7 L1063.2,678.1 L1061.5,678.5 L1059.7,678.8 L1057.9,679.2 L1056.2,679.5 L1054.4,679.7ZM1084.5,676.2 L1086.2,673.9 L1088,670.6 L1089.8,667.6 L1091.5,665 L1093.3,663 L1093.3,669.8 L1091.5,671.5 L1089.8,673.2 L1088,674.6 L1086.2,675.6 L1084.5,676Z" fill="#62dc62" fill-opacity="0.82"/>
<path d="M4.8,672.5 L6.5,672.8 L8.3,673.2 L10.1,673.6 L11.8,674 L13.6,674.1 L15.4,673 L15.4,673.3 L13.6,673.4 L11.8,673.2 L10.1,673 L8.3,672.8 L6.5,672.7 L4.8,672.7ZM34.9,667.1 L36.6,667.5 L38.4,667.9 L40.2,668.3 L41.9,668.2 L43.7,668 L45.5,667.9 L47.2,667.8 L47.2,667.8 L45.5,667.8 L43.7,667.8 L41.9,667.7 L40.2,667.6 L38.4,667.5 L36.6,667.4 L34.9,667.4ZM107.4,644.5 L109.2,646 L111,647.7 L112.7,649.4 L114.5,651.2 L116.3,653 L118,654.8 L119.8,656.5 L121.6,658.3 L123.4,660.1 L125.1,661.8 L126.9,663.6 L128.7,665.4 L130.4,667.1 L132.2,668.6 L134,670.1 L135.8,671.5 L137.5,672.7 L139.3,673.8 L141.1,674.7 L142.8,675.3 L144.6,675.9 L146.4,676.6 L148.1,676.9 L149.9,677.2 L151.7,677.5 L153.4,677.8 L155.2,678.4 L157,679 L158.8,679.6 L160.5,680.2 L162.3,680.8 L164.1,681.4 L165.8,682 L167.6,682.7 L169.4,683.4 L171.2,684.1 L172.9,684.8 L174.7,684.2 L176.5,683.3 L178.2,682.3 L178.2,682.7 L176.5,682.7 L174.7,682.6 L172.9,682.2 L171.2,681.5 L169.4,680.9 L167.6,680.2 L165.8,679.6 L164.1,679 L162.3,678.4 L160.5,677.8 L158.8,677.2 L157,676.6 L155.2,676 L153.4,675.5 L151.7,674.9 L149.9,674.3 L148.1,673.5 L146.4,672.7 L144.6,671.7 L142.8,670.6 L141.1,669.5 L139.3,668.2 L137.5,666.8 L135.8,665.3 L134,663.7 L132.2,662.1 L130.4,660.5 L128.7,658.8 L126.9,657.2 L125.1,655.6 L123.4,654.1 L121.6,652.6 L119.8,651.1 L118,649.8 L116.3,648.6 L114.5,647.4 L112.7,646.5 L111,645.8 L109.2,645.3 L107.4,645.1ZM215.4,664.1 L217.2,665.5 L218.9,667.2 L220.7,669 L222.5,670.5 L224.2,671.7 L226,672.9 L227.8,674 L229.6,675.2 L231.3,676.4 L233.1,676.4 L234.9,676.1 L236.6,675.7 L238.4,675.2 L240.2,674.7 L241.9,674.2 L241.9,674.3 L240.2,674.4 L238.4,674.3 L236.6,674 L234.9,673.6 L233.1,673 L231.3,672.1 L229.6,671.1 L227.8,670 L226,669 L224.2,668.1 L222.5,667.2 L220.7,666.3 L218.9,665.7 L217.2,665.3 L215.4,665.2ZM257.9,671 L259.6,672.5 L261.4,673.4 L263.2,674.2 L265,670.6 L265,671.9 L263.2,672.2 L261.4,671.7 L259.6,671.3 L257.9,671ZM284.4,656.4 L286.2,656.9 L288,657.3 L289.7,657.6 L291.5,657.1 L293.3,656.4 L293.3,656.9 L291.5,657.1 L289.7,657.1 L288,656.9 L286.2,656.9 L284.4,656.8ZM305.7,654.6 L307.4,655.5 L309.2,656.3 L311,656.9 L312.8,657.2 L314.5,657.6 L316.3,657.9 L318.1,658.1 L319.8,658.3 L321.6,658.5 L323.4,658.8 L325.1,658.9 L326.9,657.7 L326.9,657.9 L325.1,657.9 L323.4,657.7 L321.6,657.4 L319.8,657.1 L318.1,656.9 L316.3,656.6 L314.5,656.2 L312.8,655.9 L311,655.5 L309.2,655.2 L307.4,654.9 L305.7,654.8ZM351.7,643.3 L353.5,645.1 L355.2,646.9 L357,648.7 L358.8,650.5 L360.5,652.1 L362.3,653.2 L364.1,654.4 L365.9,654.9 L367.6,654.6 L369.4,654.4 L371.2,653.3 L372.9,651.8 L372.9,652.3 L371.2,652.5 L369.4,652.3 L367.6,651.8 L365.9,651 L364.1,650.1 L362.3,649 L360.5,647.9 L358.8,646.9 L357,646 L355.2,645.3 L353.5,644.9 L351.7,644.9ZM380,649.5 L381.8,650.7 L383.6,652.2 L385.3,655.3 L387.1,657.1 L388.9,658.9 L390.6,660.8 L392.4,663.2 L394.2,665.6 L395.9,667.8 L397.7,669.7 L399.5,671.7 L401.2,673.6 L403,675.6 L404.8,677.5 L406.6,678.9 L408.3,680.4 L410.1,681.7 L411.9,682.6 L413.6,683.4 L415.4,683.9 L417.2,683.7 L418.9,683.4 L420.7,682.8 L422.5,681.7 L424.3,680.5 L424.3,681.1 L422.5,681.3 L420.7,681.2 L418.9,680.7 L417.2,680.1 L415.4,679.1 L413.6,677.9 L411.9,676.6 L410.1,675.1 L408.3,673.4 L406.6,671.7 L404.8,669.9 L403,668 L401.2,666.1 L399.5,664.2 L397.7,662.3 L395.9,660.5 L394.2,658.7 L392.4,657 L390.6,655.4 L388.9,654 L387.1,652.8 L385.3,651.8 L383.6,650.9 L381.8,650.5 L380,650.5ZM443.7,673 L445.5,675.7 L447.3,678.4 L449,680.5 L450.8,681.7 L452.6,682.8 L454.4,683.4 L456.1,683.7 L457.9,683.9 L459.7,683.4 L461.4,682.6 L463.2,681.7 L465,680.6 L465,681.4 L463.2,681.6 L461.4,681.6 L459.7,681.3 L457.9,680.8 L456.1,680.1 L454.4,679.2 L452.6,678.1 L450.8,676.9 L449,675.7 L447.3,674.5 L445.5,673.5 L443.7,673ZM514.5,667.9 L516.3,669.4 L518.1,670.8 L519.8,672.2 L521.6,673.6 L523.4,675.1 L525.1,676.9 L526.9,678.6 L528.7,680.2 L530.5,681.1 L532.2,682.2 L534,684 L535.8,685.2 L537.5,685.8 L539.3,685.2 L541.1,683.8 L542.9,680.4 L542.9,682 L541.1,682.4 L539.3,682 L537.5,681.2 L535.8,680.1 L534,678.8 L532.2,677.5 L530.5,676.3 L528.7,675.1 L526.9,673.8 L525.1,672.6 L523.4,671.5 L521.6,670.6 L519.8,669.9 L518.1,669.3 L516.3,668.9 L514.5,668.8ZM599.5,634.1 L601.3,638.8 L603,644.2 L604.8,648 L606.6,651.4 L608.3,653.2 L610.1,653.2 L611.9,651.4 L613.6,649.9 L615.4,649.1 L617.2,648.3 L619,649.6 L620.7,651 L622.5,653.2 L624.3,656.7 L626,660 L627.8,662.3 L629.6,664.5 L631.4,664.7 L633.1,664.3 L634.9,662.6 L636.7,660.7 L638.4,659.2 L638.4,660 L636.7,660.2 L634.9,660.1 L633.1,659.5 L631.4,658.3 L629.6,656.7 L627.8,654.8 L626,652.9 L624.3,651.1 L622.5,649.7 L620.7,648.8 L619,648.3 L617.2,647.9 L615.4,647.8 L613.6,647.5 L611.9,646.9 L610.1,645.8 L608.3,644 L606.6,641.7 L604.8,639.2 L603,637 L601.3,635.3 L599.5,634.4ZM666.8,639.7 L668.5,641.1 L670.3,642.4 L672.1,643.1 L673.8,643.8 L675.6,644.8 L677.4,646.2 L679.1,647.6 L680.9,648.6 L682.7,649.2 L684.5,649.8 L686.2,650.6 L688,651.4 L689.8,652.2 L691.5,652.6 L693.3,653 L695.1,653.4 L696.8,655.1 L698.6,656.9 L700.4,659.1 L702.1,662.7 L703.9,666.1 L705.7,669.2 L707.5,671.9 L709.2,674.1 L711,676.5 L712.8,679.2 L714.5,681.6 L716.3,683.8 L718.1,685.3 L719.9,686.6 L721.6,686.5 L723.4,686.2 L725.2,686 L726.9,685.6 L728.7,685.3 L730.5,684.7 L732.2,683.5 L732.2,683.6 L730.5,683.7 L728.7,683.4 L726.9,682.9 L725.2,682.3 L723.4,681.3 L721.6,680.1 L719.9,678.5 L718.1,676.5 L716.3,674.3 L714.5,672 L712.8,669.6 L711,667.1 L709.2,664.8 L707.5,662.5 L705.7,660.1 L703.9,657.9 L702.1,655.8 L700.4,654.1 L698.6,652.8 L696.8,651.8 L695.1,651 L693.3,650.4 L691.5,649.7 L689.8,649 L688,648.2 L686.2,647.4 L684.5,646.6 L682.7,645.8 L680.9,644.9 L679.1,644 L677.4,643.1 L675.6,642.4 L673.8,641.8 L672.1,641.2 L670.3,640.8 L668.5,640.4 L666.8,640.2ZM758.8,670 L760.6,672.7 L762.3,676.4 L764.1,680.1 L765.9,682.5 L767.6,684.8 L769.4,686.4 L771.2,687.6 L773,688.8 L774.7,689.6 L776.5,690.3 L778.3,691 L780,691.4 L781.8,691.5 L783.6,688.9 L785.3,686.3 L785.3,687.9 L783.6,688.3 L781.8,688.1 L780,687.3 L778.3,686.3 L776.5,685.1 L774.7,683.8 L773,682.4 L771.2,680.8 L769.4,679.1 L767.6,677.2 L765.9,675.3 L764.1,673.5 L762.3,671.8 L760.6,670.7 L758.8,670.2ZM804.8,681 L806.6,682.2 L808.4,683.3 L810.1,683.7 L811.9,684 L813.7,684.2 L815.4,683.4 L817.2,682.7 L817.2,683.1 L815.4,683.1 L813.7,683.1 L811.9,682.8 L810.1,682.5 L808.4,682.2 L806.6,681.9 L804.8,681.8ZM819,682.7 L820.7,683.8 L822.5,684.9 L824.3,681.7 L824.3,683.1 L822.5,683.5 L820.7,683.2 L819,683ZM840.2,671.9 L842,673 L843.8,677.1 L845.5,680.5 L847.3,682.3 L849.1,677.6 L850.8,672.9 L850.8,675.8 L849.1,676.5 L847.3,676.3 L845.5,674.7 L843.8,673.3 L842,672.3 L840.2,672.2ZM872.1,651.9 L873.8,653.1 L875.6,654.3 L877.4,655.2 L879.1,655.8 L880.9,656.4 L882.7,657.4 L884.5,658.5 L886.2,659.7 L888,661.3 L889.8,663.1 L891.5,664.8 L893.3,666.9 L895.1,668.9 L896.9,671.7 L898.6,675.3 L900.4,680.5 L902.2,686.5 L903.9,692.1 L905.7,694.4 L907.5,695.4 L909.2,694.6 L911,693.7 L912.8,692.6 L914.5,692.1 L916.3,691.8 L918.1,689.6 L919.9,686.9 L919.9,689 L918.1,689.6 L916.3,689.6 L914.5,689 L912.8,688.3 L911,687.2 L909.2,685.5 L907.5,683.3 L905.7,680.3 L903.9,676.7 L902.2,672.9 L900.4,669.5 L898.6,666.7 L896.9,664.6 L895.1,662.8 L893.3,661.2 L891.5,659.8 L889.8,658.6 L888,657.5 L886.2,656.5 L884.5,655.7 L882.7,655 L880.9,654.4 L879.1,654 L877.4,653.5 L875.6,653 L873.8,652.7 L872.1,652.6ZM939.3,681.2 L941.1,682.2 L942.9,683.1 L944.6,682.9 L946.4,682.4 L948.2,683.2 L950,684.3 L951.7,685.3 L953.5,686.4 L955.3,685.7 L957,684.3 L957,684.3 L955.3,684.3 L953.5,684 L951.7,683.4 L950,682.9 L948.2,682.5 L946.4,682.4 L944.6,682.4 L942.9,682.3 L941.1,682 L939.3,682ZM1003,634.2 L1004.8,635.6 L1006.6,635.2 L1008.4,634.6 L1008.4,634.9 L1006.6,634.9 L1004.8,634.9 L1003,634.7ZM1008.4,634.6 L1010.1,635.1 L1011.9,636.9 L1013.7,639.3 L1015.4,642.3 L1017.2,644.6 L1019,646.6 L1020.8,649 L1022.5,652 L1024.3,655.3 L1026.1,658.7 L1027.8,662.6 L1029.6,666.8 L1031.4,670.4 L1033.1,674 L1034.9,677 L1036.7,680 L1038.5,682.9 L1040.2,684 L1042,683.5 L1043.8,682.6 L1045.5,681.3 L1047.3,681.2 L1049.1,681.5 L1050.8,681.3 L1052.6,680.6 L1054.4,679.8 L1056.2,678.8 L1056.2,679.5 L1054.4,679.7 L1052.6,679.7 L1050.8,679.5 L1049.1,679 L1047.3,678.4 L1045.5,677.6 L1043.8,676.7 L1042,675.2 L1040.2,673.2 L1038.5,670.5 L1036.7,667.4 L1034.9,664.2 L1033.1,661 L1031.4,657.8 L1029.6,654.6 L1027.8,651.6 L1026.1,648.8 L1024.3,646.3 L1022.5,644.1 L1020.8,642.1 L1019,640.4 L1017.2,638.8 L1015.4,637.4 L1013.7,636.1 L1011.9,635.3 L1010.1,634.9 L1008.4,634.9ZM1077.4,673.8 L1079.2,675.1 L1080.9,676.6 L1082.7,678.3 L1084.5,676.2 L1086.2,673.9 L1086.2,675.6 L1084.5,676 L1082.7,675.9 L1080.9,675.3 L1079.2,675 L1077.4,675Z" fill="#e67e7e" fill-opacity="0.72"/>
<path d="M3,672.7 L4.8,672.7 L6.5,672.7 L8.3,672.8 L10.1,673 L11.8,673.2 L13.6,673.4 L15.4,673.3 L17.2,673 L18.9,672.5 L20.7,671.9 L22.5,671.2 L24.2,670.3 L26,669.3 L27.8,668.5 L29.6,668 L31.3,667.6 L33.1,667.4 L34.9,667.4 L36.6,667.4 L38.4,667.5 L40.2,667.6 L41.9,667.7 L43.7,667.8 L45.5,667.8 L47.2,667.8 L49,667.6 L50.8,667 L52.6,666.1 L54.3,665.1 L56.1,663.8 L57.9,662.5 L59.6,661.1 L61.4,659.8 L63.2,658.9 L65,658.1 L66.7,657.5 L68.5,656.9 L70.3,656.3 L72,655.8 L73.8,655.2 L75.6,654.5 L77.3,653.8 L79.1,653 L80.9,652.5 L82.7,652.2 L84.4,651.9 L86.2,651.6 L88,651.3 L89.7,650.9 L91.5,650.3 L93.3,649.6 L95,648.9 L96.8,648.2 L98.6,647.5 L100.3,646.9 L102.1,646.3 L103.9,645.7 L105.7,645.3 L107.4,645.1 L109.2,645.3 L111,645.8 L112.7,646.5 L114.5,647.4 L116.3,648.6 L118,649.8 L119.8,651.1 L121.6,652.6 L123.4,654.1 L125.1,655.6 L126.9,657.2 L128.7,658.8 L130.4,660.5 L132.2,662.1 L134,663.7 L135.8,665.3 L137.5,666.8 L139.3,668.2 L141.1,669.5 L142.8,670.6 L144.6,671.7 L146.4,672.7 L148.1,673.5 L149.9,674.3 L151.7,674.9 L153.4,675.5 L155.2,676 L157,676.6 L158.8,677.2 L160.5,677.8 L162.3,678.4 L164.1,679 L165.8,679.6 L167.6,680.2 L169.4,680.9 L171.2,681.5 L172.9,682.2 L174.7,682.6 L176.5,682.7 L178.2,682.7 L180,682.5 L181.8,682.4 L183.5,682.2 L185.3,681.9 L187.1,681.5 L188.8,680.9 L190.6,680.4 L192.4,679.9 L194.2,679.3 L195.9,678.4 L197.7,677.3 L199.5,676.1 L201.2,674.6 L203,673.1 L204.8,671.6 L206.6,670 L208.3,668.5 L210.1,667.2 L211.9,666.1 L213.6,665.5 L215.4,665.2 L217.2,665.3 L218.9,665.7 L220.7,666.3 L222.5,667.2 L224.2,668.1 L226,669 L227.8,670 L229.6,671.1 L231.3,672.1 L233.1,673 L234.9,673.6 L236.6,674 L238.4,674.3 L240.2,674.4 L241.9,674.3 L243.7,674.3 L245.5,674.1 L247.3,673.9 L249,673.5 L250.8,672.9 L252.6,672.2 L254.3,671.5 L256.1,671.1 L257.9,671 L259.6,671.3 L261.4,671.7 L263.2,672.2 L265,671.9 L266.7,670.8 L268.5,668.9 L270.3,666.4 L272,664.2 L273.8,662.1 L275.6,660.2 L277.4,658.9 L279.1,657.9 L280.9,657.3 L282.7,656.9 L284.4,656.8 L286.2,656.9 L288,656.9 L289.7,657.1 L291.5,657.1 L293.3,656.9 L295.1,656.7 L296.8,656.3 L298.6,655.8 L300.4,655.4 L302.1,655 L303.9,654.8 L305.7,654.8 L307.4,654.9 L309.2,655.2 L311,655.5 L312.8,655.9 L314.5,656.2 L316.3,656.6 L318.1,656.9 L319.8,657.1 L321.6,657.4 L323.4,657.7 L325.1,657.9 L326.9,657.9 L328.7,657.5 L330.4,656.8 L332.2,655.7 L334,654.5 L335.8,653.1 L337.5,651.8 L339.3,650.5 L341.1,649.4 L342.8,648.4 L344.6,647.5 L346.4,646.7 L348.1,645.9 L349.9,645.3 L351.7,644.9 L353.5,644.9 L355.2,645.3 L357,646 L358.8,646.9 L360.5,647.9 L362.3,649 L364.1,650.1 L365.9,651 L367.6,651.8 L369.4,652.3 L371.2,652.5 L372.9,652.3 L374.7,651.9 L376.5,651.4 L378.2,650.8 L380,650.5 L381.8,650.5 L383.6,650.9 L385.3,651.8 L387.1,652.8 L388.9,654 L390.6,655.4 L392.4,657 L394.2,658.7 L395.9,660.5 L397.7,662.3 L399.5,664.2 L401.2,666.1 L403,668 L404.8,669.9 L406.6,671.7 L408.3,673.4 L410.1,675.1 L411.9,676.6 L413.6,677.9 L415.4,679.1 L417.2,680.1 L418.9,680.7 L420.7,681.2 L422.5,681.3 L424.3,681.1 L426,680.7 L427.8,680.2 L429.6,679.6 L431.3,678.8 L433.1,677.8 L434.9,676.7 L436.6,675.6 L438.4,674.4 L440.2,673.5 L442,673 L443.7,673 L445.5,673.5 L447.3,674.5 L449,675.7 L450.8,676.9 L452.6,678.1 L454.4,679.2 L456.1,680.1 L457.9,680.8 L459.7,681.3 L461.4,681.6 L463.2,681.6 L465,681.4 L466.7,681 L468.5,680.4 L470.3,679.6 L472.1,678.6 L473.8,677.5 L475.6,676.5 L477.4,675.8 L479.1,675.5 L480.9,675.4 L482.7,675.2 L484.4,675 L486.2,674.8 L488,674.4 L489.8,673.9 L491.5,673.3 L493.3,672.8 L495.1,672.2 L496.8,671.8 L498.6,671.4 L500.4,671.1 L502.1,670.8 L503.9,670.5 L505.7,670.2 L507.4,669.9 L509.2,669.6 L511,669.3 L512.8,669 L514.5,668.8 L516.3,668.9 L518.1,669.3 L519.8,669.9 L521.6,670.6 L523.4,671.5 L525.1,672.6 L526.9,673.8 L528.7,675.1 L530.5,676.3 L532.2,677.5 L534,678.8 L535.8,680.1 L537.5,681.2 L539.3,682 L541.1,682.4 L542.9,682 L544.6,680.8 L546.4,678.8 L548.2,676.1 L549.9,673.1 L551.7,669.8 L553.5,666.7 L555.2,663.6 L557,660.9 L558.8,658.5 L560.5,656.3 L562.3,654.5 L564.1,653 L565.9,651.7 L567.6,650.6 L569.4,649.7 L571.2,648.9 L572.9,648.2 L574.7,647.6 L576.5,646.8 L578.2,645.8 L580,644.6 L581.8,643.5 L583.6,642.5 L585.3,641.5 L587.1,640.5 L588.9,639.5 L590.6,638.5 L592.4,637.5 L594.2,636.5 L596,635.4 L597.7,634.4 L599.5,634.4 L601.3,635.3 L603,637 L604.8,639.2 L606.6,641.7 L608.3,644 L610.1,645.8 L611.9,646.9 L613.6,647.5 L615.4,647.8 L617.2,647.9 L619,648.3 L620.7,648.8 L622.5,649.7 L624.3,651.1 L626,652.9 L627.8,654.8 L629.6,656.7 L631.4,658.3 L633.1,659.5 L634.9,660.1 L636.7,660.2 L638.4,660 L640.2,659.6 L642,659 L643.7,658.1 L645.5,657.1 L647.3,655.8 L649,654.2 L650.8,652.3 L652.6,650.3 L654.4,648.2 L656.1,646 L657.9,644.2 L659.7,642.7 L661.4,641.6 L663.2,640.8 L665,640.3 L666.8,640.2 L668.5,640.4 L670.3,640.8 L672.1,641.2 L673.8,641.8 L675.6,642.4 L677.4,643.1 L679.1,644 L680.9,644.9 L682.7,645.8 L684.5,646.6 L686.2,647.4 L688,648.2 L689.8,649 L691.5,649.7 L693.3,650.4 L695.1,651 L696.8,651.8 L698.6,652.8 L700.4,654.1 L702.1,655.8 L703.9,657.9 L705.7,660.1 L707.5,662.5 L709.2,664.8 L711,667.1 L712.8,669.6 L714.5,672 L716.3,674.3 L718.1,676.5 L719.9,678.5 L721.6,680.1 L723.4,681.3 L725.2,682.3 L726.9,682.9 L728.7,683.4 L730.5,683.7 L732.2,683.6 L734,683.4 L735.8,682.8 L737.5,681.8 L739.3,680.4 L741.1,678.5 L742.9,676.6 L744.6,674.7 L746.4,673.1 L748.2,671.8 L749.9,671 L751.7,670.6 L753.5,670.4 L755.2,670.3 L757,670.3 L758.8,670.2 L760.6,670.7 L762.3,671.8 L764.1,673.5 L765.9,675.3 L767.6,677.2 L769.4,679.1 L771.2,680.8 L773,682.4 L774.7,683.8 L776.5,685.1 L778.3,686.3 L780,687.3 L781.8,688.1 L783.6,688.3 L785.3,687.9 L787.1,687.2 L788.9,686.4 L790.6,685.8 L792.4,685.3 L794.2,684.8 L796,684.3 L797.7,683.7 L799.5,683.1 L801.3,682.6 L803,682.1 L804.8,681.8 L806.6,681.9 L808.4,682.2 L810.1,682.5 L811.9,682.8 L813.7,683.1 L815.4,683.1 L817.2,683.1 L819,683 L820.7,683.2 L822.5,683.5 L824.3,683.1 L826,682.1 L827.8,680.5 L829.6,678.5 L831.4,676.3 L833.1,674.4 L834.9,673.1 L836.7,672.5 L838.4,672.3 L840.2,672.2 L842,672.3 L843.8,673.3 L845.5,674.7 L847.3,676.3 L849.1,676.5 L850.8,675.8 L852.6,674.2 L854.4,671.8 L856.1,669 L857.9,666 L859.7,663.1 L861.5,660.4 L863.2,658 L865,656 L866.8,654.4 L868.5,653.4 L870.3,652.8 L872.1,652.6 L873.8,652.7 L875.6,653 L877.4,653.5 L879.1,654 L880.9,654.4 L882.7,655 L884.5,655.7 L886.2,656.5 L888,657.5 L889.8,658.6 L891.5,659.8 L893.3,661.2 L895.1,662.8 L896.9,664.6 L898.6,666.7 L900.4,669.5 L902.2,672.9 L903.9,676.7 L905.7,680.3 L907.5,683.3 L909.2,685.5 L911,687.2 L912.8,688.3 L914.5,689 L916.3,689.6 L918.1,689.6 L919.9,689 L921.6,688.2 L923.4,687.2 L925.2,686.3 L926.9,685.4 L928.7,684.8 L930.5,684.5 L932.2,684 L934,683.5 L935.8,682.8 L937.6,682.2 L939.3,682 L941.1,682 L942.9,682.3 L944.6,682.4 L946.4,682.4 L948.2,682.5 L950,682.9 L951.7,683.4 L953.5,684 L955.3,684.3 L957,684.3 L958.8,684.1 L960.6,683.6 L962.3,683 L964.1,682.3 L965.9,681.5 L967.6,680.6 L969.4,679.7 L971.2,678.7 L973,676.9 L974.7,674.2 L976.5,670.5 L978.3,666.2 L980,661.7 L981.8,657.3 L983.6,653.3 L985.4,649.7 L987.1,646.5 L988.9,643.9 L990.7,641.8 L992.4,640 L994.2,638.5 L996,637.3 L997.7,636.2 L999.5,635.3 L1001.3,634.8 L1003,634.7 L1004.8,634.9 L1006.6,634.9 L1008.4,634.9 L1010.1,634.9 L1011.9,635.3 L1013.7,636.1 L1015.4,637.4 L1017.2,638.8 L1019,640.4 L1020.8,642.1 L1022.5,644.1 L1024.3,646.3 L1026.1,648.8 L1027.8,651.6 L1029.6,654.6 L1031.4,657.8 L1033.1,661 L1034.9,664.2 L1036.7,667.4 L1038.5,670.5 L1040.2,673.2 L1042,675.2 L1043.8,676.7 L1045.5,677.6 L1047.3,678.4 L1049.1,679 L1050.8,679.5 L1052.6,679.7 L1054.4,679.7 L1056.2,679.5 L1057.9,679.2 L1059.7,678.8 L1061.5,678.5 L1063.2,678.1 L1065,677.7 L1066.8,677.3 L1068.5,677.1 L1070.3,677 L1072.1,676.5 L1073.8,675.8 L1075.6,675.3 L1077.4,675 L1079.2,675 L1080.9,675.3 L1082.7,675.9 L1084.5,676 L1086.2,675.6 L1088,674.6 L1089.8,673.2 L1091.5,671.5 L1093.3,669.8" fill="none" stroke="#e0706c" stroke-width="1"/>
<path d="M3,672.3 L4.8,672.5 L6.5,672.8 L8.3,673.2 L10.1,673.6 L11.8,674 L13.6,674.1 L15.4,673 L17.2,671.8 L18.9,670.7 L20.7,669.5 L22.5,668.2 L24.2,666.8 L26,665.5 L27.8,665.3 L29.6,665.7 L31.3,666.2 L33.1,666.6 L34.9,667.1 L36.6,667.5 L38.4,667.9 L40.2,668.3 L41.9,668.2 L43.7,668 L45.5,667.9 L47.2,667.8 L49,666.8 L50.8,664.7 L52.6,662.6 L54.3,660.7 L56.1,658.9 L57.9,657.1 L59.6,655.4 L61.4,655 L63.2,655 L65,655 L66.7,655 L68.5,654.5 L70.3,654.1 L72,653.6 L73.8,653 L75.6,651.8 L77.3,650.6 L79.1,650.2 L80.9,650.5 L82.7,650.9 L84.4,650.8 L86.2,650.4 L88,650.1 L89.7,649.1 L91.5,647.9 L93.3,646.7 L95,646.1 L96.8,645.4 L98.6,644.8 L100.3,644.2 L102.1,643.9 L103.9,643.7 L105.7,643.4 L107.4,644.5 L109.2,646 L111,647.7 L112.7,649.4 L114.5,651.2 L116.3,653 L118,654.8 L119.8,656.5 L121.6,658.3 L123.4,660.1 L125.1,661.8 L126.9,663.6 L128.7,665.4 L130.4,667.1 L132.2,668.6 L134,670.1 L135.8,671.5 L137.5,672.7 L139.3,673.8 L141.1,674.7 L142.8,675.3 L144.6,675.9 L146.4,676.6 L148.1,676.9 L149.9,677.2 L151.7,677.5 L153.4,677.8 L155.2,678.4 L157,679 L158.8,679.6 L160.5,680.2 L162.3,680.8 L164.1,681.4 L165.8,682 L167.6,682.7 L169.4,683.4 L171.2,684.1 L172.9,684.8 L174.7,684.2 L176.5,683.3 L178.2,682.3 L180,682.1 L181.8,681.9 L183.5,681.6 L185.3,680.6 L187.1,679.7 L188.8,678.9 L190.6,678.4 L192.4,677.9 L194.2,676.8 L195.9,674.9 L197.7,672.9 L199.5,671 L201.2,669 L203,667 L204.8,665.4 L206.6,663.8 L208.3,662.3 L210.1,662 L211.9,661.8 L213.6,663 L215.4,664.1 L217.2,665.5 L218.9,667.2 L220.7,669 L222.5,670.5 L224.2,671.7 L226,672.9 L227.8,674 L229.6,675.2 L231.3,676.4 L233.1,676.4 L234.9,676.1 L236.6,675.7 L238.4,675.2 L240.2,674.7 L241.9,674.2 L243.7,673.9 L245.5,673.5 L247.3,672.9 L249,671.8 L250.8,670.6 L252.6,669.6 L254.3,668.6 L256.1,669.3 L257.9,671 L259.6,672.5 L261.4,673.4 L263.2,674.2 L265,670.6 L266.7,666.6 L268.5,661.2 L270.3,656.5 L272,655.1 L273.8,653.7 L275.6,652.9 L277.4,653.5 L279.1,654 L280.9,654.7 L282.7,655.6 L284.4,656.4 L286.2,656.9 L288,657.3 L289.7,657.6 L291.5,657.1 L293.3,656.4 L295.1,655.7 L296.8,654.8 L298.6,654 L300.4,653.4 L302.1,653.7 L303.9,654.1 L305.7,654.6 L307.4,655.5 L309.2,656.3 L311,656.9 L312.8,657.2 L314.5,657.6 L316.3,657.9 L318.1,658.1 L319.8,658.3 L321.6,658.5 L323.4,658.8 L325.1,658.9 L326.9,657.7 L328.7,656.2 L330.4,653.8 L332.2,651.4 L334,649.4 L335.8,647.9 L337.5,646.4 L339.3,645.4 L341.1,644.9 L342.8,644.4 L344.6,643.9 L346.4,643.3 L348.1,642.7 L349.9,643 L351.7,643.3 L353.5,645.1 L355.2,646.9 L357,648.7 L358.8,650.5 L360.5,652.1 L362.3,653.2 L364.1,654.4 L365.9,654.9 L367.6,654.6 L369.4,654.4 L371.2,653.3 L372.9,651.8 L374.7,650.3 L376.5,649.2 L378.2,648.3 L380,649.5 L381.8,650.7 L383.6,652.2 L385.3,655.3 L387.1,657.1 L388.9,658.9 L390.6,660.8 L392.4,663.2 L394.2,665.6 L395.9,667.8 L397.7,669.7 L399.5,671.7 L401.2,673.6 L403,675.6 L404.8,677.5 L406.6,678.9 L408.3,680.4 L410.1,681.7 L411.9,682.6 L413.6,683.4 L415.4,683.9 L417.2,683.7 L418.9,683.4 L420.7,682.8 L422.5,681.7 L424.3,680.5 L426,679.3 L427.8,678.2 L429.6,677 L431.3,675.5 L433.1,674 L434.9,672.4 L436.6,671 L438.4,669.7 L440.2,669.7 L442,671.2 L443.7,673 L445.5,675.7 L447.3,678.4 L449,680.5 L450.8,681.7 L452.6,682.8 L454.4,683.4 L456.1,683.7 L457.9,683.9 L459.7,683.4 L461.4,682.6 L463.2,681.7 L465,680.6 L466.7,679.4 L468.5,678.1 L470.3,676.3 L472.1,674.5 L473.8,673.1 L475.6,672.6 L477.4,672.8 L479.1,674.3 L480.9,674.9 L482.7,674.6 L484.4,674.4 L486.2,673.7 L488,672.8 L489.8,671.8 L491.5,671.2 L493.3,670.6 L495.1,670 L496.8,670 L498.6,670 L500.4,669.9 L502.1,669.6 L503.9,669.2 L505.7,668.9 L507.4,668.7 L509.2,668.4 L511,668.2 L512.8,667.9 L514.5,667.9 L516.3,669.4 L518.1,670.8 L519.8,672.2 L521.6,673.6 L523.4,675.1 L525.1,676.9 L526.9,678.6 L528.7,680.2 L530.5,681.1 L532.2,682.2 L534,684 L535.8,685.2 L537.5,685.8 L539.3,685.2 L541.1,683.8 L542.9,680.4 L544.6,676 L546.4,670.8 L548.2,665.4 L549.9,661 L551.7,656.7 L553.5,654 L555.2,651.5 L557,650.1 L558.8,648.7 L560.5,647.6 L562.3,647.2 L564.1,646.9 L565.9,646.6 L567.6,646.3 L569.4,646.1 L571.2,645.8 L572.9,645.4 L574.7,645.1 L576.5,643.5 L578.2,641.8 L580,640 L581.8,639.2 L583.6,638.4 L585.3,637.5 L587.1,636.6 L588.9,635.6 L590.6,634.6 L592.4,633.4 L594.2,632.2 L596,631 L597.7,630.8 L599.5,634.1 L601.3,638.8 L603,644.2 L604.8,648 L606.6,651.4 L608.3,653.2 L610.1,653.2 L611.9,651.4 L613.6,649.9 L615.4,649.1 L617.2,648.3 L619,649.6 L620.7,651 L622.5,653.2 L624.3,656.7 L626,660 L627.8,662.3 L629.6,664.5 L631.4,664.7 L633.1,664.3 L634.9,662.6 L636.7,660.7 L638.4,659.2 L640.2,657.8 L642,656.4 L643.7,654.7 L645.5,652.9 L647.3,650.7 L649,647.8 L650.8,644.8 L652.6,642.1 L654.4,639.8 L656.1,637.5 L657.9,636.7 L659.7,636.7 L661.4,637.2 L663.2,637.7 L665,638.3 L666.8,639.7 L668.5,641.1 L670.3,642.4 L672.1,643.1 L673.8,643.8 L675.6,644.8 L677.4,646.2 L679.1,647.6 L680.9,648.6 L682.7,649.2 L684.5,649.8 L686.2,650.6 L688,651.4 L689.8,652.2 L691.5,652.6 L693.3,653 L695.1,653.4 L696.8,655.1 L698.6,656.9 L700.4,659.1 L702.1,662.7 L703.9,666.1 L705.7,669.2 L707.5,671.9 L709.2,674.1 L711,676.5 L712.8,679.2 L714.5,681.6 L716.3,683.8 L718.1,685.3 L719.9,686.6 L721.6,686.5 L723.4,686.2 L725.2,686 L726.9,685.6 L728.7,685.3 L730.5,684.7 L732.2,683.5 L734,682.4 L735.8,680.5 L737.5,677.8 L739.3,674.7 L741.1,671.2 L742.9,668.8 L744.6,667.1 L746.4,666.7 L748.2,666.7 L749.9,667.8 L751.7,669 L753.5,669.5 L755.2,670 L757,670 L758.8,670 L760.6,672.7 L762.3,676.4 L764.1,680.1 L765.9,682.5 L767.6,684.8 L769.4,686.4 L771.2,687.6 L773,688.8 L774.7,689.6 L776.5,690.3 L778.3,691 L780,691.4 L781.8,691.5 L783.6,688.9 L785.3,686.3 L787.1,684.5 L788.9,683.3 L790.6,683.3 L792.4,683.3 L794.2,682.9 L796,682.1 L797.7,681.3 L799.5,680.8 L801.3,680.4 L803,680.1 L804.8,681 L806.6,682.2 L808.4,683.3 L810.1,683.7 L811.9,684 L813.7,684.2 L815.4,683.4 L817.2,682.7 L819,682.7 L820.7,683.8 L822.5,684.9 L824.3,681.7 L826,678 L827.8,674.2 L829.6,670.2 L831.4,667.5 L833.1,667 L834.9,667.9 L836.7,670.2 L838.4,671.3 L840.2,671.9 L842,673 L843.8,677.1 L845.5,680.5 L847.3,682.3 L849.1,677.6 L850.8,672.9 L852.6,667.5 L854.4,662.4 L856.1,657.9 L857.9,654.1 L859.7,651.5 L861.5,649.5 L863.2,648.2 L865,647.9 L866.8,648.2 L868.5,649.3 L870.3,650.6 L872.1,651.9 L873.8,653.1 L875.6,654.3 L877.4,655.2 L879.1,655.8 L880.9,656.4 L882.7,657.4 L884.5,658.5 L886.2,659.7 L888,661.3 L889.8,663.1 L891.5,664.8 L893.3,666.9 L895.1,668.9 L896.9,671.7 L898.6,675.3 L900.4,680.5 L902.2,686.5 L903.9,692.1 L905.7,694.4 L907.5,695.4 L909.2,694.6 L911,693.7 L912.8,692.6 L914.5,692.1 L916.3,691.8 L918.1,689.6 L919.9,686.9 L921.6,685 L923.4,683.3 L925.2,682.4 L926.9,681.8 L928.7,682.7 L930.5,683.1 L932.2,682.2 L934,681.2 L935.8,679.9 L937.6,679.9 L939.3,681.2 L941.1,682.2 L942.9,683.1 L944.6,682.9 L946.4,682.4 L948.2,683.2 L950,684.3 L951.7,685.3 L953.5,686.4 L955.3,685.7 L957,684.3 L958.8,683 L960.6,681.8 L962.3,680.6 L964.1,679.5 L965.9,678.3 L967.6,677.1 L969.4,675.9 L971.2,674.7 L973,669.8 L974.7,663.2 L976.5,655.8 L978.3,649 L980,643.5 L981.8,640.1 L983.6,637.2 L985.4,635.1 L987.1,634 L988.9,633.6 L990.7,633.2 L992.4,632.9 L994.2,632.6 L996,632.1 L997.7,631.8 L999.5,632.1 L1001.3,632.8 L1003,634.2 L1004.8,635.6 L1006.6,635.2 L1008.4,634.6 L1010.1,635.1 L1011.9,636.9 L1013.7,639.3 L1015.4,642.3 L1017.2,644.6 L1019,646.6 L1020.8,649 L1022.5,652 L1024.3,655.3 L1026.1,658.7 L1027.8,662.6 L1029.6,666.8 L1031.4,670.4 L1033.1,674 L1034.9,677 L1036.7,680 L1038.5,682.9 L1040.2,684 L1042,683.5 L1043.8,682.6 L1045.5,681.3 L1047.3,681.2 L1049.1,681.5 L1050.8,681.3 L1052.6,680.6 L1054.4,679.8 L1056.2,678.8 L1057.9,677.9 L1059.7,677.4 L1061.5,677 L1063.2,676.6 L1065,676.1 L1066.8,675.7 L1068.5,676.3 L1070.3,676.4 L1072.1,674.6 L1073.8,673.3 L1075.6,673.3 L1077.4,673.8 L1079.2,675.1 L1080.9,676.6 L1082.7,678.3 L1084.5,676.2 L1086.2,673.9 L1088,670.6 L1089.8,667.6 L1091.5,665 L1093.3,663" fill="none" stroke="#3c3ce2" stroke-width="1.1"/>
<path d="M3,672.7 H1139" stroke="#4a4ae8" stroke-width="1.1"/>
<g clip-path="url(#crsi70)"><path d="M3.3,765 L6.7,768.3 L10,768.3 L12.7,774 L16,763.3 L19.3,750 L21.7,746 L25,744 L27.3,753.3 L30,760 L33.3,756.7 L36,760 L38.7,768.3 L41.7,761.7 L44.3,760 L47.3,750 L50,738.3 L52.7,739.3 L55.3,735 L58.3,731.7 L61,736.7 L64,741.7 L66.7,743.3 L68.3,740 L70.7,743.3 L73.3,733.3 L75.7,729.3 L78.3,735 L81,733.3 L83.3,741.7 L86,738.3 L88.7,733.3 L91.7,728.3 L94.3,735 L96.7,733.3 L99.3,730.7 L101.7,733.3 L104,731.7 L106,730.7 L107.3,743.3 L108.3,753.3 L111.7,751.7 L114.3,749.3 L116.7,756.7 L119.3,755 L121.7,765 L124,770 L126.7,769.3 L129.3,771.7 L132,769.3 L134.7,771.7 L137.3,768.3 L140,773.3 L142.7,780 L145.3,775 L148,771.7 L150.7,772.7 L153.3,768.3 L156,776.7 L158,784 L160.7,779.3 L163.3,778.3 L166,783.3 L168.7,787.3 L171,790.7 L173.3,783.3 L175.7,775 L177.7,766.7 L180,775 L182.7,770 L185.3,765 L188,773.3 L190.7,766.7 L193.3,760 L196,759.3 L198.7,750 L201.3,746.7 L204,743.3 L206.7,746 L209.3,745 L212,755 L214.7,761.7 L217.3,770 L220,774 L222.7,771.7 L225,766.7 L227.3,776.7 L230,778.3 L232.7,768.3 L235,765 L237.3,768.3 L240,765 L242.7,761.7 L245.3,760 L248,755 L250.7,750 L252.7,744 L255,753.3 L257.3,766.7 L259.3,774 L261,780 L263.3,770 L265.3,753.3 L267.3,741.7 L269.3,736.7 L271.7,740 L274,741.7 L276.7,752.7 L279.3,754 L282,752.7 L284.7,753.3 L287.3,759.3 L290,753.3 L292.7,746.7 L295.3,743.3 L298,742.7 L301.7,741.7 L304,750 L306.7,746.7 L309.3,751.7 L312,750 L314.3,756.7 L316.7,750 L319.3,746 L321.7,751.7 L324,757.3 L326.7,746.7 L329.3,740 L332,737.3 L334.7,735 L337.3,736 L340,740 L342.7,738.3 L345.3,736.7 L348,734 L350.7,733.3 L352.7,741.7 L354.7,750 L357.3,755 L360,753.3 L362.7,749.3 L365.3,751.7 L368,746.7 L370,750 L372.7,738.3 L375.3,735 L377.3,743.3 L379.3,755 L382,753.3 L384.7,758.3 L386.7,757.3 L390,766.7 L393.3,771.7 L396.7,772.7 L400,775 L402.7,768.3 L405,776.7 L408.3,774 L411.7,780 L415,775 L418.3,771.7 L421.7,766.7 L425,768.3 L428.3,763.3 L431.7,761.7 L434.3,758.3 L437.3,753.3 L440,761.7 L442.7,770 L445.3,771.7 L447.7,780 L450,784 L452.7,778.3 L455.3,773.3 L458,774 L460.7,770 L463.3,768.3 L466,765 L468.7,761.7 L471.3,759.3 L473.3,757.3 L475.7,763.3 L478.3,771.7 L481,774 L483.7,768.3 L486.3,761.7 L489,760 L491.7,753.3 L494.3,761.7 L496.7,768.3 L499.3,763.3 L502,760 L504.7,765 L507.3,760 L510,761.7 L512.7,759.3 L514.3,751.7 L516,765 L518.3,773.3 L520.7,768.3 L523.3,775 L526,779.3 L528.7,780.7 L531,768.3 L533.3,781.7 L536,776.7 L538.7,771.7 L541,770 L543.3,755 L546,751.7 L548.3,745 L550.7,741.7 L552.7,737.3 L554.7,746.7 L557.3,744 L560,751.7 L562.7,750 L564.3,744 L566.7,750.7 L570,749.3 L573.3,746.7 L577.3,745 L579.3,735 L582,735 L584,740.7 L586.7,736.7 L590,735 L593.3,733.3 L595.7,729.3 L597.7,740 L599.3,756.7 L601.7,755 L604,761.7 L606,766.7 L608.3,760 L610.7,755 L613.3,752.7 L616,750 L618.7,753.3 L621.3,759.3 L623.3,758.3 L625.3,768.3 L627.3,771.7 L630,763.3 L632.3,756.7 L634.3,760 L636.7,754 L639.3,756 L642,753.3 L644.7,751.7 L647.3,749.3 L650,741.7 L652.7,740 L655.3,739.3 L657.3,737.3 L659.3,750 L661.3,748.3 L663.3,743.3 L666,750 L668.3,755 L670.7,751.7 L673.3,750 L676,747.3 L678.3,755 L680.7,766 L683.3,760 L686,757.3 L688.7,753.3 L691.3,751.7 L694,753.3 L696.7,760.7 L699.3,758.3 L701.3,765 L703.3,777.3 L705.7,768.3 L708,766.7 L710.7,770 L713.3,775 L716,778.3 L719.3,778.3 L721.7,770 L724,771.7 L726.7,770 L729.3,771.7 L732,768.3 L734,771.7 L736.7,763.3 L739.3,760 L741.7,751.7 L744,753.3 L746.7,755 L748.7,765 L751.3,763.3 L754,766 L756.7,763.3 L758.7,761.7 L760.7,771.7 L762.7,780 L765,773.3 L767.3,781.7 L770,775 L772.7,770.7 L775.3,776 L778,774 L780.7,776.7 L783.3,766.7 L786.7,765 L790,770 L793.3,770.7 L796,766 L798.3,772.7 L801,767.3 L804,770 L806.7,776.7 L810,780.7 L812.7,775 L815,766.7 L817.3,776 L820,776.7 L822.7,770 L825,758.3 L826.7,750.7 L828.7,751.7 L830.7,759.3 L833.3,758.3 L836,770 L838.7,765 L841.3,771.7 L844,778.3 L846.7,771.7 L849.3,761.7 L852,755 L854.7,751.7 L856.7,746.7 L859.3,746.7 L862,750.7 L864.7,750 L867.3,760 L870,758.3 L872.3,753.3 L875,761.7 L877.7,757.3 L880.3,756.7 L882.7,762.7 L885.3,760 L888,768.3 L890.7,766.7 L893.3,768.3 L896,771.7 L898.3,778.3 L900.7,787.3 L902.7,795 L904.3,780 L906.7,776 L909,770 L911.3,770.7 L913.3,776 L916,771.7 L918.7,768.3 L921.3,763.3 L923.3,762.7 L926,770 L928.7,772.7 L931.3,766.7 L933.3,763.3 L936,768.3 L938.7,766.7 L941.3,774 L943.3,765 L946,775 L948.7,772.7 L951.3,777.3 L954,768.3 L956.7,763.3 L959.3,766.7 L961.3,761.7 L964,765 L966,768.3 L968.7,761.7 L971.3,758.3 L973.3,755 L975,743.3 L977.3,738.3 L979.3,737.7 L981.3,744 L984,741.7 L986.7,745 L989.3,744 L992,742.7 L994.7,738.3 L996.7,746.7 L999.3,741.7 L1002,749.3 L1004.7,748.3 L1007.3,742.7 L1010,743.3 L1012.7,753.3 L1015.3,760 L1018,753.3 L1020,751.7 L1022.7,760 L1025.3,765 L1028,775 L1030.7,770.7 L1033.3,775 L1036,778.3 L1038.7,782.7 L1041,771.7 L1043.3,763.3 L1046,772.7 L1048.7,770 L1051.3,765 L1054,766.7 L1056.7,760.7 L1059.3,764 L1062,770 L1064.7,763.3 L1067.3,766 L1070,770 L1072.3,758.3 L1075,765 L1077.3,771.7 L1079.3,768.3 L1081.7,776 L1084,765 L1085.7,759.3 L1088,759.3 L1090,753.3 L1092,758.3 L1093.7,754.3 L1093.7,742.7 L3.3,742.7 Z" fill="#d9a9a9" fill-opacity="0.75"/></g>
<path d="M3,742.7 H1139 M3,788.3 H1139" stroke="#4a4ae8" stroke-width="1.1"/>
<path d="M3.3,765 L6.7,768.3 L10,768.3 L12.7,774 L16,763.3 L19.3,750 L21.7,746 L25,744 L27.3,753.3 L30,760 L33.3,756.7 L36,760 L38.7,768.3 L41.7,761.7 L44.3,760 L47.3,750 L50,738.3 L52.7,739.3 L55.3,735 L58.3,731.7 L61,736.7 L64,741.7 L66.7,743.3 L68.3,740 L70.7,743.3 L73.3,733.3 L75.7,729.3 L78.3,735 L81,733.3 L83.3,741.7 L86,738.3 L88.7,733.3 L91.7,728.3 L94.3,735 L96.7,733.3 L99.3,730.7 L101.7,733.3 L104,731.7 L106,730.7 L107.3,743.3 L108.3,753.3 L111.7,751.7 L114.3,749.3 L116.7,756.7 L119.3,755 L121.7,765 L124,770 L126.7,769.3 L129.3,771.7 L132,769.3 L134.7,771.7 L137.3,768.3 L140,773.3 L142.7,780 L145.3,775 L148,771.7 L150.7,772.7 L153.3,768.3 L156,776.7 L158,784 L160.7,779.3 L163.3,778.3 L166,783.3 L168.7,787.3 L171,790.7 L173.3,783.3 L175.7,775 L177.7,766.7 L180,775 L182.7,770 L185.3,765 L188,773.3 L190.7,766.7 L193.3,760 L196,759.3 L198.7,750 L201.3,746.7 L204,743.3 L206.7,746 L209.3,745 L212,755 L214.7,761.7 L217.3,770 L220,774 L222.7,771.7 L225,766.7 L227.3,776.7 L230,778.3 L232.7,768.3 L235,765 L237.3,768.3 L240,765 L242.7,761.7 L245.3,760 L248,755 L250.7,750 L252.7,744 L255,753.3 L257.3,766.7 L259.3,774 L261,780 L263.3,770 L265.3,753.3 L267.3,741.7 L269.3,736.7 L271.7,740 L274,741.7 L276.7,752.7 L279.3,754 L282,752.7 L284.7,753.3 L287.3,759.3 L290,753.3 L292.7,746.7 L295.3,743.3 L298,742.7 L301.7,741.7 L304,750 L306.7,746.7 L309.3,751.7 L312,750 L314.3,756.7 L316.7,750 L319.3,746 L321.7,751.7 L324,757.3 L326.7,746.7 L329.3,740 L332,737.3 L334.7,735 L337.3,736 L340,740 L342.7,738.3 L345.3,736.7 L348,734 L350.7,733.3 L352.7,741.7 L354.7,750 L357.3,755 L360,753.3 L362.7,749.3 L365.3,751.7 L368,746.7 L370,750 L372.7,738.3 L375.3,735 L377.3,743.3 L379.3,755 L382,753.3 L384.7,758.3 L386.7,757.3 L390,766.7 L393.3,771.7 L396.7,772.7 L400,775 L402.7,768.3 L405,776.7 L408.3,774 L411.7,780 L415,775 L418.3,771.7 L421.7,766.7 L425,768.3 L428.3,763.3 L431.7,761.7 L434.3,758.3 L437.3,753.3 L440,761.7 L442.7,770 L445.3,771.7 L447.7,780 L450,784 L452.7,778.3 L455.3,773.3 L458,774 L460.7,770 L463.3,768.3 L466,765 L468.7,761.7 L471.3,759.3 L473.3,757.3 L475.7,763.3 L478.3,771.7 L481,774 L483.7,768.3 L486.3,761.7 L489,760 L491.7,753.3 L494.3,761.7 L496.7,768.3 L499.3,763.3 L502,760 L504.7,765 L507.3,760 L510,761.7 L512.7,759.3 L514.3,751.7 L516,765 L518.3,773.3 L520.7,768.3 L523.3,775 L526,779.3 L528.7,780.7 L531,768.3 L533.3,781.7 L536,776.7 L538.7,771.7 L541,770 L543.3,755 L546,751.7 L548.3,745 L550.7,741.7 L552.7,737.3 L554.7,746.7 L557.3,744 L560,751.7 L562.7,750 L564.3,744 L566.7,750.7 L570,749.3 L573.3,746.7 L577.3,745 L579.3,735 L582,735 L584,740.7 L586.7,736.7 L590,735 L593.3,733.3 L595.7,729.3 L597.7,740 L599.3,756.7 L601.7,755 L604,761.7 L606,766.7 L608.3,760 L610.7,755 L613.3,752.7 L616,750 L618.7,753.3 L621.3,759.3 L623.3,758.3 L625.3,768.3 L627.3,771.7 L630,763.3 L632.3,756.7 L634.3,760 L636.7,754 L639.3,756 L642,753.3 L644.7,751.7 L647.3,749.3 L650,741.7 L652.7,740 L655.3,739.3 L657.3,737.3 L659.3,750 L661.3,748.3 L663.3,743.3 L666,750 L668.3,755 L670.7,751.7 L673.3,750 L676,747.3 L678.3,755 L680.7,766 L683.3,760 L686,757.3 L688.7,753.3 L691.3,751.7 L694,753.3 L696.7,760.7 L699.3,758.3 L701.3,765 L703.3,777.3 L705.7,768.3 L708,766.7 L710.7,770 L713.3,775 L716,778.3 L719.3,778.3 L721.7,770 L724,771.7 L726.7,770 L729.3,771.7 L732,768.3 L734,771.7 L736.7,763.3 L739.3,760 L741.7,751.7 L744,753.3 L746.7,755 L748.7,765 L751.3,763.3 L754,766 L756.7,763.3 L758.7,761.7 L760.7,771.7 L762.7,780 L765,773.3 L767.3,781.7 L770,775 L772.7,770.7 L775.3,776 L778,774 L780.7,776.7 L783.3,766.7 L786.7,765 L790,770 L793.3,770.7 L796,766 L798.3,772.7 L801,767.3 L804,770 L806.7,776.7 L810,780.7 L812.7,775 L815,766.7 L817.3,776 L820,776.7 L822.7,770 L825,758.3 L826.7,750.7 L828.7,751.7 L830.7,759.3 L833.3,758.3 L836,770 L838.7,765 L841.3,771.7 L844,778.3 L846.7,771.7 L849.3,761.7 L852,755 L854.7,751.7 L856.7,746.7 L859.3,746.7 L862,750.7 L864.7,750 L867.3,760 L870,758.3 L872.3,753.3 L875,761.7 L877.7,757.3 L880.3,756.7 L882.7,762.7 L885.3,760 L888,768.3 L890.7,766.7 L893.3,768.3 L896,771.7 L898.3,778.3 L900.7,787.3 L902.7,795 L904.3,780 L906.7,776 L909,770 L911.3,770.7 L913.3,776 L916,771.7 L918.7,768.3 L921.3,763.3 L923.3,762.7 L926,770 L928.7,772.7 L931.3,766.7 L933.3,763.3 L936,768.3 L938.7,766.7 L941.3,774 L943.3,765 L946,775 L948.7,772.7 L951.3,777.3 L954,768.3 L956.7,763.3 L959.3,766.7 L961.3,761.7 L964,765 L966,768.3 L968.7,761.7 L971.3,758.3 L973.3,755 L975,743.3 L977.3,738.3 L979.3,737.7 L981.3,744 L984,741.7 L986.7,745 L989.3,744 L992,742.7 L994.7,738.3 L996.7,746.7 L999.3,741.7 L1002,749.3 L1004.7,748.3 L1007.3,742.7 L1010,743.3 L1012.7,753.3 L1015.3,760 L1018,753.3 L1020,751.7 L1022.7,760 L1025.3,765 L1028,775 L1030.7,770.7 L1033.3,775 L1036,778.3 L1038.7,782.7 L1041,771.7 L1043.3,763.3 L1046,772.7 L1048.7,770 L1051.3,765 L1054,766.7 L1056.7,760.7 L1059.3,764 L1062,770 L1064.7,763.3 L1067.3,766 L1070,770 L1072.3,758.3 L1075,765 L1077.3,771.7 L1079.3,768.3 L1081.7,776 L1084,765 L1085.7,759.3 L1088,759.3 L1090,753.3 L1092,758.3 L1093.7,754.3" fill="none" stroke="#ff1010" stroke-width="1.9" stroke-linejoin="round"/>
<g font-family='"Liberation Sans", Arial, sans-serif' font-size="11" fill="#1c1c1c">
<g stroke="#c2c2c2" stroke-width="1">
<path d="M1140,578.5 h3.5"/>
<path d="M1140,531.5 h3.5"/>
<path d="M1140,485.5 h3.5"/>
<path d="M1140,438.5 h3.5"/>
<path d="M1140,391.5 h3.5"/>
<path d="M1140,345.5 h3.5"/>
<path d="M1140,298.5 h3.5"/>
<path d="M1140,252.5 h3.5"/>
<path d="M1140,205.5 h3.5"/>
<path d="M1140,158.5 h3.5"/>
<path d="M1140,112.5 h3.5"/>
<path d="M1140,65.5 h3.5"/>
</g>
<text x="1146" y="582.5">6</text>
<text x="1146" y="535.9">7</text>
<text x="1146" y="489.3">8</text>
<text x="1146" y="442.6">9</text>
<text x="1146" y="396.0" font-weight="bold">10</text>
<text x="1146" y="349.3">11</text>
<text x="1146" y="302.7">12</text>
<text x="1146" y="256.1">13</text>
<text x="1146" y="209.4">14</text>
<text x="1146" y="162.8">15</text>
<text x="1146" y="116.1">16</text>
<text x="1146" y="69.5">17</text>
<text x="1145.6" y="601.2">50M</text>
<text x="1145.6" y="641.4">0,5</text>
<path d="M1140,708.5 h3.5" stroke="#c2c2c2"/>
<text x="1145.6" y="712.9" font-weight="bold" font-size="11.5">100</text>
<path d="M1140,731.5 h3.5" stroke="#c2c2c2"/>
<text x="1145.6" y="735.6">80</text>
<path d="M1140,754.5 h3.5" stroke="#c2c2c2"/>
<text x="1145.6" y="758.4">60</text>
<path d="M1140,777.5 h3.5" stroke="#c2c2c2"/>
<text x="1145.6" y="781.1">40</text>
<path d="M1140,799.5 h3.5" stroke="#c2c2c2"/>
<text x="1145.6" y="803.9">20</text>
<path d="M1140,820.5 h3.5" stroke="#c2c2c2"/>
<text x="1145.6" y="824.4" font-weight="bold" font-size="11.5">0</text>
<path d="M1140,720.5 h2" stroke="#c9c9c9"/>
<path d="M1140,743.5 h2" stroke="#c9c9c9"/>
<path d="M1140,765.5 h2" stroke="#c9c9c9"/>
<path d="M1140,788.5 h2" stroke="#c9c9c9"/>
<path d="M1140,811.5 h2" stroke="#c9c9c9"/>
<path d="M1140,592.5 h3.5 M1140,637.5 h3.5" stroke="#c2c2c2"/>
</g>
<g font-family='"Liberation Sans", Arial, sans-serif'>
<rect x="1144.5" y="83.0" width="38.5" height="13.7" fill="#f7c906" stroke="#bcbcbc" stroke-width="1"/>
<text x="1164.0" y="95.0" font-size="11.7" fill="#1a1400" text-anchor="middle">16,330</text>
<path d="M1140,97.6 h4" stroke="#1a1a40" stroke-width="1.8"/>
<rect x="1144.5" y="97.5" width="38.5" height="14.2" fill="#f7f7f7" stroke="#bcbcbc" stroke-width="1"/>
<text x="1164.0" y="109.5" font-size="11.7" fill="#a646dc" text-anchor="middle">16,320</text>
<path d="M1140,96.9 h4" stroke="#9932cc" stroke-width="0.8"/>
<rect x="1144.5" y="117.5" width="38.5" height="14.5" fill="#f7f7f7" stroke="#bcbcbc" stroke-width="1"/>
<text x="1164.0" y="129.5" font-size="11.7" fill="#3a50f0" text-anchor="middle">15,585</text>
<path d="M1140,131.3 h4" stroke="#2a4af0" stroke-width="1.0"/>
<rect x="1144.5" y="126.0" width="38.5" height="14.5" fill="#f7f7f7" stroke="#bcbcbc" stroke-width="1"/>
<text x="1164.0" y="138.0" font-size="11.7" fill="#e8807a" text-anchor="middle">15,549</text>
<rect x="1144.5" y="131.5" width="38.5" height="15.0" fill="#f7f7f7" stroke="#bcbcbc" stroke-width="1"/>
<text x="1164.0" y="143.5" font-size="11.7" fill="#e8807a" text-anchor="middle">15,549</text>
<path d="M1140,133.3 h4" stroke="#e8706e" stroke-width="1.0"/>
<rect x="1144.5" y="148.3" width="38.5" height="14.5" fill="#f7f7f7" stroke="#bcbcbc" stroke-width="1"/>
<text x="1164.0" y="160.3" font-size="11.7" fill="#7ae61e" text-anchor="middle">15,083</text>
<path d="M1140,155.0 h4" stroke="#6cf028" stroke-width="1.0"/>
<rect x="1144.5" y="159.5" width="38.5" height="14.5" fill="#f7f7f7" stroke="#bcbcbc" stroke-width="1"/>
<text x="1164.0" y="171.5" font-size="11.7" fill="#ff9312" text-anchor="middle">14,815</text>
<path d="M1140,167.0 h4" stroke="#ffa030" stroke-width="1.0"/>
<rect x="1144.5" y="161.5" width="38.5" height="14.5" fill="#f7f7f7" stroke="#bcbcbc" stroke-width="1"/>
<text x="1164.0" y="173.5" font-size="11.7" fill="#9636cc" text-anchor="middle">14,778</text>
<path d="M1140,169.0 h4" stroke="#9932cc" stroke-width="1.0"/>
<rect x="1144.5" y="173.0" width="38.5" height="14.3" fill="#f7f7f7" stroke="#bcbcbc" stroke-width="1"/>
<text x="1164.0" y="185.0" font-size="11.7" fill="#22ead2" text-anchor="middle">14,631</text>
<path d="M1140,176.2 h4" stroke="#12e6cf" stroke-width="1.0"/>
<rect x="1144.5" y="607.6" width="38.0" height="14.5" fill="#f7f7f7" stroke="#bcbcbc" stroke-width="1"/>
<text x="1163.8" y="619.6" font-size="11.7" fill="#36b236" text-anchor="middle">8 395k</text>
<path d="M1140,618.3 h4" stroke="#36b236" stroke-width="1.0"/>
<rect x="1144.5" y="648.9" width="38.5" height="14.5" fill="#f7f7f7" stroke="#bcbcbc" stroke-width="1"/>
<text x="1164.0" y="660.9" font-size="11.7" fill="#3c3ce4" text-anchor="middle">0,1589</text>
<path d="M1140,661.4 h4" stroke="#3a3ae0" stroke-width="1.0"/>
<rect x="1144.5" y="658.0" width="38.5" height="14.5" fill="#f7f7f7" stroke="#bcbcbc" stroke-width="1"/>
<text x="1164.0" y="670.0" font-size="11.7" fill="#58cc58" text-anchor="middle">0,1036</text>
<path d="M1140,664.5 h4" stroke="#58c858" stroke-width="1.0"/>
<rect x="1144.5" y="667.2" width="38.5" height="14.5" fill="#f7f7f7" stroke="#bcbcbc" stroke-width="1"/>
<text x="1164.0" y="679.2" font-size="11.7" fill="#e8807a" text-anchor="middle">0,0553</text>
<path d="M1140,667.4 h4" stroke="#e8706e" stroke-width="1.0"/>
<rect x="1144.5" y="746.8" width="38.8" height="14.8" fill="#f7f7f7" stroke="#bcbcbc" stroke-width="1"/>
<text x="1164.2" y="758.8" font-size="11.7" fill="#ff2424" text-anchor="middle">59,926</text>
<path d="M1140,754.3 h4" stroke="#ff2020" stroke-width="1.0"/>
</g>
<g font-family='"Liberation Sans", Arial, sans-serif' font-size="12" fill="#1c1c1c" text-anchor="middle">
<path d="M45.5,827.5 v3.5M119.5,827.5 v3.5M189.5,827.5 v3.5M261.5,827.5 v3.5M331.5,827.5 v3.5M403.5,827.5 v3.5M478.5,827.5 v3.5M554.5,827.5 v3.5M624.5,827.5 v3.5M695.5,827.5 v3.5M766.5,827.5 v3.5M837.5,827.5 v3.5M912.5,827.5 v3.5M987.5,827.5 v3.5M1061.5,827.5 v3.5" stroke="#a8a8a8" stroke-width="1"/>
<text x="45.0" y="843">sept.</text>
<text x="119.3" y="843">nov.</text>
<text x="189.3" y="843" font-weight="bold">2014</text>
<text x="261.0" y="843">mars</text>
<text x="331.0" y="843">mai</text>
<text x="403.3" y="843">juil.</text>
<text x="478.3" y="843">sept.</text>
<text x="554.7" y="843">nov.</text>
<text x="624.3" y="843" font-weight="bold">2015</text>
<text x="695.0" y="843">mars</text>
<text x="766.7" y="843">mai</text>
<text x="837.7" y="843">juil.</text>
<text x="912.7" y="843">sept.</text>
<text x="987.3" y="843">nov.</text>
<text x="1061.7" y="843" font-weight="bold">2016</text>
</g>
<defs>
<g id="ic-wrench"><path d="M1.2,10.6 L5.6,6.2 C5,4.4 5.6,2.6 7.2,1.6 C8,1.1 9,1 9.8,1.3 L7.8,3.3 L8.3,4.9 L9.9,5.4 L11.6,3.4 C12,4.9 11.4,6.5 10,7.3 C9,7.9 7.9,7.9 6.9,7.6 L2.6,11.9 C2.2,12.3 1.5,12.3 1.1,11.9 C0.8,11.5 0.8,10.9 1.2,10.6 Z" fill="#fff" stroke="#1c1c1c" stroke-width="1.35" stroke-linejoin="round"/></g>
<g id="ic-win"><rect x="0.8" y="0.8" width="9.8" height="10" rx="1.6" fill="#fff" stroke="#222" stroke-width="1.3"/><rect x="0.8" y="0.8" width="9.8" height="3" rx="1.2" fill="#222"/></g>
<g id="ic-close"><circle cx="5.3" cy="5.3" r="5.3" fill="#262626"/><path d="M3,3 L7.6,7.6 M7.6,3 L3,7.6" stroke="#fff" stroke-width="1.9"/></g>
<g id="ic-doc"><path d="M0.5,0.5 H7.5 L10.5,3.5 V10.5 H0.5 Z" fill="#f1f1f1" stroke="#c2c2c2" stroke-width="1"/><path d="M5.5,3 V8 M3.2,5.8 L5.5,8.2 L7.8,5.8" fill="none" stroke="#b9b9b9" stroke-width="1.5"/></g>
<g id="ic-doc2"><path d="M0.5,0.5 H7.5 L10.5,3.5 V10.5 H0.5 Z" fill="#f1f1f1" stroke="#c2c2c2" stroke-width="1"/><path d="M5.5,8.4 V3.6 M3.2,5.8 L5.5,3.4 L7.8,5.8" fill="none" stroke="#b9b9b9" stroke-width="1.5"/></g>
</defs>
<rect x="3.5" y="48.0" width="100.0" height="16.5" fill="#f7f7f7" stroke="#cfcfcf" stroke-width="1"/>
<text x="6" y="59.7" font-family='"Liberation Sans", Arial, sans-serif' font-size="11.8" fill="#2a2a2a">Prix</text>
<use href="#ic-wrench" transform="translate(29.0,49.8) scale(0.9)"/>
<use href="#ic-win" x="44.2" y="50.2"/>
<use href="#ic-close" x="59.6" y="50.5"/>
<use href="#ic-doc" x="75.0" y="50.3"/>
<use href="#ic-doc2" x="90.0" y="50.3"/>
<rect x="3.5" y="591.5" width="90.2" height="16.7" fill="#f7f7f7" stroke="#cfcfcf" stroke-width="1"/>
<text x="6" y="603.6" font-family='"Liberation Sans", Arial, sans-serif' font-size="11.8" fill="#2a2a2a">Volume</text>
<use href="#ic-wrench" transform="translate(49.4,593.7) scale(0.9)"/>
<use href="#ic-win" x="64.6" y="594.1"/>
<use href="#ic-close" x="80.0" y="594.4"/>
<rect x="3.5" y="626.5" width="136.5" height="15.9" fill="#f7f7f7" stroke="#cfcfcf" stroke-width="1"/>
<text x="6" y="638.2" font-family='"Liberation Sans", Arial, sans-serif' font-size="11.8" fill="#2a2a2a">MACD (12 26 9)</text>
<use href="#ic-wrench" transform="translate(95.0,628.3) scale(0.9)"/>
<use href="#ic-win" x="110.2" y="628.7"/>
<use href="#ic-close" x="125.6" y="629.0"/>
<rect x="3.5" y="703.0" width="227.0" height="16.0" fill="#f7f7f7" stroke="#cfcfcf" stroke-width="1"/>
<text x="6" y="714.5" font-family='"Liberation Sans", Arial, sans-serif' font-size="11.8" fill="#2a2a2a">Relative strength index (RSI) (14)</text>
<use href="#ic-wrench" transform="translate(185.5,704.6) scale(0.9)"/>
<use href="#ic-win" x="200.7" y="705.0"/>
<use href="#ic-close" x="216.1" y="705.3"/>
<text x="107" y="60.3" font-family='"Liberation Sans", Arial, sans-serif' font-size="12" fill="#4f7a1e">Année :+Haut 16,330 +Bas 14,655</text>
<g font-family='"Liberation Sans", Arial, sans-serif' font-size="10.6" fill="#506a28">
<text x="5.6" y="87.4">16,468</text><text x="5.6" y="128">15,6</text><text x="5.6" y="298.2">11,959</text>
</g>
<text x="5" y="586" font-family='"Liberation Sans", Arial, sans-serif' font-size="9.05" fill="#4a4a4a">© ProRealTime.com <tspan font-style="italic" fill="#46583a" dx="1.5">Données en fin de journée</tspan></text>
</svg>
</div>
</body>
</html>
